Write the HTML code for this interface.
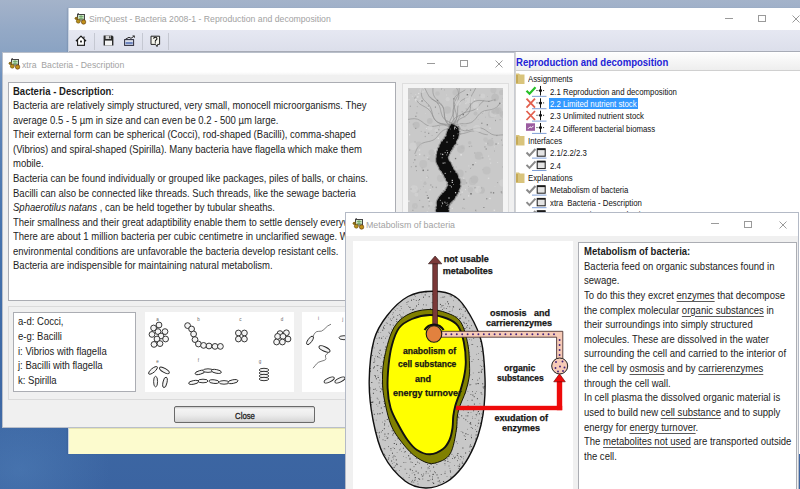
<!DOCTYPE html>
<html><head><meta charset="utf-8">
<style>
*{margin:0;padding:0;box-sizing:border-box}
html,body{width:800px;height:489px;overflow:hidden}
body{position:relative;font-family:"Liberation Sans",sans-serif;
background:radial-gradient(ellipse 90px 70px at 20px 470px,rgba(90,140,195,.35),rgba(90,140,195,0)),linear-gradient(180deg,#a4b3ca 0px,#94a9c6 30px,#8aa3c3 52px,#6f92bf 75px,#5b82b6 130px,#4673ad 230px,#3f6ba7 330px,#3b64a1 489px);}
.a{position:absolute}
.t{position:absolute;white-space:nowrap;transform-origin:0 0;transform:scaleX(.865);font-size:11px;line-height:14.55px;color:#1c1c1c}
.win{position:absolute;background:#fff;border:1px solid #8f9db5}
.ttl{position:absolute;white-space:nowrap;transform-origin:0 0;transform:scaleX(1.01);font-size:8.6px;line-height:10px;color:#a2a2a2}
.ctl{position:absolute;}
.tree{position:absolute;white-space:nowrap;transform-origin:0 0;transform:scaleX(.866);font-size:9px;line-height:12.4px;color:#111}
u{text-decoration:underline;text-decoration-color:#5a5a5a;text-underline-offset:1.5px}
.dg{position:absolute;white-space:nowrap;font-weight:bold;font-size:9px;color:#151515;transform-origin:0 0;-webkit-text-stroke:.25px #151515}
</style></head><body>

<!-- MAIN WINDOW -->
<div class="a" style="left:68px;top:8px;width:740px;height:445.5px;background:#fff;border-left:1px solid #c8d2e0;box-shadow:-1px 0 1px rgba(40,60,90,.12)"></div>
<div class="a" style="left:69px;top:30px;width:740px;height:22px;background:linear-gradient(#e6e8f2,#dcdfeb);border-bottom:1px solid #a7abb6"></div>
<div class="ttl" style="left:88.5px;top:13.9px">SimQuest - Bacteria 2008-1 - Reproduction and decomposition</div>
<!-- main window icon -->
<svg class="a" style="left:74px;top:12px" width="13" height="13" viewBox="0 0 13 13">
<path d="M3.5 2.5 L4.5 1" stroke="#333" stroke-width="1"/>
<rect x="3.5" y="2.5" width="7" height="5.5" fill="#cfe3c8" stroke="#444" stroke-width="1"/>
<path d="M5 4.5h4.5M5 6.3h4.5M7 3v5" stroke="#5a9a50" stroke-width="0.7"/>
<circle cx="2.3" cy="6.3" r="1.6" fill="#8a6a18"/>
<circle cx="4.3" cy="9.2" r="2" fill="#b8901c" stroke="#5a4008" stroke-width="0.5"/>
<circle cx="9.6" cy="10" r="2.2" fill="#c09018" stroke="#5a3008" stroke-width="0.6"/>
</svg>
<!-- main window controls -->
<div class="a" style="left:725px;top:18px;width:7.5px;height:1px;background:#9a9a9a"></div>
<div class="a" style="left:758px;top:14.5px;width:8px;height:7.5px;border:1px solid #9a9a9a"></div>
<svg class="a" style="left:792px;top:15px" width="8" height="8"><path d="M.5 .5L7.5 7.5M7.5 .5L.5 7.5" stroke="#9a9a9a" stroke-width="1"/></svg>
<!-- toolbar separators -->
<div class="a" style="left:94px;top:33px;width:1px;height:17px;background:#c5c8d2"></div>
<div class="a" style="left:142px;top:33px;width:1px;height:17px;background:#c5c8d2"></div>
<div class="a" style="left:168px;top:33px;width:1px;height:17px;background:#c5c8d2"></div>
<!-- toolbar icons -->
<svg class="a" style="left:75px;top:35px" width="12" height="11" viewBox="0 0 12 11">
<path d="M1 6.2L6 1.2L11 6.2M2.6 4.8v5.4h6.8V4.8M9 3.2V1.5" fill="#fff" stroke="#1a1a1a" stroke-width="1.05"/><path d="M2.6 5v5.2h6.8V5L6 1.8z" fill="#fff"/><path d="M1 6.2L6 1.2L11 6.2M2.6 4.8v5.4h6.8V4.8" fill="none" stroke="#1a1a1a" stroke-width="1.05"/><rect x="5.1" y="5.6" width="1.8" height="1.8" fill="#1a1a1a"/></svg>
<svg class="a" style="left:103px;top:35px" width="11" height="11" viewBox="0 0 11 11">
<path d="M0.6 0.6h8.6l1.2 1.2v8.6H0.6z" fill="#2a2a2a"/><rect x="2.6" y="0.6" width="5.4" height="3.4" fill="#d4d4d4"/><rect x="6.2" y="1.2" width="1.2" height="2.2" fill="#2a2a2a"/><rect x="2" y="5.6" width="7" height="4.8" fill="#f4f4f4"/></svg>
<svg class="a" style="left:124px;top:35px" width="11" height="11" viewBox="0 0 11 11">
<rect x="0.6" y="4.6" width="9" height="5.8" fill="#d9deea" stroke="#2a2a3a" stroke-width="1"/><rect x="1.5" y="7" width="7.2" height="2.2" fill="#6f86c0"/><path d="M1.5 4.2L5 2.3l2 1 3-2" fill="none" stroke="#2a2a2a" stroke-width="1"/><path d="M8.5 0.8h2v2" fill="none" stroke="#2a2a2a" stroke-width=".8"/></svg>
<svg class="a" style="left:150px;top:34.5px" width="11" height="13" viewBox="0 0 11 13">
<path d="M1 1.2h8.6v8.2H7.6l-0.6 2.2-1.4-2.2H1z" fill="#f6f6ee" stroke="#222" stroke-width="1"/><path d="M3.7 3.8q0-1.6 1.6-1.6t1.6 1.5q0 .9-.8 1.3t-.8 1.3v.5" fill="none" stroke="#111" stroke-width="1.1"/><rect x="4.8" y="7.3" width="1.1" height="1.1" fill="#111"/></svg>

<!-- tree panel -->
<div class="a" style="left:515px;top:52px;width:1px;height:170px;background:#d4d4d4"></div>
<div class="a" style="left:516px;top:53px;width:290px;height:18px;background:linear-gradient(#fdfdfd,#eeeeee);border-bottom:1px solid #d0d0d0"></div>
<div class="a" style="left:516px;top:56.5px;white-space:nowrap;font-weight:bold;font-size:10px;color:#2323d6;transform-origin:0 0;transform:scaleX(.955)">Reproduction and decomposition</div>

<!--TREE-->
<div class="a" style="left:549px;top:98.3px;width:89px;height:10.5px;background:#3399ff"></div>
<svg class="a" style="left:512px;top:70px" width="40" height="155" viewBox="512 70 40 155">
<path d="M516,73.5 h3 l1,1 h4.5 v9.5 h-8.5z" fill="#d9c47c"/><rect x="516" y="75" width="2" height="8" fill="#b89a40" opacity=".6"/>
<rect x="532" y="95.85" width="14.5" height="1" fill="#7f9fd6"/>
<path d="M526.5,90.75 l3,3 l6,-6.5" fill="none" stroke="#27c027" stroke-width="2.2"/>
<rect x="540" y="85.95" width="1" height="9.5" fill="#111"/><path d="M536.5,90.55 h8" stroke="#111" stroke-width="1" stroke-dasharray="1 1.2"/><circle cx="540.5" cy="90.55" r="1.5" fill="#111"/>
<rect x="532" y="108.19999999999999" width="14.5" height="1" fill="#7f9fd6"/>
<path d="M526.5,98.6 l8.5,9 M535,98.6 l-8.5,9" fill="none" stroke="#e2604e" stroke-width="1.8"/>
<rect x="540" y="98.3" width="1" height="9.5" fill="#111"/><path d="M536.5,102.89999999999999 h8" stroke="#111" stroke-width="1" stroke-dasharray="1 1.2"/><circle cx="540.5" cy="102.89999999999999" r="1.5" fill="#111"/>
<rect x="532" y="120.6" width="14.5" height="1" fill="#7f9fd6"/>
<path d="M526.5,111 l8.5,9 M535,111 l-8.5,9" fill="none" stroke="#e2604e" stroke-width="1.8"/>
<rect x="540" y="110.7" width="1" height="9.5" fill="#111"/><path d="M536.5,115.3 h8" stroke="#111" stroke-width="1" stroke-dasharray="1 1.2"/><circle cx="540.5" cy="115.3" r="1.5" fill="#111"/>
<rect x="532" y="132.9" width="14.5" height="1" fill="#7f9fd6"/>
<rect x="526" y="123.30000000000001" width="9" height="7.5" fill="#9b5ca0"/><path d="M528,128.8 l2,-2 l1.5,1 l2,-2" stroke="#fff" stroke-width="1" fill="none"/>
<rect x="540" y="123.00000000000001" width="1" height="9.5" fill="#111"/><path d="M536.5,127.60000000000001 h8" stroke="#111" stroke-width="1" stroke-dasharray="1 1.2"/><circle cx="540.5" cy="127.60000000000001" r="1.5" fill="#111"/>
<path d="M516,135.1 h3 l1,1 h4.5 v9.5 h-8.5z" fill="#d9c47c"/><rect x="516" y="136.6" width="2" height="8" fill="#b89a40" opacity=".6"/>
<rect x="532" y="157.6" width="14.5" height="1" fill="#7f9fd6"/>
<path d="M526.5,152.5 l3,3 l6,-6.5" fill="none" stroke="#8a8a8a" stroke-width="2"/>
<rect x="537.2" y="148.8" width="8" height="7.4" fill="#e4e4e4" stroke="#1a1a1a" stroke-width="1"/><rect x="537.2" y="148.5" width="8" height="1.6" fill="#1a1a1a"/>
<rect x="532" y="170.0" width="14.5" height="1" fill="#7f9fd6"/>
<path d="M526.5,164.9 l3,3 l6,-6.5" fill="none" stroke="#8a8a8a" stroke-width="2"/>
<rect x="537.2" y="161.20000000000002" width="8" height="7.4" fill="#e4e4e4" stroke="#1a1a1a" stroke-width="1"/><rect x="537.2" y="160.9" width="8" height="1.6" fill="#1a1a1a"/>
<path d="M516,172.5 h3 l1,1 h4.5 v9.5 h-8.5z" fill="#d9c47c"/><rect x="516" y="174" width="2" height="8" fill="#b89a40" opacity=".6"/>
<rect x="532" y="194.6" width="14.5" height="1" fill="#7f9fd6"/>
<path d="M526.5,189.5 l3,3 l6,-6.5" fill="none" stroke="#8a8a8a" stroke-width="2"/>
<rect x="537.2" y="185.8" width="8" height="7.4" fill="#e4e4e4" stroke="#1a1a1a" stroke-width="1"/><rect x="537.2" y="185.5" width="8" height="1.6" fill="#1a1a1a"/>
<rect x="532" y="207.2" width="14.5" height="1" fill="#7f9fd6"/>
<path d="M526.5,202.1 l3,3 l6,-6.5" fill="none" stroke="#8a8a8a" stroke-width="2"/>
<rect x="537.2" y="198.4" width="8" height="7.4" fill="#e4e4e4" stroke="#1a1a1a" stroke-width="1"/><rect x="537.2" y="198.1" width="8" height="1.6" fill="#1a1a1a"/>
<rect x="532" y="219.6" width="14.5" height="1" fill="#7f9fd6"/>
<path d="M526.5,214.5 l3,3 l6,-6.5" fill="none" stroke="#8a8a8a" stroke-width="2"/>
<rect x="537.2" y="210.8" width="8" height="7.4" fill="#e4e4e4" stroke="#1a1a1a" stroke-width="1"/><rect x="537.2" y="210.5" width="8" height="1.6" fill="#1a1a1a"/>
</svg>
<div class="tree" style="left:528px;top:73.4px">Assignments</div>
<div class="tree" style="left:549.5px;top:85.7px">2.1 Reproduction and decomposition</div>
<div class="tree" style="left:549.5px;top:98.0px;color:#fff">2.2 Limited nutrient stock</div>
<div class="tree" style="left:549.5px;top:110.4px">2.3 Unlimited nutrient stock</div>
<div class="tree" style="left:549.5px;top:122.7px">2.4 Different bacterial biomass</div>
<div class="tree" style="left:528px;top:135.0px">Interfaces</div>
<div class="tree" style="left:549.5px;top:147.4px">2.1/2.2/2.3</div>
<div class="tree" style="left:549.5px;top:159.8px">2.4</div>
<div class="tree" style="left:528px;top:172.4px">Explanations</div>
<div class="tree" style="left:549.5px;top:184.4px">Metabolism of bacteria</div>
<div class="tree" style="left:549.5px;top:197.0px">xtra&nbsp; Bacteria - Description</div>
<div class="tree" style="left:549.5px;top:209.4px">xtra&nbsp; Bacteria - Reproduction</div>
<!-- yellow strip -->
<div class="a" style="left:69px;top:428px;width:280px;height:25.5px;background:#fcfbce;border-top:1px solid #e6e4b0"></div>

<!-- DESCRIPTION WINDOW -->
<div class="a" style="left:2px;top:52px;width:513px;height:376px;background:#f0f0f0;border:1px solid #b9bfca;border-right-color:#c9ccd2"></div>
<div class="a" style="left:3px;top:53px;width:511px;height:22px;background:linear-gradient(#fff 0,#fff 19px,#f4f4f4 22px)"></div>
<div class="ttl" style="left:22px;top:59.5px">xtra&nbsp; Bacteria - Description</div>
<div class="a" style="left:427px;top:63px;width:8px;height:1px;background:#9a9a9a"></div>
<div class="a" style="left:460px;top:59.8px;width:8px;height:7.5px;border:1px solid #9a9a9a"></div>
<svg class="a" style="left:494.5px;top:59.8px" width="8" height="8"><path d="M.5 .5L7.5 7.5M7.5 .5L.5 7.5" stroke="#9a9a9a" stroke-width="1"/></svg>
<svg class="a" style="left:8px;top:56.5px" width="13" height="13" viewBox="0 0 13 13">
<path d="M3.5 2.5 L4.5 1" stroke="#333" stroke-width="1"/>
<rect x="3.5" y="2.5" width="7" height="5.5" fill="#cfe3c8" stroke="#444" stroke-width="1"/>
<path d="M5 4.5h4.5M5 6.3h4.5M7 3v5" stroke="#5a9a50" stroke-width="0.7"/>
<circle cx="2.3" cy="6.3" r="1.6" fill="#8a6a18"/>
<circle cx="4.3" cy="9.2" r="2" fill="#b8901c" stroke="#5a4008" stroke-width="0.5"/>
<circle cx="9.6" cy="10" r="2.2" fill="#c09018" stroke="#5a3008" stroke-width="0.6"/>
</svg>

<!-- text box -->
<div class="a" style="left:8px;top:82px;width:388px;height:219px;background:#fff;border:1px solid #abadb3"></div>
<div class="t" style="left:13px;top:83.7px;width:440px">
<div><b>Bacteria - Description</b>:</div>
<div>Bacteria are relatively simply structured, very small, monocell microorganisms. They</div>
<div>average 0.5 - 5 µm in size and can even be 0.2 - 500 µm large.</div>
<div>Their external form can be spherical (Cocci), rod-shaped (Bacilli), comma-shaped</div>
<div>(Vibrios) and spiral-shaped (Spirilla). Many bacteria have flagella which make them</div>
<div>mobile.</div>
<div>Bacteria can be found individually or grouped like packages, piles of balls, or chains.</div>
<div>Bacilli can also be connected like threads. Such threads, like the sewage bacteria</div>
<div><i>Sphaerotilus natans</i> , can be held together by tubular sheaths.</div>
<div>Their smallness and their great adaptibility enable them to settle densely everywhere.</div>
<div>There are about 1 million bacteria per cubic centimetre in unclarified sewage. When</div>
<div>environmental conditions are unfavorable the bacteria develop resistant cells.</div>
<div>Bacteria are indispensible for maintaining natural metabolism.</div>
</div>

<!-- photo -->
<div class="a" style="left:402px;top:83px;width:107px;height:140px;background:#f4f4f4;border:1px solid #dedede"></div>
<svg class="a" style="left:408px;top:88px" width="95" height="130" viewBox="0 0 95 130"><rect width="95" height="130" fill="#c9c9c9"/><rect x="43.0" y="72.8" width="1.5" height="1.5" fill="#dadada"/><rect x="42.9" y="111.2" width="0.8" height="0.8" fill="#e2e2e2"/><rect x="45.2" y="79.8" width="0.8" height="0.8" fill="#dadada"/><rect x="28.8" y="11.8" width="1.4" height="1.4" fill="#7a7a7a"/><rect x="60.3" y="77.4" width="1.0" height="1.0" fill="#dadada"/><rect x="62.1" y="80.0" width="0.8" height="0.8" fill="#9a9a9a"/><rect x="79.0" y="8.2" width="0.6" height="0.6" fill="#aaaaaa"/><rect x="57.0" y="101.2" width="0.9" height="0.9" fill="#e2e2e2"/><rect x="80.0" y="67.5" width="1.2" height="1.2" fill="#dadada"/><rect x="0.4" y="11.0" width="1.3" height="1.3" fill="#dadada"/><rect x="94.8" y="129.4" width="1.4" height="1.4" fill="#7a7a7a"/><rect x="24.1" y="98.5" width="1.1" height="1.1" fill="#9a9a9a"/><rect x="6.7" y="99.6" width="1.0" height="1.0" fill="#b5b5b5"/><rect x="36.7" y="124.5" width="1.4" height="1.4" fill="#9a9a9a"/><rect x="20.3" y="120.5" width="0.7" height="0.7" fill="#dadada"/><rect x="93.1" y="51.7" width="0.7" height="0.7" fill="#7a7a7a"/><rect x="18.9" y="87.7" width="0.9" height="0.9" fill="#b5b5b5"/><rect x="31.6" y="125.3" width="1.4" height="1.4" fill="#9a9a9a"/><rect x="12.8" y="91.9" width="0.6" height="0.6" fill="#dadada"/><rect x="75.7" y="23.1" width="1.2" height="1.2" fill="#dadada"/><rect x="48.3" y="128.1" width="1.4" height="1.4" fill="#dadada"/><rect x="61.2" y="15.1" width="1.0" height="1.0" fill="#aaaaaa"/><rect x="0.0" y="112.4" width="1.6" height="1.6" fill="#e2e2e2"/><rect x="28.9" y="115.0" width="0.8" height="0.8" fill="#dadada"/><rect x="94.6" y="78.3" width="1.2" height="1.2" fill="#9a9a9a"/><rect x="94.0" y="27.7" width="0.9" height="0.9" fill="#e2e2e2"/><rect x="31.3" y="38.5" width="0.7" height="0.7" fill="#9a9a9a"/><rect x="19.8" y="82.8" width="0.6" height="0.6" fill="#b5b5b5"/><rect x="35.3" y="58.9" width="1.6" height="1.6" fill="#dadada"/><rect x="79.1" y="17.6" width="1.0" height="1.0" fill="#7a7a7a"/><rect x="14.6" y="118.1" width="1.4" height="1.4" fill="#aaaaaa"/><rect x="68.9" y="20.6" width="1.2" height="1.2" fill="#e2e2e2"/><rect x="18.7" y="123.5" width="1.5" height="1.5" fill="#e2e2e2"/><rect x="7.5" y="6.2" width="0.7" height="0.7" fill="#e2e2e2"/><rect x="91.5" y="31.0" width="1.3" height="1.3" fill="#b5b5b5"/><rect x="40.0" y="117.6" width="1.1" height="1.1" fill="#e2e2e2"/><rect x="16.7" y="93.6" width="0.7" height="0.7" fill="#aaaaaa"/><rect x="45.5" y="85.0" width="1.2" height="1.2" fill="#9a9a9a"/><rect x="26.6" y="119.3" width="0.8" height="0.8" fill="#9a9a9a"/><rect x="6.6" y="53.5" width="0.8" height="0.8" fill="#9a9a9a"/><rect x="16.7" y="47.9" width="1.2" height="1.2" fill="#aaaaaa"/><rect x="8.8" y="18.0" width="1.1" height="1.1" fill="#b5b5b5"/><rect x="62.4" y="89.9" width="1.2" height="1.2" fill="#aaaaaa"/><rect x="56.0" y="120.1" width="1.1" height="1.1" fill="#b5b5b5"/><rect x="66.6" y="125.2" width="0.6" height="0.6" fill="#7a7a7a"/><rect x="7.1" y="8.7" width="0.9" height="0.9" fill="#aaaaaa"/><rect x="94.9" y="9.8" width="1.1" height="1.1" fill="#7a7a7a"/><rect x="4.2" y="121.7" width="1.3" height="1.3" fill="#aaaaaa"/><rect x="75.4" y="119.0" width="1.0" height="1.0" fill="#7a7a7a"/><rect x="45.0" y="10.1" width="1.5" height="1.5" fill="#9a9a9a"/><rect x="82.0" y="74.5" width="1.2" height="1.2" fill="#dadada"/><rect x="36.0" y="1.6" width="0.7" height="0.7" fill="#9a9a9a"/><rect x="60.7" y="129.1" width="1.5" height="1.5" fill="#7a7a7a"/><rect x="31.4" y="121.5" width="1.3" height="1.3" fill="#dadada"/><rect x="41.8" y="109.0" width="0.7" height="0.7" fill="#e2e2e2"/><rect x="2.8" y="78.2" width="1.1" height="1.1" fill="#aaaaaa"/><rect x="91.0" y="14.7" width="1.4" height="1.4" fill="#7a7a7a"/><rect x="87.4" y="33.3" width="0.6" height="0.6" fill="#b5b5b5"/><rect x="13.6" y="79.5" width="1.1" height="1.1" fill="#b5b5b5"/><rect x="62.7" y="57.5" width="1.5" height="1.5" fill="#b5b5b5"/><rect x="38.5" y="32.6" width="1.2" height="1.2" fill="#aaaaaa"/><rect x="83.6" y="50.0" width="1.2" height="1.2" fill="#b5b5b5"/><rect x="19.9" y="17.5" width="1.0" height="1.0" fill="#9a9a9a"/><rect x="67.6" y="123.5" width="0.9" height="0.9" fill="#aaaaaa"/><rect x="10.7" y="61.3" width="1.5" height="1.5" fill="#dadada"/><rect x="36.3" y="67.6" width="1.3" height="1.3" fill="#7a7a7a"/><rect x="79.7" y="127.7" width="1.1" height="1.1" fill="#9a9a9a"/><rect x="78.7" y="36.2" width="1.2" height="1.2" fill="#7a7a7a"/><rect x="67.3" y="74.2" width="0.9" height="0.9" fill="#e2e2e2"/><rect x="1.8" y="17.7" width="1.1" height="1.1" fill="#9a9a9a"/><rect x="73.1" y="34.6" width="1.4" height="1.4" fill="#9a9a9a"/><rect x="93.5" y="15.0" width="0.7" height="0.7" fill="#e2e2e2"/><rect x="62.2" y="105.0" width="1.6" height="1.6" fill="#7a7a7a"/><rect x="18.8" y="107.1" width="0.9" height="0.9" fill="#7a7a7a"/><rect x="1.0" y="61.4" width="1.3" height="1.3" fill="#aaaaaa"/><rect x="21.5" y="101.2" width="1.1" height="1.1" fill="#e2e2e2"/><rect x="47.5" y="129.6" width="0.8" height="0.8" fill="#7a7a7a"/><rect x="86.1" y="11.3" width="1.5" height="1.5" fill="#7a7a7a"/><rect x="36.9" y="58.6" width="0.8" height="0.8" fill="#9a9a9a"/><rect x="35.8" y="73.9" width="1.5" height="1.5" fill="#b5b5b5"/><rect x="44.1" y="84.7" width="0.8" height="0.8" fill="#7a7a7a"/><rect x="82.3" y="103.8" width="1.5" height="1.5" fill="#9a9a9a"/><rect x="20.3" y="117.0" width="1.6" height="1.6" fill="#b5b5b5"/><rect x="51.0" y="102.8" width="0.9" height="0.9" fill="#7a7a7a"/><rect x="81.3" y="45.3" width="0.7" height="0.7" fill="#dadada"/><rect x="32.5" y="54.8" width="0.9" height="0.9" fill="#9a9a9a"/><rect x="20.7" y="112.8" width="1.0" height="1.0" fill="#9a9a9a"/><rect x="16.4" y="43.6" width="1.4" height="1.4" fill="#aaaaaa"/><rect x="44.7" y="130.0" width="1.5" height="1.5" fill="#e2e2e2"/><rect x="79.8" y="89.6" width="1.5" height="1.5" fill="#dadada"/><rect x="55.0" y="89.6" width="1.4" height="1.4" fill="#dadada"/><rect x="50.0" y="37.7" width="1.3" height="1.3" fill="#7a7a7a"/><rect x="15.6" y="66.8" width="1.5" height="1.5" fill="#b5b5b5"/><rect x="29.6" y="49.6" width="1.4" height="1.4" fill="#e2e2e2"/><rect x="19.8" y="110.6" width="1.6" height="1.6" fill="#e2e2e2"/><rect x="25.9" y="64.7" width="1.0" height="1.0" fill="#9a9a9a"/><rect x="47.8" y="78.7" width="0.6" height="0.6" fill="#9a9a9a"/><rect x="49.0" y="52.1" width="1.4" height="1.4" fill="#e2e2e2"/><rect x="11.6" y="12.1" width="0.8" height="0.8" fill="#e2e2e2"/><rect x="43.6" y="119.7" width="1.4" height="1.4" fill="#dadada"/><rect x="25.6" y="61.5" width="0.7" height="0.7" fill="#dadada"/><rect x="85.6" y="121.6" width="1.5" height="1.5" fill="#e2e2e2"/><rect x="30.1" y="24.9" width="1.2" height="1.2" fill="#b5b5b5"/><rect x="12.3" y="101.3" width="0.6" height="0.6" fill="#aaaaaa"/><rect x="14.8" y="1.5" width="0.9" height="0.9" fill="#7a7a7a"/><rect x="33.8" y="80.6" width="0.7" height="0.7" fill="#7a7a7a"/><rect x="55.3" y="110.7" width="1.2" height="1.2" fill="#7a7a7a"/><rect x="18.8" y="68.9" width="1.0" height="1.0" fill="#dadada"/><rect x="60.1" y="107.3" width="1.2" height="1.2" fill="#e2e2e2"/><rect x="19.4" y="82.1" width="1.2" height="1.2" fill="#e2e2e2"/><rect x="20.5" y="70.6" width="1.2" height="1.2" fill="#aaaaaa"/><rect x="22.1" y="96.3" width="1.4" height="1.4" fill="#aaaaaa"/><rect x="30.0" y="40.9" width="1.5" height="1.5" fill="#aaaaaa"/><rect x="73.9" y="25.3" width="0.7" height="0.7" fill="#aaaaaa"/><rect x="12.6" y="11.5" width="1.0" height="1.0" fill="#dadada"/><rect x="79.1" y="54.8" width="1.4" height="1.4" fill="#aaaaaa"/><rect x="19.1" y="81.6" width="1.4" height="1.4" fill="#9a9a9a"/><rect x="19.1" y="88.7" width="1.5" height="1.5" fill="#b5b5b5"/><rect x="11.0" y="65.7" width="1.4" height="1.4" fill="#e2e2e2"/><rect x="94.9" y="108.3" width="1.4" height="1.4" fill="#dadada"/><rect x="10.1" y="4.9" width="1.2" height="1.2" fill="#e2e2e2"/><rect x="86.0" y="62.6" width="0.8" height="0.8" fill="#9a9a9a"/><rect x="19.4" y="109.2" width="1.6" height="1.6" fill="#7a7a7a"/><rect x="9.0" y="8.1" width="1.6" height="1.6" fill="#dadada"/><rect x="7.4" y="12.6" width="1.0" height="1.0" fill="#dadada"/><rect x="49.0" y="55.9" width="1.2" height="1.2" fill="#9a9a9a"/><rect x="60.2" y="5.3" width="0.8" height="0.8" fill="#dadada"/><rect x="43.1" y="96.1" width="1.0" height="1.0" fill="#aaaaaa"/><rect x="57.5" y="12.3" width="1.4" height="1.4" fill="#b5b5b5"/><rect x="84.9" y="104.2" width="1.3" height="1.3" fill="#7a7a7a"/><rect x="89.3" y="74.1" width="0.8" height="0.8" fill="#e2e2e2"/><rect x="93.4" y="104.6" width="0.9" height="0.9" fill="#9a9a9a"/><rect x="70.7" y="101.1" width="1.4" height="1.4" fill="#dadada"/><rect x="12.7" y="42.9" width="1.1" height="1.1" fill="#b5b5b5"/><rect x="72.9" y="99.5" width="1.0" height="1.0" fill="#7a7a7a"/><rect x="17.6" y="103.7" width="0.9" height="0.9" fill="#9a9a9a"/><rect x="1.0" y="46.2" width="1.2" height="1.2" fill="#e2e2e2"/><rect x="4.7" y="35.5" width="1.6" height="1.6" fill="#b5b5b5"/><rect x="32.1" y="85.8" width="1.2" height="1.2" fill="#e2e2e2"/><rect x="7.3" y="66.9" width="1.1" height="1.1" fill="#aaaaaa"/><rect x="66.6" y="99.0" width="1.6" height="1.6" fill="#9a9a9a"/><rect x="10.9" y="14.0" width="0.8" height="0.8" fill="#dadada"/><rect x="38.1" y="6.6" width="0.8" height="0.8" fill="#dadada"/><rect x="1.0" y="33.6" width="0.9" height="0.9" fill="#b5b5b5"/><rect x="52.3" y="66.0" width="1.6" height="1.6" fill="#e2e2e2"/><rect x="80.4" y="13.0" width="1.0" height="1.0" fill="#7a7a7a"/><rect x="7.2" y="77.7" width="1.4" height="1.4" fill="#9a9a9a"/><rect x="36.7" y="122.0" width="1.0" height="1.0" fill="#aaaaaa"/><rect x="81.3" y="70.5" width="1.2" height="1.2" fill="#dadada"/><rect x="89.8" y="54.7" width="1.1" height="1.1" fill="#e2e2e2"/><rect x="29.7" y="69.0" width="1.1" height="1.1" fill="#b5b5b5"/><rect x="53.3" y="36.9" width="1.3" height="1.3" fill="#b5b5b5"/><rect x="2.6" y="100.4" width="1.2" height="1.2" fill="#7a7a7a"/><rect x="14.9" y="98.1" width="1.0" height="1.0" fill="#b5b5b5"/><rect x="71.1" y="6.5" width="1.6" height="1.6" fill="#b5b5b5"/><rect x="7.0" y="117.7" width="1.0" height="1.0" fill="#dadada"/><rect x="23.8" y="98.2" width="0.6" height="0.6" fill="#9a9a9a"/><rect x="89.0" y="94.0" width="1.1" height="1.1" fill="#aaaaaa"/><rect x="57.3" y="15.0" width="1.2" height="1.2" fill="#dadada"/><rect x="11.2" y="111.9" width="1.0" height="1.0" fill="#aaaaaa"/><rect x="11.8" y="57.6" width="1.3" height="1.3" fill="#dadada"/><rect x="57.1" y="83.1" width="1.3" height="1.3" fill="#b5b5b5"/><rect x="73.9" y="69.0" width="1.6" height="1.6" fill="#b5b5b5"/><rect x="69.8" y="31.0" width="0.7" height="0.7" fill="#b5b5b5"/><rect x="74.5" y="81.2" width="1.0" height="1.0" fill="#b5b5b5"/><rect x="57.9" y="94.3" width="1.3" height="1.3" fill="#aaaaaa"/><rect x="60.1" y="97.9" width="0.8" height="0.8" fill="#aaaaaa"/><rect x="47.7" y="84.9" width="0.8" height="0.8" fill="#7a7a7a"/><rect x="3.8" y="7.9" width="0.9" height="0.9" fill="#dadada"/><rect x="2.6" y="4.9" width="0.8" height="0.8" fill="#b5b5b5"/><rect x="6.9" y="11.2" width="1.3" height="1.3" fill="#e2e2e2"/><rect x="22.3" y="127.6" width="1.1" height="1.1" fill="#b5b5b5"/><rect x="20.0" y="44.7" width="1.3" height="1.3" fill="#9a9a9a"/><rect x="76.2" y="58.2" width="1.4" height="1.4" fill="#aaaaaa"/><rect x="42.2" y="97.2" width="1.0" height="1.0" fill="#aaaaaa"/><rect x="35.1" y="85.0" width="1.6" height="1.6" fill="#b5b5b5"/><rect x="27.6" y="98.7" width="1.4" height="1.4" fill="#aaaaaa"/><rect x="40.6" y="48.0" width="0.7" height="0.7" fill="#b5b5b5"/><rect x="7.5" y="10.8" width="1.2" height="1.2" fill="#dadada"/><rect x="77.5" y="60.3" width="1.4" height="1.4" fill="#9a9a9a"/><rect x="7.2" y="27.7" width="1.3" height="1.3" fill="#9a9a9a"/><rect x="66.0" y="64.3" width="1.4" height="1.4" fill="#b5b5b5"/><rect x="26.9" y="18.6" width="1.0" height="1.0" fill="#7a7a7a"/><rect x="31.1" y="117.8" width="0.9" height="0.9" fill="#dadada"/><rect x="54.1" y="119.4" width="1.5" height="1.5" fill="#b5b5b5"/><rect x="41.6" y="104.4" width="0.9" height="0.9" fill="#b5b5b5"/><rect x="21.0" y="125.8" width="1.3" height="1.3" fill="#e2e2e2"/><rect x="23.6" y="47.0" width="1.0" height="1.0" fill="#b5b5b5"/><rect x="64.3" y="76.0" width="1.4" height="1.4" fill="#7a7a7a"/><rect x="53.6" y="103.6" width="1.1" height="1.1" fill="#e2e2e2"/><rect x="53.5" y="23.0" width="1.4" height="1.4" fill="#b5b5b5"/><rect x="77.1" y="28.8" width="0.7" height="0.7" fill="#aaaaaa"/><rect x="53.9" y="125.6" width="1.3" height="1.3" fill="#dadada"/><rect x="6.1" y="71.1" width="1.4" height="1.4" fill="#9a9a9a"/><rect x="31.8" y="35.6" width="0.7" height="0.7" fill="#b5b5b5"/><rect x="8.0" y="82.4" width="0.7" height="0.7" fill="#7a7a7a"/><rect x="77.5" y="54.9" width="1.3" height="1.3" fill="#dadada"/><rect x="72.7" y="67.8" width="1.4" height="1.4" fill="#dadada"/><rect x="33.3" y="104.9" width="0.9" height="0.9" fill="#aaaaaa"/><rect x="46.9" y="69.9" width="1.3" height="1.3" fill="#7a7a7a"/><rect x="58.7" y="6.0" width="1.4" height="1.4" fill="#7a7a7a"/><rect x="33.2" y="0.5" width="1.0" height="1.0" fill="#9a9a9a"/><rect x="84.4" y="124.5" width="1.2" height="1.2" fill="#e2e2e2"/><rect x="34.4" y="1.3" width="0.7" height="0.7" fill="#dadada"/><rect x="87.0" y="31.9" width="0.8" height="0.8" fill="#7a7a7a"/><rect x="35.7" y="21.8" width="0.8" height="0.8" fill="#dadada"/><rect x="50.3" y="35.6" width="1.5" height="1.5" fill="#dadada"/><rect x="29.3" y="14.9" width="1.2" height="1.2" fill="#aaaaaa"/><rect x="86.7" y="97.9" width="0.6" height="0.6" fill="#dadada"/><rect x="86.4" y="4.7" width="0.7" height="0.7" fill="#aaaaaa"/><rect x="34.1" y="76.5" width="1.2" height="1.2" fill="#dadada"/><rect x="56.5" y="29.1" width="0.8" height="0.8" fill="#b5b5b5"/><rect x="38.2" y="118.4" width="1.5" height="1.5" fill="#7a7a7a"/><rect x="52.1" y="106.2" width="1.1" height="1.1" fill="#b5b5b5"/><rect x="46.1" y="52.3" width="1.6" height="1.6" fill="#7a7a7a"/><rect x="52.0" y="124.4" width="1.1" height="1.1" fill="#aaaaaa"/><rect x="37.9" y="28.3" width="0.7" height="0.7" fill="#dadada"/><rect x="92.7" y="103.3" width="1.4" height="1.4" fill="#9a9a9a"/><rect x="62.5" y="30.9" width="0.6" height="0.6" fill="#dadada"/><rect x="86.0" y="58.5" width="0.8" height="0.8" fill="#dadada"/><rect x="57.6" y="20.4" width="0.8" height="0.8" fill="#b5b5b5"/><rect x="13.8" y="118.1" width="1.4" height="1.4" fill="#aaaaaa"/><rect x="60.5" y="129.1" width="0.9" height="0.9" fill="#e2e2e2"/><rect x="5.0" y="74.3" width="0.8" height="0.8" fill="#aaaaaa"/><rect x="78.0" y="110.0" width="1.4" height="1.4" fill="#9a9a9a"/><rect x="33.4" y="79.9" width="1.1" height="1.1" fill="#dadada"/><rect x="65.9" y="10.8" width="1.3" height="1.3" fill="#e2e2e2"/><rect x="81.4" y="39.5" width="1.4" height="1.4" fill="#dadada"/><rect x="18.3" y="88.7" width="1.4" height="1.4" fill="#dadada"/><rect x="19.8" y="70.6" width="1.1" height="1.1" fill="#aaaaaa"/><rect x="89.9" y="125.3" width="0.9" height="0.9" fill="#dadada"/><rect x="7.2" y="39.7" width="1.1" height="1.1" fill="#7a7a7a"/><rect x="6.4" y="9.7" width="0.7" height="0.7" fill="#7a7a7a"/><rect x="37.5" y="60.0" width="1.6" height="1.6" fill="#9a9a9a"/><rect x="62.1" y="1.6" width="1.0" height="1.0" fill="#7a7a7a"/><rect x="45.1" y="38.2" width="0.7" height="0.7" fill="#9a9a9a"/><rect x="81.3" y="109.8" width="1.3" height="1.3" fill="#e2e2e2"/><rect x="14.5" y="81.6" width="1.5" height="1.5" fill="#7a7a7a"/><rect x="28.3" y="43.9" width="1.0" height="1.0" fill="#7a7a7a"/><rect x="8.3" y="24.5" width="1.0" height="1.0" fill="#9a9a9a"/><rect x="31.3" y="122.9" width="1.2" height="1.2" fill="#7a7a7a"/><rect x="60.8" y="58.1" width="1.0" height="1.0" fill="#9a9a9a"/><rect x="13.4" y="12.3" width="1.3" height="1.3" fill="#7a7a7a"/><rect x="17.0" y="25.1" width="0.6" height="0.6" fill="#dadada"/><rect x="56.3" y="11.7" width="0.8" height="0.8" fill="#aaaaaa"/><rect x="93.8" y="56.4" width="1.4" height="1.4" fill="#b5b5b5"/><rect x="87.5" y="55.5" width="1.1" height="1.1" fill="#7a7a7a"/><rect x="19.5" y="19.2" width="1.3" height="1.3" fill="#dadada"/><rect x="31.5" y="53.6" width="0.6" height="0.6" fill="#dadada"/><rect x="58.2" y="41.3" width="1.4" height="1.4" fill="#aaaaaa"/><rect x="62.7" y="79.1" width="0.6" height="0.6" fill="#b5b5b5"/><rect x="17.9" y="39.9" width="1.0" height="1.0" fill="#e2e2e2"/><rect x="35.9" y="66.2" width="1.4" height="1.4" fill="#9a9a9a"/><rect x="58.1" y="20.6" width="1.4" height="1.4" fill="#b5b5b5"/><rect x="52.1" y="45.8" width="1.1" height="1.1" fill="#aaaaaa"/><rect x="54.5" y="25.8" width="1.5" height="1.5" fill="#7a7a7a"/><rect x="67.1" y="121.7" width="1.2" height="1.2" fill="#9a9a9a"/><rect x="59.6" y="25.7" width="0.7" height="0.7" fill="#aaaaaa"/><rect x="45.4" y="54.3" width="0.9" height="0.9" fill="#9a9a9a"/><rect x="88.3" y="47.0" width="1.1" height="1.1" fill="#9a9a9a"/><path d="M43.0,40.3 L41.4,39.3 L39.9,38.4 L38.4,37.7 L36.8,37.2 L35.2,36.9 L33.5,36.9 L31.8,37.1 L30.0,37.5 L28.3,37.9 L26.5,38.2 L24.8,38.4 L23.1,38.4 L21.4,38.1 L19.9,37.6 L18.3,36.8 L16.8,35.9 L15.4,34.8 L14.0,33.7 L12.5,32.7 L11.0,31.9 L9.5,31.2 L7.9,30.9 L6.2,30.7 L4.5,30.8 L2.7,31.0 L0.9,31.3 L-0.9,31.5 L-2.6,31.6 L-4.3,31.6 L-5.9,31.2" fill="none" stroke="#8e8e8e" stroke-width="0.65"/><path d="M43.4,39.5 L42.0,38.4 L40.5,37.6 L38.8,37.0 L37.1,36.6 L35.2,36.2 L33.4,35.7 L31.5,35.2 L29.8,34.4 L28.3,33.3 L27.0,32.0 L26.0,30.4 L25.2,28.7 L24.6,26.8 L24.2,24.9 L23.7,23.0 L23.2,21.3 L22.6,19.7 L21.7,18.2 L20.7,16.8 L19.4,15.5 L18.0,14.2 L16.7,12.8 L15.4,11.4 L14.4,9.8 L13.7,8.1 L13.4,6.2 L13.4,4.4 L13.7,2.5 L14.2,0.6 L14.8,-1.3" fill="none" stroke="#8e8e8e" stroke-width="0.65"/><path d="M47.0,36.7 L45.9,36.0 L44.7,35.5 L43.4,34.9 L42.2,34.4 L40.9,33.9 L39.7,33.3 L38.5,32.7 L37.4,31.9 L36.4,31.1 L35.6,30.1 L34.8,29.0 L34.2,27.9 L33.8,26.6 L33.4,25.3 L33.0,23.9 L32.7,22.6 L32.4,21.3 L32.1,20.0 L31.7,18.8 L31.2,17.6 L30.5,16.5 L29.8,15.5 L28.9,14.6 L28.0,13.7 L26.9,12.9 L25.8,12.1 L24.7,11.2 L23.7,10.4 L22.7,9.5 L21.7,8.5" fill="none" stroke="#8e8e8e" stroke-width="0.65"/><path d="M43.7,38.5 L42.2,37.5 L40.8,36.4 L39.5,35.2 L38.4,33.9 L37.5,32.4 L36.9,30.8 L36.5,29.1 L36.3,27.3 L36.2,25.5 L36.1,23.7 L35.9,21.9 L35.5,20.2 L34.9,18.7 L34.1,17.2 L33.1,15.9 L31.9,14.6 L30.6,13.4 L29.2,12.1 L28.0,10.8 L26.9,9.5 L26.0,8.0 L25.4,6.4 L25.0,4.8 L24.9,3.0 L24.9,1.2 L25.1,-0.6 L25.2,-2.4 L25.2,-4.2 L25.1,-5.9 L24.7,-7.5" fill="none" stroke="#8e8e8e" stroke-width="0.65"/><path d="M42.1,41.4 L41.5,40.0 L41.2,38.5 L41.1,37.0 L41.3,35.4 L41.7,33.9 L42.2,32.4 L42.9,30.9 L43.6,29.5 L44.3,28.1 L44.9,26.7 L45.4,25.3 L45.7,24.0 L45.9,22.6 L45.9,21.1 L45.8,19.6 L45.7,18.0 L45.5,16.5 L45.5,14.9 L45.6,13.3 L45.9,11.7 L46.4,10.3 L47.1,8.9 L48.1,7.7 L49.3,6.7 L50.6,5.7 L52.0,4.9 L53.4,4.1 L54.7,3.4 L56.1,2.6 L57.3,1.8" fill="none" stroke="#8e8e8e" stroke-width="0.65"/><path d="M43.1,41.4 L43.4,40.1 L43.8,38.8 L44.4,37.5 L45.1,36.3 L45.8,35.2 L46.6,34.0 L47.3,32.9 L47.9,31.8 L48.5,30.7 L48.9,29.5 L49.2,28.4 L49.4,27.2 L49.5,25.9 L49.6,24.6 L49.6,23.3 L49.6,21.9 L49.6,20.5 L49.8,19.2 L50.0,17.8 L50.5,16.6 L51.0,15.4 L51.7,14.3 L52.6,13.3 L53.6,12.4 L54.8,11.7 L56.0,11.0 L57.2,10.4 L58.5,9.8 L59.7,9.3 L60.9,8.7" fill="none" stroke="#8e8e8e" stroke-width="0.65"/><path d="M44.5,38.5 L45.5,37.1 L46.5,35.7 L47.3,34.2 L48.0,32.7 L48.4,31.1 L48.6,29.5 L48.6,27.9 L48.3,26.2 L47.9,24.5 L47.4,22.9 L46.9,21.2 L46.5,19.6 L46.3,18.0 L46.3,16.4 L46.6,14.8 L47.0,13.3 L47.7,11.7 L48.4,10.2 L49.3,8.6 L50.0,7.1 L50.6,5.5 L51.1,3.9 L51.2,2.3 L51.2,0.7 L50.8,-0.9 L50.3,-2.5 L49.7,-4.1 L49.0,-5.7 L48.3,-7.3 L47.8,-8.9" fill="none" stroke="#8e8e8e" stroke-width="0.65"/><path d="M43.7,40.1 L44.6,38.7 L45.3,37.3 L45.8,35.9 L46.0,34.3 L46.0,32.7 L45.9,31.1 L45.6,29.5 L45.3,27.8 L45.1,26.2 L44.9,24.7 L44.9,23.1 L45.2,21.6 L45.6,20.2 L46.2,18.8 L46.9,17.4 L47.7,16.0 L48.6,14.6 L49.4,13.1 L50.1,11.6 L50.6,10.1 L50.8,8.6 L50.9,7.1 L50.6,5.5 L50.2,4.0 L49.7,2.4 L49.0,0.9 L48.4,-0.6 L47.8,-2.1 L47.3,-3.6 L47.1,-5.1" fill="none" stroke="#8e8e8e" stroke-width="0.65"/><path d="M47.3,39.4 L48.0,38.2 L48.5,37.0 L49.0,35.7 L49.4,34.3 L49.8,33.0 L50.3,31.6 L50.8,30.3 L51.5,29.0 L52.2,27.9 L53.1,26.8 L54.2,26.0 L55.4,25.2 L56.7,24.6 L58.0,24.1 L59.4,23.8 L60.8,23.4 L62.2,23.1 L63.6,22.7 L64.9,22.3 L66.1,21.8 L67.2,21.2 L68.3,20.4 L69.2,19.5 L70.2,18.5 L71.1,17.5 L72.0,16.3 L73.0,15.3 L74.0,14.2 L75.1,13.3 L76.2,12.5" fill="none" stroke="#8e8e8e" stroke-width="0.65"/><path d="M44.1,40.7 L45.1,39.1 L46.0,37.5 L46.9,36.0 L47.9,34.6 L48.9,33.3 L50.1,32.2 L51.5,31.3 L53.0,30.4 L54.6,29.6 L56.2,28.8 L57.8,27.8 L59.2,26.7 L60.4,25.4 L61.4,23.9 L62.0,22.2 L62.4,20.5 L62.5,18.6 L62.5,16.8 L62.5,14.9 L62.4,13.2 L62.5,11.5 L62.8,9.9 L63.3,8.3 L64.0,6.8 L64.9,5.3 L65.8,3.7 L66.7,2.1 L67.5,0.4 L68.0,-1.3 L68.3,-3.0" fill="none" stroke="#8e8e8e" stroke-width="0.65"/><path d="M45.2,39.2 L46.7,38.1 L48.2,37.1 L49.8,36.4 L51.5,36.0 L53.3,35.7 L55.2,35.7 L57.1,35.6 L59.0,35.5 L60.9,35.2 L62.6,34.7 L64.2,33.9 L65.6,32.8 L66.9,31.5 L68.2,30.1 L69.3,28.5 L70.5,27.0 L71.8,25.7 L73.1,24.5 L74.6,23.6 L76.2,22.9 L78.0,22.5 L79.9,22.1 L81.8,21.8 L83.7,21.5 L85.4,21.0 L87.1,20.2 L88.6,19.2 L89.9,18.0 L91.0,16.5 L92.0,14.9" fill="none" stroke="#8e8e8e" stroke-width="0.65"/><path d="M43.6,39.6 L45.4,39.6 L47.2,39.8 L49.0,40.3 L50.9,41.0 L52.7,41.7 L54.4,42.2 L56.2,42.7 L57.9,42.8 L59.6,42.7 L61.4,42.3 L63.1,41.8 L64.9,41.1 L66.7,40.5 L68.6,40.1 L70.4,39.8 L72.2,39.9 L73.9,40.3 L75.6,41.0 L77.3,42.0 L78.9,43.1 L80.4,44.2 L82.0,45.2 L83.5,46.1 L85.1,46.7 L86.8,47.1 L88.6,47.2 L90.5,47.2 L92.3,47.0 L94.3,46.9 L96.2,47.0" fill="none" stroke="#8e8e8e" stroke-width="0.65"/><path d="M42.7,40.7 L43.8,41.5 L44.9,42.3 L46.0,43.1 L47.1,43.8 L48.3,44.5 L49.5,45.0 L50.7,45.4 L51.9,45.7 L53.2,45.7 L54.5,45.6 L55.8,45.4 L57.1,45.1 L58.4,44.7 L59.7,44.3 L61.0,43.8 L62.2,43.5 L63.5,43.2 L64.7,43.0 L65.9,43.0 L67.2,43.1 L68.4,43.3 L69.6,43.7 L70.8,44.1 L72.1,44.6 L73.3,45.2 L74.6,45.7 L75.9,46.1 L77.1,46.4 L78.4,46.6 L79.7,46.7" fill="none" stroke="#8e8e8e" stroke-width="0.65"/><path d="M41.8,40.8 L40.3,40.9 L38.8,41.0 L37.3,41.4 L35.9,42.0 L34.7,42.7 L33.5,43.7 L32.4,44.8 L31.4,46.0 L30.4,47.2 L29.4,48.5 L28.4,49.6 L27.3,50.6 L26.2,51.5 L25.0,52.2 L23.6,52.7 L22.2,53.2 L20.7,53.5 L19.2,53.8 L17.6,54.2 L16.1,54.6 L14.7,55.1 L13.3,55.7 L12.1,56.6 L11.0,57.6 L10.1,58.8 L9.3,60.1 L8.6,61.5 L8.0,63.0 L7.4,64.4 L6.8,65.8" fill="none" stroke="#8e8e8e" stroke-width="0.65"/><path d="M44.2,37.4 L42.9,36.9 L41.5,36.5 L40.1,36.3 L38.6,36.2 L37.0,36.1 L35.4,35.9 L33.8,35.7 L32.3,35.4 L30.9,34.8 L29.6,34.1 L28.4,33.2 L27.3,32.1 L26.4,30.9 L25.6,29.5 L24.9,28.1 L24.2,26.6 L23.5,25.3 L22.8,23.9 L21.9,22.8 L21.0,21.7 L19.9,20.8 L18.7,19.9 L17.4,19.2 L16.1,18.4 L14.7,17.7 L13.3,16.9 L12.0,16.1 L10.8,15.1 L9.8,13.9 L9.0,12.7" fill="none" stroke="#8e8e8e" stroke-width="0.65"/><path d="M44.2,41.0 L43.1,39.5 L41.8,38.1 L40.5,36.7 L39.3,35.3 L38.3,33.8 L37.6,32.3 L37.0,30.7 L36.7,28.9 L36.5,27.1 L36.4,25.2 L36.1,23.3 L35.8,21.5 L35.2,19.7 L34.3,18.2 L33.1,16.8 L31.7,15.6 L30.1,14.6 L28.4,13.7 L26.7,12.8 L25.1,11.9 L23.6,11.0 L22.3,9.8 L21.2,8.5 L20.3,7.0 L19.4,5.4 L18.6,3.7 L17.7,2.0 L16.8,0.4 L15.6,-1.0 L14.3,-2.2" fill="none" stroke="#8e8e8e" stroke-width="0.65"/><path d="M43.4,38.2 L43.6,36.2 L44.0,34.4 L44.8,32.6 L45.9,31.1 L47.3,29.8 L49.0,28.7 L50.8,27.8 L52.6,26.9 L54.3,26.1 L55.9,25.2 L57.2,24.1 L58.5,22.9 L59.6,21.4 L60.6,19.9 L61.7,18.2 L62.8,16.6 L64.1,15.1 L65.6,13.9 L67.3,13.1 L69.1,12.6 L71.0,12.4 L73.0,12.5 L75.0,12.7 L77.0,13.0 L78.8,13.2 L80.6,13.2 L82.3,13.0 L84.0,12.5 L85.7,11.8 L87.5,11.0" fill="none" stroke="#8e8e8e" stroke-width="0.65"/><circle cx="51.8" cy="85.4" r="3.9" fill="#b8b8b8" opacity=".6"/><circle cx="94.9" cy="95.0" r="3.7" fill="#d6d6d6" opacity=".6"/><circle cx="82.3" cy="54.8" r="3.5" fill="#b8b8b8" opacity=".6"/><circle cx="61.7" cy="54.8" r="1.8" fill="#b8b8b8" opacity=".6"/><circle cx="9.4" cy="103.0" r="1.8" fill="#bdbdbd" opacity=".6"/><circle cx="54.7" cy="58.9" r="2.2" fill="#bdbdbd" opacity=".6"/><circle cx="28.4" cy="42.2" r="1.7" fill="#d6d6d6" opacity=".6"/><circle cx="77.5" cy="51.6" r="2.4" fill="#bdbdbd" opacity=".6"/><circle cx="21.9" cy="39.8" r="2.6" fill="#d6d6d6" opacity=".6"/><circle cx="29.2" cy="64.8" r="3.8" fill="#d6d6d6" opacity=".6"/><circle cx="83.5" cy="26.4" r="3.6" fill="#bdbdbd" opacity=".6"/><circle cx="85.2" cy="25.4" r="3.6" fill="#d6d6d6" opacity=".6"/><circle cx="85.4" cy="2.1" r="3.1" fill="#bdbdbd" opacity=".6"/><circle cx="94.6" cy="26.3" r="3.1" fill="#b8b8b8" opacity=".6"/><circle cx="90.2" cy="126.9" r="3.1" fill="#d6d6d6" opacity=".6"/><circle cx="68.9" cy="40.7" r="3.8" fill="#d6d6d6" opacity=".6"/><circle cx="67.7" cy="17.5" r="3.2" fill="#d6d6d6" opacity=".6"/><circle cx="39.4" cy="22.0" r="3.7" fill="#b8b8b8" opacity=".6"/><circle cx="67.5" cy="25.5" r="2.0" fill="#b8b8b8" opacity=".6"/><circle cx="47.6" cy="38.4" r="2.2" fill="#bdbdbd" opacity=".6"/><circle cx="49.8" cy="15.0" r="2.8" fill="#d6d6d6" opacity=".6"/><circle cx="85.1" cy="23.5" r="2.1" fill="#b8b8b8" opacity=".6"/><circle cx="60.8" cy="11.7" r="4.0" fill="#d6d6d6" opacity=".6"/><circle cx="87.1" cy="9.6" r="3.8" fill="#b8b8b8" opacity=".6"/><circle cx="57.0" cy="37.0" r="2.1" fill="#bdbdbd" opacity=".6"/><circle cx="8.3" cy="37.1" r="3.4" fill="#b8b8b8" opacity=".6"/><circle cx="17.0" cy="95.4" r="1.6" fill="#b8b8b8" opacity=".6"/><circle cx="93.8" cy="4.4" r="2.7" fill="#bdbdbd" opacity=".6"/><circle cx="36.5" cy="120.8" r="2.7" fill="#b8b8b8" opacity=".6"/><circle cx="6.1" cy="101.0" r="3.8" fill="#d6d6d6" opacity=".6"/><circle cx="62.5" cy="101.8" r="2.8" fill="#bdbdbd" opacity=".6"/><circle cx="78.6" cy="82.5" r="4.0" fill="#bdbdbd" opacity=".6"/><circle cx="90.4" cy="22.6" r="3.4" fill="#b8b8b8" opacity=".6"/><circle cx="10.7" cy="56.6" r="3.2" fill="#bdbdbd" opacity=".6"/><circle cx="73.4" cy="102.3" r="3.5" fill="#b8b8b8" opacity=".6"/><circle cx="24.7" cy="70.7" r="3.6" fill="#bdbdbd" opacity=".6"/><circle cx="47.4" cy="4.6" r="3.0" fill="#bdbdbd" opacity=".6"/><circle cx="5.0" cy="58.3" r="3.7" fill="#d6d6d6" opacity=".6"/><circle cx="14.4" cy="2.3" r="2.7" fill="#d6d6d6" opacity=".6"/><circle cx="47.9" cy="94.0" r="3.6" fill="#b8b8b8" opacity=".6"/><circle cx="6.9" cy="117.9" r="2.9" fill="#bdbdbd" opacity=".6"/><circle cx="55.1" cy="93.9" r="3.1" fill="#b8b8b8" opacity=".6"/><circle cx="29.5" cy="5.5" r="2.3" fill="#bdbdbd" opacity=".6"/><circle cx="70.2" cy="101.5" r="3.4" fill="#d6d6d6" opacity=".6"/><circle cx="8.4" cy="106.7" r="1.9" fill="#d6d6d6" opacity=".6"/><circle cx="23.6" cy="64.6" r="3.1" fill="#bdbdbd" opacity=".6"/><circle cx="74.7" cy="7.9" r="2.5" fill="#d6d6d6" opacity=".6"/><circle cx="66.4" cy="91.5" r="3.9" fill="#b8b8b8" opacity=".6"/><circle cx="46.5" cy="99.0" r="4.0" fill="#b8b8b8" opacity=".6"/><circle cx="70.7" cy="67.8" r="4.0" fill="#b8b8b8" opacity=".6"/><circle cx="22.9" cy="115.7" r="1.9" fill="#d6d6d6" opacity=".6"/><circle cx="52.8" cy="61.3" r="3.8" fill="#b8b8b8" opacity=".6"/><circle cx="64.6" cy="93.2" r="3.9" fill="#bdbdbd" opacity=".6"/><circle cx="21.8" cy="32.9" r="2.9" fill="#b8b8b8" opacity=".6"/><circle cx="39.7" cy="11.2" r="2.1" fill="#d6d6d6" opacity=".6"/><circle cx="32.0" cy="127.6" r="3.0" fill="#b8b8b8" opacity=".6"/><circle cx="15.2" cy="76.1" r="4.0" fill="#bdbdbd" opacity=".6"/><circle cx="32.6" cy="90.3" r="3.7" fill="#bdbdbd" opacity=".6"/><circle cx="87.8" cy="23.0" r="3.6" fill="#b8b8b8" opacity=".6"/><circle cx="36.2" cy="101.6" r="2.0" fill="#d6d6d6" opacity=".6"/><path d="M45.0,36.6 L44.3,36.2 L44.2,35.9 L44.5,35.9 L44.3,36.0 L43.8,36.0 L43.3,36.1 L43.3,36.5 L43.0,36.8 L42.5,37.1 L42.7,37.6 L42.1,37.9 L41.7,38.4 L41.5,39.1 L41.5,40.0 L40.9,40.7 L39.8,41.4 L39.8,42.3 L39.6,43.2 L39.0,44.0 L38.9,44.9 L38.6,45.7 L38.3,46.4 L38.6,47.3 L38.4,48.0 L38.2,48.6 L37.2,48.8 L36.7,49.4 L36.8,50.6 L36.2,51.3 L35.0,51.8 L35.0,53.2 L33.5,53.5 L33.0,54.7 L32.7,56.0 L31.6,57.0 L31.6,58.4 L31.3,59.4 L30.2,60.1 L30.0,61.2 L30.0,62.3 L29.3,63.3 L29.1,64.4 L29.1,65.7 L28.5,66.8 L28.7,68.2 L28.5,69.4 L28.2,70.8 L28.3,72.3 L28.3,73.8 L28.9,75.2 L29.4,76.5 L30.2,77.5 L30.6,78.7 L31.3,79.6 L31.3,80.9 L31.9,81.7 L32.8,82.4 L33.3,83.1 L34.1,83.7 L34.2,84.8 L34.9,85.8 L35.9,86.9 L36.3,88.2 L36.8,89.5 L38.0,90.4 L37.9,91.9 L38.6,92.9 L39.4,93.7 L40.3,94.3 L39.7,95.4 L39.9,95.9 L40.1,96.1 L40.8,96.3 L39.8,96.6 L40.1,97.0 L40.2,97.5 L40.3,98.1 L39.3,98.3 L39.4,99.2 L38.6,99.6 L38.7,100.7 L37.7,101.1 L37.9,102.4 L37.1,102.9 L36.8,103.3 L36.2,103.2 L36.5,104.1 L35.7,104.2 L35.5,105.1 L34.3,105.1 L34.2,106.4 L32.9,106.8 L32.4,108.1 L31.2,108.9 L30.6,110.4 L29.7,111.8 L29.0,113.2 L28.8,114.8 L28.9,116.3 L29.0,117.8 L28.2,119.2 L28.7,120.6 L27.9,121.9 L27.9,123.2 L28.8,124.3 L27.8,125.2 L27.8,126.0 L28.5,126.5 L39.9,127.5 L40.7,126.8 L40.8,125.8 L39.9,124.8 L40.8,123.7 L40.9,122.6 L40.2,121.4 L41.0,120.2 L40.4,119.1 L40.8,118.1 L41.3,117.3 L41.6,116.6 L41.5,116.2 L41.3,115.9 L41.6,115.9 L41.5,115.4 L42.2,115.3 L42.1,114.5 L43.2,114.6 L43.2,113.4 L44.3,113.2 L44.8,112.0 L46.2,111.6 L46.6,110.2 L47.3,109.1 L47.4,108.0 L48.6,107.7 L48.5,106.5 L49.6,105.9 L49.8,104.6 L50.8,103.7 L50.6,102.2 L51.3,101.0 L51.9,99.7 L52.6,98.1 L51.7,96.4 L52.3,94.7 L52.1,92.9 L51.6,91.2 L50.2,90.0 L50.1,88.4 L49.6,86.9 L49.0,85.5 L47.5,84.7 L47.3,83.2 L46.3,82.2 L45.4,81.3 L45.1,80.2 L44.8,79.2 L43.9,78.3 L43.6,77.1 L43.0,76.0 L42.7,74.9 L42.3,74.0 L41.3,73.6 L41.0,72.8 L40.5,72.3 L40.5,71.7 L40.3,71.3 L40.4,71.0 L40.1,70.7 L40.0,70.4 L39.8,70.0 L39.7,69.5 L40.3,69.1 L40.0,68.4 L40.5,67.9 L40.9,67.2 L40.8,66.4 L41.5,65.8 L42.1,65.1 L41.8,64.0 L42.2,63.2 L43.0,62.9 L42.9,62.0 L43.8,61.6 L44.4,61.0 L44.1,59.6 L45.4,59.2 L45.5,57.9 L46.0,56.9 L47.4,56.3 L48.0,55.2 L47.9,53.6 L48.6,52.4 L49.2,51.3 L50.1,50.2 L50.3,49.0 L50.6,47.8 L51.0,46.7 L50.8,45.6 L51.0,44.5 L51.4,43.6 L50.6,42.6 L50.3,41.8 L50.7,41.3 L50.7,40.8 L50.6,40.4 L50.2,39.9 L50.6,39.8 L50.3,39.6 L50.1,39.5 L50.2,39.6 L49.8,39.6 L49.4,39.5 L49.3,39.4 L49.6,39.4 L49.7,38.9 L49.0,38.4Z" fill="#444" stroke="#666" stroke-width="2.2" opacity=".5"/><path d="M45.0,36.6 L44.3,36.2 L44.2,35.9 L44.5,35.9 L44.3,36.0 L43.8,36.0 L43.3,36.1 L43.3,36.5 L43.0,36.8 L42.5,37.1 L42.7,37.6 L42.1,37.9 L41.7,38.4 L41.5,39.1 L41.5,40.0 L40.9,40.7 L39.8,41.4 L39.8,42.3 L39.6,43.2 L39.0,44.0 L38.9,44.9 L38.6,45.7 L38.3,46.4 L38.6,47.3 L38.4,48.0 L38.2,48.6 L37.2,48.8 L36.7,49.4 L36.8,50.6 L36.2,51.3 L35.0,51.8 L35.0,53.2 L33.5,53.5 L33.0,54.7 L32.7,56.0 L31.6,57.0 L31.6,58.4 L31.3,59.4 L30.2,60.1 L30.0,61.2 L30.0,62.3 L29.3,63.3 L29.1,64.4 L29.1,65.7 L28.5,66.8 L28.7,68.2 L28.5,69.4 L28.2,70.8 L28.3,72.3 L28.3,73.8 L28.9,75.2 L29.4,76.5 L30.2,77.5 L30.6,78.7 L31.3,79.6 L31.3,80.9 L31.9,81.7 L32.8,82.4 L33.3,83.1 L34.1,83.7 L34.2,84.8 L34.9,85.8 L35.9,86.9 L36.3,88.2 L36.8,89.5 L38.0,90.4 L37.9,91.9 L38.6,92.9 L39.4,93.7 L40.3,94.3 L39.7,95.4 L39.9,95.9 L40.1,96.1 L40.8,96.3 L39.8,96.6 L40.1,97.0 L40.2,97.5 L40.3,98.1 L39.3,98.3 L39.4,99.2 L38.6,99.6 L38.7,100.7 L37.7,101.1 L37.9,102.4 L37.1,102.9 L36.8,103.3 L36.2,103.2 L36.5,104.1 L35.7,104.2 L35.5,105.1 L34.3,105.1 L34.2,106.4 L32.9,106.8 L32.4,108.1 L31.2,108.9 L30.6,110.4 L29.7,111.8 L29.0,113.2 L28.8,114.8 L28.9,116.3 L29.0,117.8 L28.2,119.2 L28.7,120.6 L27.9,121.9 L27.9,123.2 L28.8,124.3 L27.8,125.2 L27.8,126.0 L28.5,126.5 L39.9,127.5 L40.7,126.8 L40.8,125.8 L39.9,124.8 L40.8,123.7 L40.9,122.6 L40.2,121.4 L41.0,120.2 L40.4,119.1 L40.8,118.1 L41.3,117.3 L41.6,116.6 L41.5,116.2 L41.3,115.9 L41.6,115.9 L41.5,115.4 L42.2,115.3 L42.1,114.5 L43.2,114.6 L43.2,113.4 L44.3,113.2 L44.8,112.0 L46.2,111.6 L46.6,110.2 L47.3,109.1 L47.4,108.0 L48.6,107.7 L48.5,106.5 L49.6,105.9 L49.8,104.6 L50.8,103.7 L50.6,102.2 L51.3,101.0 L51.9,99.7 L52.6,98.1 L51.7,96.4 L52.3,94.7 L52.1,92.9 L51.6,91.2 L50.2,90.0 L50.1,88.4 L49.6,86.9 L49.0,85.5 L47.5,84.7 L47.3,83.2 L46.3,82.2 L45.4,81.3 L45.1,80.2 L44.8,79.2 L43.9,78.3 L43.6,77.1 L43.0,76.0 L42.7,74.9 L42.3,74.0 L41.3,73.6 L41.0,72.8 L40.5,72.3 L40.5,71.7 L40.3,71.3 L40.4,71.0 L40.1,70.7 L40.0,70.4 L39.8,70.0 L39.7,69.5 L40.3,69.1 L40.0,68.4 L40.5,67.9 L40.9,67.2 L40.8,66.4 L41.5,65.8 L42.1,65.1 L41.8,64.0 L42.2,63.2 L43.0,62.9 L42.9,62.0 L43.8,61.6 L44.4,61.0 L44.1,59.6 L45.4,59.2 L45.5,57.9 L46.0,56.9 L47.4,56.3 L48.0,55.2 L47.9,53.6 L48.6,52.4 L49.2,51.3 L50.1,50.2 L50.3,49.0 L50.6,47.8 L51.0,46.7 L50.8,45.6 L51.0,44.5 L51.4,43.6 L50.6,42.6 L50.3,41.8 L50.7,41.3 L50.7,40.8 L50.6,40.4 L50.2,39.9 L50.6,39.8 L50.3,39.6 L50.1,39.5 L50.2,39.6 L49.8,39.6 L49.4,39.5 L49.3,39.4 L49.6,39.4 L49.7,38.9 L49.0,38.4Z" fill="#0d0d0d"/><rect x="39.0" y="64.2" width="1.1" height="1.1" fill="#d8d8d8"/><rect x="31.9" y="111.9" width="0.8" height="0.8" fill="#d8d8d8"/><rect x="34.1" y="65.9" width="1.2" height="1.2" fill="#d8d8d8"/><rect x="43.7" y="91.8" width="1.2" height="1.2" fill="#d8d8d8"/><rect x="48.6" y="37.0" width="0.7" height="0.7" fill="#d8d8d8"/><rect x="47.0" y="38.9" width="0.6" height="0.6" fill="#d8d8d8"/><rect x="46.2" y="38.6" width="1.3" height="1.3" fill="#d8d8d8"/><rect x="38.4" y="66.5" width="0.8" height="0.8" fill="#d8d8d8"/><rect x="36.4" y="74.4" width="1.0" height="1.0" fill="#d8d8d8"/><rect x="38.5" y="53.6" width="1.0" height="1.0" fill="#d8d8d8"/><rect x="39.4" y="116.4" width="1.0" height="1.0" fill="#d8d8d8"/><rect x="40.4" y="109.4" width="1.2" height="1.2" fill="#d8d8d8"/><rect x="37.6" y="114.8" width="0.8" height="0.8" fill="#d8d8d8"/><rect x="41.9" y="40.7" width="0.7" height="0.7" fill="#d8d8d8"/><rect x="32.3" y="65.6" width="0.7" height="0.7" fill="#d8d8d8"/><rect x="38.6" y="62.0" width="0.8" height="0.8" fill="#d8d8d8"/><rect x="33.7" y="69.3" width="0.9" height="0.9" fill="#d8d8d8"/><rect x="43.7" y="93.8" width="1.2" height="1.2" fill="#d8d8d8"/><rect x="47.0" y="104.1" width="1.2" height="1.2" fill="#d8d8d8"/><rect x="34.1" y="115.2" width="1.0" height="1.0" fill="#d8d8d8"/><rect x="41.6" y="97.1" width="0.9" height="0.9" fill="#d8d8d8"/><rect x="34.6" y="74.6" width="1.1" height="1.1" fill="#d8d8d8"/><rect x="43.0" y="98.5" width="0.9" height="0.9" fill="#d8d8d8"/><rect x="42.8" y="98.4" width="0.7" height="0.7" fill="#d8d8d8"/><rect x="36.7" y="84.9" width="1.0" height="1.0" fill="#d8d8d8"/><rect x="48.0" y="40.1" width="0.7" height="0.7" fill="#d8d8d8"/><rect x="45.1" y="47.3" width="1.1" height="1.1" fill="#d8d8d8"/><rect x="34.3" y="124.7" width="1.2" height="1.2" fill="#d8d8d8"/><rect x="33.0" y="117.6" width="0.8" height="0.8" fill="#d8d8d8"/><rect x="45.1" y="96.0" width="0.7" height="0.7" fill="#d8d8d8"/><rect x="49.6" y="45.5" width="0.7" height="0.7" fill="#d8d8d8"/><rect x="36.7" y="64.2" width="0.9" height="0.9" fill="#d8d8d8"/><rect x="38.4" y="117.3" width="0.7" height="0.7" fill="#d8d8d8"/><rect x="46.0" y="40.3" width="1.1" height="1.1" fill="#d8d8d8"/><rect x="45.4" y="50.0" width="0.7" height="0.7" fill="#d8d8d8"/><rect x="42.3" y="83.4" width="0.8" height="0.8" fill="#d8d8d8"/><rect x="36.4" y="113.7" width="1.0" height="1.0" fill="#d8d8d8"/><rect x="38.9" y="114.6" width="0.7" height="0.7" fill="#d8d8d8"/><rect x="33.8" y="113.9" width="0.8" height="0.8" fill="#d8d8d8"/><rect x="33.7" y="65.6" width="0.7" height="0.7" fill="#d8d8d8"/></svg>
<!-- bottom panel -->
<div class="a" style="left:8px;top:306px;width:506px;height:93.5px;border:1px solid #dadada;border-right:none"></div>
<div class="a" style="left:13px;top:312px;width:123px;height:80px;background:#fff;border:1px solid #abadb3"></div>
<div class="t" style="left:18px;top:313.7px;line-height:14.9px">
<div>a-d: Cocci,</div><div>e-g: Bacilli</div><div>i: Vibrios with flagella</div><div>j: Bacilli with flagella</div><div>k: Spirilla</div>
</div>
<div class="a" style="left:145px;top:312px;width:149px;height:80px;background:#fff"></div>
<div class="a" style="left:302px;top:312px;width:60px;height:80px;background:#fff"></div>
<svg class="a" style="left:0;top:0" width="350" height="400" viewBox="0 0 350 400"><g fill="#f4f4f4" stroke="#222" stroke-width="0.9"><circle cx="153.6" cy="328" r="2.9"/><circle cx="159" cy="325" r="2.9"/><circle cx="165" cy="331.6" r="2.9"/><circle cx="158" cy="331.6" r="2.9"/><circle cx="152" cy="334.4" r="2.9"/><circle cx="161" cy="336" r="2.9"/><circle cx="165.6" cy="339" r="2.9"/><circle cx="157" cy="339" r="2.9"/><circle cx="154" cy="344.4" r="2.9"/><circle cx="160" cy="343.6" r="2.9"/><circle cx="187.6" cy="325.6" r="2.9"/><circle cx="191.6" cy="329" r="2.9"/><circle cx="193.6" cy="334" r="2.9"/><circle cx="195" cy="339.6" r="2.9"/><circle cx="198.4" cy="344" r="2.9"/><circle cx="203.6" cy="345.4" r="2.9"/><circle cx="209" cy="346" r="2.9"/><circle cx="215" cy="346.4" r="2.9"/><circle cx="220.4" cy="346.4" r="2.9"/><circle cx="238.4" cy="333" r="2.9"/><circle cx="244.4" cy="333" r="2.9"/><circle cx="238.4" cy="339" r="2.9"/><circle cx="244.4" cy="339" r="2.9"/><circle cx="280" cy="333.6" r="2.9"/><circle cx="286.4" cy="332.8" r="2.9"/><circle cx="277.6" cy="336.4" r="2.9"/><circle cx="283" cy="336.4" r="2.9"/><circle cx="288" cy="339" r="2.9"/><circle cx="276.6" cy="342" r="2.9"/><circle cx="282.4" cy="342" r="2.9"/><ellipse cx="153" cy="370.4" rx="5.5" ry="2" transform="rotate(-40 153 370.4)"/><ellipse cx="164.4" cy="370.4" rx="5.5" ry="2" transform="rotate(30 164.4 370.4)"/><ellipse cx="155.6" cy="381.6" rx="2" ry="5.3" transform="rotate(0 155.6 381.6)"/><ellipse cx="165" cy="382.4" rx="2" ry="5.3" transform="rotate(12 165 382.4)"/><ellipse cx="200" cy="372.4" rx="5" ry="1.8" transform="rotate(-15 200 372.4)"/><ellipse cx="208" cy="370.6" rx="5" ry="1.8" transform="rotate(0 208 370.6)"/><ellipse cx="216.4" cy="371.4" rx="5" ry="1.8" transform="rotate(10 216.4 371.4)"/><ellipse cx="193.6" cy="382.4" rx="5" ry="1.8" transform="rotate(-10 193.6 382.4)"/><ellipse cx="203" cy="381" rx="5" ry="1.8" transform="rotate(0 203 381)"/><ellipse cx="214" cy="381.6" rx="5" ry="1.8" transform="rotate(5 214 381.6)"/><ellipse cx="224" cy="382.4" rx="5" ry="1.8" transform="rotate(0 224 382.4)"/><ellipse cx="233" cy="381.6" rx="5" ry="1.8" transform="rotate(-10 233 381.6)"/><ellipse cx="264" cy="370" rx="4.8" ry="1.7" transform="rotate(0 264 370)"/><ellipse cx="264" cy="373" rx="4.8" ry="1.7" transform="rotate(0 264 373)"/><ellipse cx="264" cy="376" rx="4.8" ry="1.7" transform="rotate(0 264 376)"/><ellipse cx="264" cy="379" rx="4.8" ry="1.7" transform="rotate(0 264 379)"/><ellipse cx="310" cy="340.4" rx="5" ry="2" transform="rotate(-55 310 340.4)"/><ellipse cx="324.5" cy="349" rx="6" ry="2.2" transform="rotate(25 324.5 349)"/><ellipse cx="329.2" cy="380" rx="5.5" ry="2" transform="rotate(-25 329.2 380)"/><ellipse cx="340" cy="380" rx="5.5" ry="2" transform="rotate(-25 340 380)"/><ellipse cx="344" cy="337.7" rx="5" ry="2" transform="rotate(0 344 337.7)"/></g><g fill="none" stroke="#444" stroke-width="0.7"><path d="M313,336.8 Q315,331 318.4,331.4 T323.8,329.6 Q328,325 331,324.2"/><path d="M328.3,353 Q324,355 325.6,357.5 T322,361 Q318,362 316.6,363.8 T313,368.2"/></g><g font-family="Liberation Sans" font-size="4.5" fill="#666" text-anchor="middle"><text x="157.6" y="320.5">a</text><text x="198.4" y="321">b</text><text x="240.4" y="321">c</text><text x="282" y="321">d</text><text x="157.6" y="362.5">e</text><text x="198.4" y="362">f</text><text x="260" y="362.5">g</text><text x="318.4" y="319.5">i</text><text x="342.7" y="320.5">j</text></g></svg>
<!-- Close button -->
<div class="a" style="left:174px;top:406px;width:141px;height:17px;border:1px solid #6a6a6a;border-radius:2px;background:linear-gradient(#c8c8c8 0px,#f4f4f4 2px,#ececec 8px,#d8d8d8 14px,#cbcbcb 100%)"></div>
<div class="a" style="left:174px;top:410.5px;width:141px;text-align:center;font-size:8.6px;line-height:10px;color:#222"><span style="display:inline-block;transform:scaleX(.9);-webkit-text-stroke:.3px #222">Close</span></div>

<!-- METABOLISM WINDOW -->
<div class="a" style="left:345px;top:212px;width:453.5px;height:280px;background:#f0f0f0;border:1px solid #b4bac6"></div>
<div class="a" style="left:346px;top:213px;width:451.5px;height:23px;background:#fff"></div>
<div class="ttl" style="left:366px;top:219.6px;transform:scaleX(1.03)">Metabolism of bacteria</div>
<div class="a" style="left:711px;top:223px;width:8px;height:1px;background:#9a9a9a"></div>
<div class="a" style="left:744px;top:220.5px;width:7.5px;height:7px;border:1px solid #9a9a9a"></div>
<svg class="a" style="left:778.5px;top:220.5px" width="8" height="8"><path d="M.5 .5L7.5 7.5M7.5 .5L.5 7.5" stroke="#9a9a9a" stroke-width="1"/></svg>
<svg class="a" style="left:352px;top:217px" width="13" height="13" viewBox="0 0 13 13">
<path d="M3.5 2.5 L4.5 1" stroke="#333" stroke-width="1"/>
<rect x="3.5" y="2.5" width="7" height="5.5" fill="#cfe3c8" stroke="#444" stroke-width="1"/>
<path d="M5 4.5h4.5M5 6.3h4.5M7 3v5" stroke="#5a9a50" stroke-width="0.7"/>
<circle cx="2.3" cy="6.3" r="1.6" fill="#8a6a18"/>
<circle cx="4.3" cy="9.2" r="2" fill="#b8901c" stroke="#5a4008" stroke-width="0.5"/>
<circle cx="9.6" cy="10" r="2.2" fill="#c09018" stroke="#5a3008" stroke-width="0.6"/>
</svg>

<!-- diagram -->
<div class="a" style="left:353px;top:241px;width:220px;height:250px;background:#fff"></div>
<!--DIAGRAM--><svg class="a" style="left:353px;top:241px" width="220" height="248" viewBox="353 241 220 248">
<defs><clipPath id="eg"><path d="M433.0,291.3 C440.8,291.3 448.8,292.6 455.0,296.5 C461.2,300.4 465.6,307.4 470.0,315.0 C474.4,322.6 479.0,331.5 481.5,342.0 C484.0,352.5 484.6,367.5 485.0,378.0 C485.4,388.5 484.9,397.2 484.2,405.0 C483.5,412.8 482.6,418.2 481.0,425.0 C479.4,431.8 477.3,438.8 474.3,445.6 C471.3,452.4 467.6,459.9 463.0,466.0 C458.4,472.1 452.8,478.3 446.5,482.0 C440.2,485.7 432.4,488.2 425.5,488.0 C418.6,487.8 412.0,486.5 405.0,481.0 C398.0,475.5 388.8,465.2 383.5,455.0 C378.2,444.8 375.4,432.3 373.0,420.0 C370.6,407.7 369.0,394.3 369.2,381.0 C369.4,367.7 371.0,350.9 374.0,340.0 C377.0,329.1 381.3,322.9 387.0,315.7 C392.7,308.4 400.3,300.6 408.0,296.5 C415.7,292.4 425.2,291.3 433.0,291.3Z"/></clipPath></defs>
<path d="M433.0,291.3 C440.8,291.3 448.8,292.6 455.0,296.5 C461.2,300.4 465.6,307.4 470.0,315.0 C474.4,322.6 479.0,331.5 481.5,342.0 C484.0,352.5 484.6,367.5 485.0,378.0 C485.4,388.5 484.9,397.2 484.2,405.0 C483.5,412.8 482.6,418.2 481.0,425.0 C479.4,431.8 477.3,438.8 474.3,445.6 C471.3,452.4 467.6,459.9 463.0,466.0 C458.4,472.1 452.8,478.3 446.5,482.0 C440.2,485.7 432.4,488.2 425.5,488.0 C418.6,487.8 412.0,486.5 405.0,481.0 C398.0,475.5 388.8,465.2 383.5,455.0 C378.2,444.8 375.4,432.3 373.0,420.0 C370.6,407.7 369.0,394.3 369.2,381.0 C369.4,367.7 371.0,350.9 374.0,340.0 C377.0,329.1 381.3,322.9 387.0,315.7 C392.7,308.4 400.3,300.6 408.0,296.5 C415.7,292.4 425.2,291.3 433.0,291.3Z" fill="#c8c8c8"/>
<g clip-path="url(#eg)" fill="#404040"><rect x="405.8" y="318.3" width="1.0" height="1.0"/><rect x="371.9" y="453.1" width="0.6" height="0.6"/><rect x="411.0" y="299.7" width="1.0" height="1.0"/><rect x="392.4" y="305.3" width="0.8" height="0.8"/><rect x="374.6" y="306.2" width="0.8" height="0.8"/><rect x="373.3" y="401.7" width="0.6" height="0.6"/><rect x="443.6" y="405.2" width="0.6" height="0.6"/><rect x="437.0" y="367.7" width="0.6" height="0.6"/><rect x="371.7" y="460.6" width="0.8" height="0.8"/><rect x="417.6" y="396.7" width="1.0" height="1.0"/><rect x="403.9" y="452.0" width="0.6" height="0.6"/><rect x="378.7" y="402.8" width="0.6" height="0.6"/><rect x="411.8" y="398.1" width="0.6" height="0.6"/><rect x="435.4" y="412.4" width="0.8" height="0.8"/><rect x="449.7" y="373.9" width="0.8" height="0.8"/><rect x="423.3" y="473.6" width="0.8" height="0.8"/><rect x="402.9" y="447.7" width="1.0" height="1.0"/><rect x="461.9" y="304.5" width="0.8" height="0.8"/><rect x="430.6" y="463.9" width="1.0" height="1.0"/><rect x="421.2" y="410.4" width="0.6" height="0.6"/><rect x="380.5" y="372.0" width="0.8" height="0.8"/><rect x="384.7" y="386.3" width="0.6" height="0.6"/><rect x="484.3" y="303.6" width="1.0" height="1.0"/><rect x="436.5" y="464.0" width="0.8" height="0.8"/><rect x="407.8" y="358.4" width="0.8" height="0.8"/><rect x="437.3" y="379.7" width="0.6" height="0.6"/><rect x="482.2" y="383.3" width="1.0" height="1.0"/><rect x="374.0" y="435.0" width="0.8" height="0.8"/><rect x="445.6" y="487.6" width="0.8" height="0.8"/><rect x="401.0" y="365.5" width="1.0" height="1.0"/><rect x="408.7" y="477.1" width="0.8" height="0.8"/><rect x="386.7" y="311.5" width="0.6" height="0.6"/><rect x="392.8" y="345.8" width="1.0" height="1.0"/><rect x="396.5" y="366.6" width="0.8" height="0.8"/><rect x="375.9" y="378.3" width="1.0" height="1.0"/><rect x="400.2" y="315.5" width="0.8" height="0.8"/><rect x="472.3" y="344.0" width="0.8" height="0.8"/><rect x="487.3" y="425.2" width="0.8" height="0.8"/><rect x="483.8" y="318.3" width="0.6" height="0.6"/><rect x="384.6" y="420.4" width="0.6" height="0.6"/><rect x="425.7" y="406.4" width="0.8" height="0.8"/><rect x="400.7" y="317.3" width="1.0" height="1.0"/><rect x="411.4" y="401.8" width="0.6" height="0.6"/><rect x="450.9" y="391.6" width="1.0" height="1.0"/><rect x="446.6" y="436.7" width="0.8" height="0.8"/><rect x="476.6" y="444.8" width="1.0" height="1.0"/><rect x="464.1" y="366.9" width="0.8" height="0.8"/><rect x="414.5" y="384.8" width="0.8" height="0.8"/><rect x="373.7" y="301.5" width="0.6" height="0.6"/><rect x="420.2" y="310.1" width="1.0" height="1.0"/><rect x="372.5" y="288.0" width="0.6" height="0.6"/><rect x="432.0" y="478.7" width="1.0" height="1.0"/><rect x="369.1" y="463.7" width="1.0" height="1.0"/><rect x="412.3" y="415.5" width="0.8" height="0.8"/><rect x="440.1" y="383.3" width="0.6" height="0.6"/><rect x="470.4" y="487.6" width="0.8" height="0.8"/><rect x="425.1" y="350.7" width="0.6" height="0.6"/><rect x="378.6" y="356.9" width="0.8" height="0.8"/><rect x="424.9" y="427.1" width="1.0" height="1.0"/><rect x="368.8" y="479.1" width="1.0" height="1.0"/><rect x="410.5" y="426.7" width="0.6" height="0.6"/><rect x="459.3" y="347.9" width="1.0" height="1.0"/><rect x="472.2" y="427.9" width="0.8" height="0.8"/><rect x="429.8" y="470.6" width="0.8" height="0.8"/><rect x="460.9" y="395.1" width="1.0" height="1.0"/><rect x="406.5" y="332.8" width="0.6" height="0.6"/><rect x="465.1" y="452.5" width="1.0" height="1.0"/><rect x="464.8" y="328.2" width="0.8" height="0.8"/><rect x="409.7" y="293.8" width="0.6" height="0.6"/><rect x="463.2" y="382.9" width="0.6" height="0.6"/><rect x="451.2" y="480.3" width="0.8" height="0.8"/><rect x="465.5" y="433.3" width="0.8" height="0.8"/><rect x="483.5" y="361.3" width="0.6" height="0.6"/><rect x="378.6" y="382.5" width="0.8" height="0.8"/><rect x="391.1" y="413.4" width="1.0" height="1.0"/><rect x="469.4" y="384.4" width="1.0" height="1.0"/><rect x="408.3" y="417.3" width="1.0" height="1.0"/><rect x="380.7" y="366.1" width="1.0" height="1.0"/><rect x="458.3" y="384.1" width="0.6" height="0.6"/><rect x="419.4" y="415.8" width="0.6" height="0.6"/><rect x="464.5" y="483.3" width="0.8" height="0.8"/><rect x="423.0" y="437.4" width="0.6" height="0.6"/><rect x="455.2" y="322.2" width="0.6" height="0.6"/><rect x="369.4" y="406.8" width="0.8" height="0.8"/><rect x="465.2" y="317.4" width="1.0" height="1.0"/><rect x="486.6" y="420.1" width="0.8" height="0.8"/><rect x="385.2" y="398.2" width="0.6" height="0.6"/><rect x="367.8" y="483.1" width="1.0" height="1.0"/><rect x="378.6" y="438.6" width="0.6" height="0.6"/><rect x="419.4" y="463.2" width="0.6" height="0.6"/><rect x="369.4" y="330.8" width="1.0" height="1.0"/><rect x="395.6" y="405.9" width="0.8" height="0.8"/><rect x="433.0" y="455.7" width="0.6" height="0.6"/><rect x="477.9" y="359.1" width="0.8" height="0.8"/><rect x="447.5" y="451.8" width="1.0" height="1.0"/><rect x="417.7" y="472.5" width="1.0" height="1.0"/><rect x="382.1" y="318.5" width="1.0" height="1.0"/><rect x="368.3" y="376.5" width="0.6" height="0.6"/><rect x="440.9" y="444.0" width="0.6" height="0.6"/><rect x="387.2" y="383.2" width="1.0" height="1.0"/><rect x="380.8" y="300.4" width="1.0" height="1.0"/><rect x="429.8" y="399.6" width="0.6" height="0.6"/><rect x="474.6" y="299.4" width="0.6" height="0.6"/><rect x="400.1" y="443.2" width="1.0" height="1.0"/><rect x="421.6" y="293.6" width="0.6" height="0.6"/><rect x="420.5" y="411.1" width="1.0" height="1.0"/><rect x="440.6" y="328.1" width="0.8" height="0.8"/><rect x="421.6" y="395.2" width="0.8" height="0.8"/><rect x="428.5" y="337.8" width="1.0" height="1.0"/><rect x="473.8" y="477.4" width="0.8" height="0.8"/><rect x="479.5" y="467.4" width="0.6" height="0.6"/><rect x="469.3" y="315.6" width="0.6" height="0.6"/><rect x="414.3" y="351.5" width="1.0" height="1.0"/><rect x="395.6" y="302.7" width="1.0" height="1.0"/><rect x="403.2" y="312.6" width="0.6" height="0.6"/><rect x="481.6" y="417.3" width="0.8" height="0.8"/><rect x="383.6" y="465.4" width="0.8" height="0.8"/><rect x="393.0" y="479.5" width="0.8" height="0.8"/><rect x="474.8" y="320.7" width="1.0" height="1.0"/><rect x="468.4" y="320.5" width="0.8" height="0.8"/><rect x="488.3" y="369.2" width="0.8" height="0.8"/><rect x="390.1" y="352.0" width="1.0" height="1.0"/><rect x="411.0" y="355.9" width="0.8" height="0.8"/><rect x="420.2" y="291.6" width="0.8" height="0.8"/><rect x="429.6" y="347.4" width="0.6" height="0.6"/><rect x="379.9" y="472.6" width="0.6" height="0.6"/><rect x="485.5" y="309.1" width="0.8" height="0.8"/><rect x="399.4" y="470.1" width="0.6" height="0.6"/><rect x="399.3" y="314.0" width="0.8" height="0.8"/><rect x="470.5" y="423.9" width="0.8" height="0.8"/><rect x="415.9" y="395.9" width="1.0" height="1.0"/><rect x="436.2" y="428.8" width="0.6" height="0.6"/><rect x="400.3" y="448.7" width="0.6" height="0.6"/><rect x="418.3" y="302.6" width="0.6" height="0.6"/><rect x="444.0" y="449.1" width="0.6" height="0.6"/><rect x="440.8" y="332.7" width="0.8" height="0.8"/><rect x="472.1" y="379.2" width="0.8" height="0.8"/><rect x="488.3" y="372.0" width="0.8" height="0.8"/><rect x="442.5" y="296.7" width="1.0" height="1.0"/><rect x="395.3" y="310.0" width="0.6" height="0.6"/><rect x="398.2" y="324.4" width="0.8" height="0.8"/><rect x="443.3" y="394.7" width="0.6" height="0.6"/><rect x="401.7" y="388.5" width="0.6" height="0.6"/><rect x="399.3" y="449.5" width="0.8" height="0.8"/><rect x="370.5" y="291.7" width="1.0" height="1.0"/><rect x="433.8" y="326.1" width="0.8" height="0.8"/><rect x="396.2" y="377.9" width="1.0" height="1.0"/><rect x="466.7" y="374.9" width="0.8" height="0.8"/><rect x="433.1" y="466.6" width="1.0" height="1.0"/><rect x="403.9" y="331.3" width="0.6" height="0.6"/><rect x="408.2" y="455.3" width="1.0" height="1.0"/><rect x="455.6" y="316.1" width="0.8" height="0.8"/><rect x="486.8" y="456.2" width="0.6" height="0.6"/><rect x="374.7" y="436.9" width="0.8" height="0.8"/><rect x="419.0" y="299.1" width="1.0" height="1.0"/><rect x="469.5" y="463.0" width="1.0" height="1.0"/><rect x="485.4" y="408.4" width="1.0" height="1.0"/><rect x="402.0" y="380.4" width="0.6" height="0.6"/><rect x="399.1" y="288.7" width="0.8" height="0.8"/><rect x="484.3" y="483.5" width="1.0" height="1.0"/><rect x="405.8" y="294.9" width="0.8" height="0.8"/><rect x="392.8" y="324.8" width="0.8" height="0.8"/><rect x="412.9" y="383.4" width="1.0" height="1.0"/><rect x="446.7" y="337.9" width="0.6" height="0.6"/><rect x="377.2" y="452.2" width="0.6" height="0.6"/><rect x="415.1" y="296.4" width="0.6" height="0.6"/><rect x="402.9" y="414.6" width="0.6" height="0.6"/><rect x="438.0" y="394.4" width="0.6" height="0.6"/><rect x="446.9" y="431.9" width="1.0" height="1.0"/><rect x="413.9" y="353.6" width="0.8" height="0.8"/><rect x="384.4" y="433.6" width="1.0" height="1.0"/><rect x="383.8" y="453.8" width="1.0" height="1.0"/><rect x="475.7" y="414.1" width="1.0" height="1.0"/><rect x="452.2" y="389.6" width="1.0" height="1.0"/><rect x="458.6" y="402.3" width="0.6" height="0.6"/><rect x="467.6" y="405.4" width="1.0" height="1.0"/><rect x="450.0" y="427.4" width="0.6" height="0.6"/><rect x="376.5" y="296.4" width="1.0" height="1.0"/><rect x="410.4" y="309.1" width="0.8" height="0.8"/><rect x="434.7" y="414.2" width="1.0" height="1.0"/><rect x="431.4" y="337.2" width="0.8" height="0.8"/><rect x="366.4" y="448.3" width="1.0" height="1.0"/><rect x="480.7" y="468.5" width="0.6" height="0.6"/><rect x="447.1" y="301.3" width="1.0" height="1.0"/><rect x="424.3" y="450.7" width="0.8" height="0.8"/><rect x="394.9" y="440.0" width="0.6" height="0.6"/><rect x="457.0" y="484.1" width="0.8" height="0.8"/><rect x="470.0" y="303.4" width="1.0" height="1.0"/><rect x="401.3" y="297.4" width="1.0" height="1.0"/><rect x="445.1" y="303.6" width="0.6" height="0.6"/><rect x="406.8" y="419.0" width="1.0" height="1.0"/><rect x="403.4" y="402.1" width="0.6" height="0.6"/><rect x="425.3" y="385.6" width="1.0" height="1.0"/><rect x="378.2" y="331.8" width="0.8" height="0.8"/><rect x="401.8" y="391.8" width="0.8" height="0.8"/><rect x="423.3" y="442.2" width="1.0" height="1.0"/><rect x="390.5" y="484.6" width="0.8" height="0.8"/><rect x="368.2" y="380.3" width="1.0" height="1.0"/><rect x="485.1" y="378.3" width="0.8" height="0.8"/><rect x="413.6" y="472.2" width="0.6" height="0.6"/><rect x="375.2" y="306.2" width="1.0" height="1.0"/><rect x="430.5" y="479.5" width="0.6" height="0.6"/><rect x="440.2" y="415.0" width="0.8" height="0.8"/><rect x="475.1" y="429.4" width="0.6" height="0.6"/><rect x="427.2" y="464.1" width="0.8" height="0.8"/><rect x="369.1" y="288.7" width="0.8" height="0.8"/><rect x="449.8" y="369.5" width="1.0" height="1.0"/><rect x="383.3" y="357.1" width="0.8" height="0.8"/><rect x="380.9" y="354.6" width="0.8" height="0.8"/><rect x="458.3" y="456.7" width="0.6" height="0.6"/><rect x="481.6" y="327.3" width="0.6" height="0.6"/><rect x="476.9" y="346.3" width="0.8" height="0.8"/><rect x="374.0" y="366.4" width="1.0" height="1.0"/><rect x="375.4" y="474.0" width="0.8" height="0.8"/><rect x="471.1" y="344.4" width="0.6" height="0.6"/><rect x="468.7" y="345.4" width="0.6" height="0.6"/><rect x="396.7" y="341.4" width="1.0" height="1.0"/><rect x="404.8" y="443.4" width="0.8" height="0.8"/><rect x="474.8" y="451.2" width="1.0" height="1.0"/><rect x="415.2" y="464.0" width="1.0" height="1.0"/><rect x="433.6" y="432.6" width="0.6" height="0.6"/><rect x="480.8" y="370.6" width="1.0" height="1.0"/><rect x="458.6" y="417.5" width="0.8" height="0.8"/><rect x="425.7" y="471.3" width="1.0" height="1.0"/><rect x="381.7" y="382.9" width="0.8" height="0.8"/><rect x="400.7" y="339.4" width="1.0" height="1.0"/><rect x="486.1" y="340.3" width="1.0" height="1.0"/><rect x="395.4" y="385.1" width="1.0" height="1.0"/><rect x="414.5" y="321.6" width="0.6" height="0.6"/><rect x="375.2" y="388.6" width="0.8" height="0.8"/><rect x="433.7" y="379.1" width="0.8" height="0.8"/><rect x="488.6" y="378.4" width="0.6" height="0.6"/><rect x="433.4" y="337.1" width="0.6" height="0.6"/><rect x="408.1" y="306.3" width="0.6" height="0.6"/><rect x="411.3" y="450.7" width="0.6" height="0.6"/><rect x="475.1" y="438.7" width="0.8" height="0.8"/><rect x="413.1" y="437.9" width="0.6" height="0.6"/><rect x="412.4" y="356.0" width="0.6" height="0.6"/><rect x="427.3" y="403.4" width="0.8" height="0.8"/><rect x="381.5" y="389.2" width="1.0" height="1.0"/><rect x="463.2" y="458.6" width="0.6" height="0.6"/><rect x="399.3" y="337.9" width="0.8" height="0.8"/><rect x="445.4" y="374.8" width="0.8" height="0.8"/><rect x="470.4" y="463.5" width="0.6" height="0.6"/><rect x="381.7" y="373.5" width="0.8" height="0.8"/><rect x="485.1" y="386.5" width="0.6" height="0.6"/><rect x="414.2" y="474.3" width="1.0" height="1.0"/><rect x="471.2" y="483.4" width="0.6" height="0.6"/><rect x="462.3" y="333.0" width="0.6" height="0.6"/><rect x="430.3" y="425.1" width="1.0" height="1.0"/><rect x="452.2" y="458.1" width="0.8" height="0.8"/><rect x="376.5" y="444.1" width="0.6" height="0.6"/><rect x="462.2" y="334.7" width="0.6" height="0.6"/><rect x="445.4" y="349.1" width="0.6" height="0.6"/><rect x="443.1" y="394.2" width="0.8" height="0.8"/><rect x="451.9" y="310.5" width="0.6" height="0.6"/><rect x="402.9" y="477.7" width="0.6" height="0.6"/><rect x="413.7" y="332.9" width="1.0" height="1.0"/><rect x="366.1" y="396.0" width="0.8" height="0.8"/><rect x="400.3" y="351.6" width="0.6" height="0.6"/><rect x="424.5" y="335.2" width="0.6" height="0.6"/><rect x="369.6" y="370.8" width="1.0" height="1.0"/><rect x="403.8" y="292.4" width="0.8" height="0.8"/><rect x="474.8" y="418.1" width="0.6" height="0.6"/><rect x="397.6" y="422.1" width="0.8" height="0.8"/><rect x="393.9" y="294.9" width="0.8" height="0.8"/><rect x="454.4" y="360.8" width="0.8" height="0.8"/><rect x="390.4" y="448.2" width="1.0" height="1.0"/><rect x="470.0" y="301.6" width="0.8" height="0.8"/><rect x="485.3" y="350.7" width="0.6" height="0.6"/><rect x="394.4" y="332.5" width="0.8" height="0.8"/><rect x="379.4" y="413.3" width="1.0" height="1.0"/><rect x="389.0" y="332.9" width="0.8" height="0.8"/><rect x="478.0" y="299.3" width="1.0" height="1.0"/><rect x="384.0" y="367.1" width="0.6" height="0.6"/><rect x="368.9" y="407.8" width="0.8" height="0.8"/><rect x="372.4" y="300.1" width="0.8" height="0.8"/><rect x="421.3" y="431.1" width="0.8" height="0.8"/><rect x="456.1" y="488.5" width="0.6" height="0.6"/><rect x="406.5" y="325.3" width="1.0" height="1.0"/><rect x="457.8" y="294.4" width="1.0" height="1.0"/><rect x="455.2" y="456.7" width="0.8" height="0.8"/><rect x="420.4" y="309.9" width="0.6" height="0.6"/><rect x="400.4" y="358.6" width="0.6" height="0.6"/><rect x="435.0" y="440.5" width="0.8" height="0.8"/><rect x="409.9" y="453.1" width="0.8" height="0.8"/><rect x="376.8" y="429.8" width="0.6" height="0.6"/><rect x="411.8" y="472.8" width="0.6" height="0.6"/><rect x="405.8" y="436.2" width="0.8" height="0.8"/><rect x="369.7" y="370.6" width="1.0" height="1.0"/><rect x="460.3" y="296.2" width="0.6" height="0.6"/><rect x="423.1" y="449.5" width="0.6" height="0.6"/><rect x="397.6" y="438.2" width="1.0" height="1.0"/><rect x="407.7" y="342.7" width="1.0" height="1.0"/><rect x="371.4" y="438.0" width="1.0" height="1.0"/><rect x="404.9" y="343.4" width="0.6" height="0.6"/><rect x="454.8" y="407.7" width="1.0" height="1.0"/><rect x="482.4" y="301.1" width="0.6" height="0.6"/><rect x="379.2" y="431.8" width="0.8" height="0.8"/><rect x="483.3" y="365.7" width="0.8" height="0.8"/><rect x="478.4" y="451.8" width="0.6" height="0.6"/><rect x="480.2" y="324.8" width="1.0" height="1.0"/><rect x="403.3" y="427.1" width="0.6" height="0.6"/><rect x="440.7" y="353.9" width="0.8" height="0.8"/><rect x="422.7" y="445.6" width="1.0" height="1.0"/><rect x="375.7" y="327.7" width="0.6" height="0.6"/><rect x="396.4" y="301.0" width="0.6" height="0.6"/><rect x="425.2" y="397.5" width="0.6" height="0.6"/><rect x="486.6" y="465.6" width="0.6" height="0.6"/><rect x="398.6" y="304.9" width="0.6" height="0.6"/><rect x="417.8" y="486.7" width="0.8" height="0.8"/><rect x="387.3" y="314.7" width="0.8" height="0.8"/><rect x="442.3" y="423.5" width="1.0" height="1.0"/><rect x="432.2" y="443.5" width="0.6" height="0.6"/><rect x="461.9" y="347.1" width="0.8" height="0.8"/><rect x="435.7" y="363.0" width="1.0" height="1.0"/><rect x="398.0" y="376.3" width="0.6" height="0.6"/><rect x="396.2" y="318.8" width="1.0" height="1.0"/><rect x="389.2" y="301.0" width="0.8" height="0.8"/><rect x="488.1" y="390.0" width="0.6" height="0.6"/><rect x="445.9" y="308.2" width="0.8" height="0.8"/><rect x="487.9" y="308.6" width="0.8" height="0.8"/><rect x="474.6" y="334.5" width="0.8" height="0.8"/><rect x="478.5" y="296.1" width="0.8" height="0.8"/><rect x="394.6" y="298.1" width="1.0" height="1.0"/><rect x="485.7" y="405.2" width="0.6" height="0.6"/><rect x="411.8" y="462.1" width="0.8" height="0.8"/><rect x="440.2" y="443.8" width="1.0" height="1.0"/><rect x="482.3" y="309.3" width="1.0" height="1.0"/><rect x="453.3" y="358.3" width="0.6" height="0.6"/><rect x="411.4" y="316.4" width="0.6" height="0.6"/><rect x="489.0" y="295.7" width="1.0" height="1.0"/><rect x="446.2" y="328.9" width="0.6" height="0.6"/><rect x="466.7" y="370.2" width="0.8" height="0.8"/><rect x="388.8" y="350.8" width="0.6" height="0.6"/><rect x="369.9" y="387.6" width="0.8" height="0.8"/><rect x="373.8" y="308.4" width="0.8" height="0.8"/><rect x="447.7" y="319.1" width="1.0" height="1.0"/><rect x="377.2" y="320.9" width="1.0" height="1.0"/><rect x="399.4" y="486.6" width="1.0" height="1.0"/><rect x="403.8" y="479.6" width="0.8" height="0.8"/><rect x="457.7" y="465.6" width="0.8" height="0.8"/><rect x="417.2" y="461.7" width="0.8" height="0.8"/><rect x="445.3" y="366.5" width="0.8" height="0.8"/><rect x="391.1" y="289.2" width="0.6" height="0.6"/><rect x="418.1" y="452.9" width="0.8" height="0.8"/><rect x="437.1" y="361.3" width="0.6" height="0.6"/><rect x="382.0" y="298.4" width="0.6" height="0.6"/><rect x="444.8" y="470.9" width="0.6" height="0.6"/><rect x="436.5" y="474.4" width="1.0" height="1.0"/><rect x="428.0" y="317.3" width="0.8" height="0.8"/><rect x="385.9" y="322.5" width="0.6" height="0.6"/><rect x="379.4" y="386.6" width="0.6" height="0.6"/><rect x="403.1" y="456.3" width="0.6" height="0.6"/><rect x="486.0" y="385.0" width="0.6" height="0.6"/><rect x="440.7" y="415.9" width="0.6" height="0.6"/><rect x="477.2" y="412.7" width="0.6" height="0.6"/><rect x="444.8" y="460.2" width="1.0" height="1.0"/><rect x="415.8" y="458.1" width="0.8" height="0.8"/><rect x="388.5" y="331.8" width="0.8" height="0.8"/><rect x="481.4" y="319.5" width="0.8" height="0.8"/><rect x="381.1" y="337.7" width="1.0" height="1.0"/><rect x="466.3" y="326.7" width="1.0" height="1.0"/><rect x="469.6" y="423.1" width="1.0" height="1.0"/><rect x="469.1" y="311.7" width="1.0" height="1.0"/><rect x="422.1" y="458.7" width="0.8" height="0.8"/><rect x="445.8" y="350.0" width="0.6" height="0.6"/><rect x="418.4" y="420.4" width="0.8" height="0.8"/><rect x="427.9" y="323.9" width="0.6" height="0.6"/><rect x="442.1" y="386.4" width="0.6" height="0.6"/><rect x="421.0" y="412.3" width="0.8" height="0.8"/><rect x="468.9" y="450.9" width="0.8" height="0.8"/><rect x="379.2" y="313.8" width="0.8" height="0.8"/><rect x="410.9" y="449.3" width="1.0" height="1.0"/><rect x="428.7" y="296.2" width="1.0" height="1.0"/><rect x="382.0" y="473.3" width="0.8" height="0.8"/><rect x="461.6" y="390.8" width="0.6" height="0.6"/><rect x="458.5" y="467.9" width="1.0" height="1.0"/><rect x="483.0" y="315.4" width="0.6" height="0.6"/><rect x="488.5" y="435.1" width="0.6" height="0.6"/><rect x="389.8" y="485.3" width="0.8" height="0.8"/><rect x="401.4" y="451.0" width="0.6" height="0.6"/><rect x="450.4" y="432.9" width="0.6" height="0.6"/><rect x="374.1" y="358.5" width="0.8" height="0.8"/><rect x="385.5" y="468.2" width="0.8" height="0.8"/><rect x="477.3" y="379.7" width="0.8" height="0.8"/><rect x="427.8" y="472.9" width="0.6" height="0.6"/><rect x="438.8" y="411.8" width="0.6" height="0.6"/><rect x="405.2" y="295.4" width="0.6" height="0.6"/><rect x="415.6" y="416.0" width="0.8" height="0.8"/><rect x="449.6" y="468.0" width="0.6" height="0.6"/><rect x="463.4" y="341.1" width="1.0" height="1.0"/><rect x="372.0" y="460.5" width="0.8" height="0.8"/><rect x="434.3" y="404.6" width="0.6" height="0.6"/><rect x="397.0" y="395.7" width="0.8" height="0.8"/><rect x="456.8" y="362.7" width="0.8" height="0.8"/><rect x="487.8" y="404.0" width="0.8" height="0.8"/><rect x="406.7" y="304.4" width="0.6" height="0.6"/><rect x="387.7" y="437.5" width="0.6" height="0.6"/><rect x="402.5" y="391.7" width="0.8" height="0.8"/><rect x="444.6" y="485.8" width="1.0" height="1.0"/><rect x="480.2" y="468.0" width="1.0" height="1.0"/><rect x="366.2" y="294.8" width="0.6" height="0.6"/><rect x="401.8" y="413.7" width="0.8" height="0.8"/><rect x="429.1" y="468.0" width="0.6" height="0.6"/><rect x="426.1" y="411.1" width="0.6" height="0.6"/><rect x="368.7" y="288.5" width="0.8" height="0.8"/><rect x="403.4" y="393.1" width="1.0" height="1.0"/><rect x="393.6" y="405.3" width="1.0" height="1.0"/><rect x="382.4" y="361.6" width="0.8" height="0.8"/><rect x="385.5" y="290.8" width="0.6" height="0.6"/><rect x="453.0" y="378.6" width="0.6" height="0.6"/><rect x="444.5" y="463.1" width="0.8" height="0.8"/><rect x="415.4" y="341.1" width="0.6" height="0.6"/><rect x="372.9" y="453.0" width="0.8" height="0.8"/><rect x="439.2" y="404.3" width="1.0" height="1.0"/><rect x="481.3" y="435.4" width="0.6" height="0.6"/><rect x="386.3" y="288.1" width="0.6" height="0.6"/><rect x="431.4" y="369.6" width="0.6" height="0.6"/><rect x="385.6" y="471.3" width="0.6" height="0.6"/><rect x="367.5" y="398.7" width="0.6" height="0.6"/><rect x="383.5" y="328.1" width="1.0" height="1.0"/><rect x="445.1" y="418.2" width="0.8" height="0.8"/><rect x="466.0" y="323.1" width="0.8" height="0.8"/><rect x="373.8" y="413.8" width="1.0" height="1.0"/><rect x="462.3" y="431.8" width="0.6" height="0.6"/><rect x="412.1" y="375.8" width="0.8" height="0.8"/><rect x="375.9" y="419.8" width="0.6" height="0.6"/><rect x="393.8" y="309.2" width="0.6" height="0.6"/><rect x="445.2" y="312.8" width="1.0" height="1.0"/><rect x="479.8" y="477.5" width="0.8" height="0.8"/><rect x="453.5" y="341.5" width="1.0" height="1.0"/><rect x="449.5" y="425.8" width="1.0" height="1.0"/><rect x="485.5" y="347.4" width="0.6" height="0.6"/><rect x="376.5" y="390.0" width="0.6" height="0.6"/><rect x="398.0" y="335.5" width="1.0" height="1.0"/><rect x="390.9" y="320.0" width="0.8" height="0.8"/><rect x="389.6" y="366.1" width="1.0" height="1.0"/><rect x="395.4" y="470.4" width="1.0" height="1.0"/><rect x="479.4" y="485.3" width="1.0" height="1.0"/><rect x="423.7" y="456.8" width="1.0" height="1.0"/><rect x="366.8" y="293.3" width="1.0" height="1.0"/><rect x="394.8" y="465.8" width="0.6" height="0.6"/><rect x="414.2" y="405.7" width="1.0" height="1.0"/><rect x="478.0" y="317.1" width="0.6" height="0.6"/><rect x="379.8" y="413.0" width="0.6" height="0.6"/><rect x="408.4" y="316.5" width="0.6" height="0.6"/><rect x="369.8" y="315.8" width="1.0" height="1.0"/><rect x="444.0" y="428.1" width="1.0" height="1.0"/><rect x="371.7" y="460.2" width="0.8" height="0.8"/><rect x="390.5" y="479.9" width="1.0" height="1.0"/><rect x="475.6" y="301.3" width="1.0" height="1.0"/><rect x="482.2" y="309.5" width="0.6" height="0.6"/><rect x="391.0" y="294.8" width="1.0" height="1.0"/><rect x="376.8" y="439.0" width="1.0" height="1.0"/><rect x="401.3" y="308.1" width="0.6" height="0.6"/><rect x="463.4" y="417.9" width="0.8" height="0.8"/><rect x="405.3" y="373.2" width="0.6" height="0.6"/><rect x="409.2" y="474.9" width="0.6" height="0.6"/><rect x="454.0" y="362.0" width="0.8" height="0.8"/><rect x="460.6" y="409.0" width="0.8" height="0.8"/><rect x="470.7" y="412.3" width="0.6" height="0.6"/><rect x="463.1" y="294.3" width="1.0" height="1.0"/><rect x="461.1" y="357.7" width="1.0" height="1.0"/><rect x="371.9" y="401.8" width="1.0" height="1.0"/><rect x="472.1" y="306.3" width="0.8" height="0.8"/><rect x="387.0" y="288.3" width="0.6" height="0.6"/><rect x="401.5" y="438.9" width="0.6" height="0.6"/><rect x="366.5" y="386.7" width="0.8" height="0.8"/><rect x="451.5" y="453.9" width="0.8" height="0.8"/><rect x="438.9" y="480.4" width="1.0" height="1.0"/><rect x="398.1" y="477.7" width="0.8" height="0.8"/><rect x="466.3" y="476.6" width="0.6" height="0.6"/><rect x="427.3" y="310.1" width="1.0" height="1.0"/><rect x="460.3" y="386.5" width="1.0" height="1.0"/><rect x="435.0" y="309.0" width="0.8" height="0.8"/><rect x="409.7" y="368.7" width="0.8" height="0.8"/><rect x="475.7" y="437.8" width="0.8" height="0.8"/><rect x="475.3" y="293.1" width="0.6" height="0.6"/><rect x="403.3" y="374.0" width="1.0" height="1.0"/><rect x="427.6" y="364.2" width="1.0" height="1.0"/><rect x="394.7" y="380.6" width="1.0" height="1.0"/><rect x="439.1" y="426.5" width="1.0" height="1.0"/><rect x="445.5" y="358.0" width="0.8" height="0.8"/><rect x="430.2" y="462.5" width="0.8" height="0.8"/><rect x="447.4" y="437.1" width="0.6" height="0.6"/><rect x="423.0" y="426.5" width="0.8" height="0.8"/><rect x="437.2" y="313.3" width="0.8" height="0.8"/><rect x="445.1" y="428.0" width="1.0" height="1.0"/><rect x="389.6" y="348.6" width="1.0" height="1.0"/><rect x="467.7" y="412.1" width="1.0" height="1.0"/><rect x="385.2" y="337.8" width="0.8" height="0.8"/><rect x="440.2" y="358.1" width="0.6" height="0.6"/><rect x="406.4" y="326.0" width="1.0" height="1.0"/><rect x="488.4" y="321.1" width="1.0" height="1.0"/><rect x="378.5" y="365.2" width="0.6" height="0.6"/><rect x="463.8" y="435.4" width="0.8" height="0.8"/><rect x="399.7" y="310.0" width="0.6" height="0.6"/><rect x="400.5" y="465.9" width="0.8" height="0.8"/><rect x="370.2" y="368.2" width="0.8" height="0.8"/><rect x="451.3" y="388.6" width="1.0" height="1.0"/><rect x="402.4" y="292.4" width="0.8" height="0.8"/><rect x="440.3" y="369.3" width="1.0" height="1.0"/><rect x="395.8" y="459.4" width="1.0" height="1.0"/><rect x="436.6" y="438.6" width="0.8" height="0.8"/><rect x="470.1" y="422.2" width="1.0" height="1.0"/><rect x="474.2" y="443.6" width="1.0" height="1.0"/><rect x="437.8" y="333.9" width="0.6" height="0.6"/><rect x="444.9" y="379.2" width="0.8" height="0.8"/><rect x="398.0" y="428.8" width="0.8" height="0.8"/><rect x="395.8" y="368.4" width="1.0" height="1.0"/><rect x="443.4" y="338.3" width="0.8" height="0.8"/><rect x="425.4" y="292.0" width="0.8" height="0.8"/><rect x="429.7" y="420.9" width="0.6" height="0.6"/><rect x="476.0" y="353.9" width="0.6" height="0.6"/><rect x="413.8" y="386.5" width="0.6" height="0.6"/><rect x="370.7" y="397.2" width="0.6" height="0.6"/><rect x="454.1" y="479.2" width="0.6" height="0.6"/><rect x="429.9" y="308.3" width="1.0" height="1.0"/><rect x="422.2" y="329.2" width="0.8" height="0.8"/><rect x="429.0" y="416.5" width="0.8" height="0.8"/><rect x="430.2" y="370.5" width="0.8" height="0.8"/><rect x="391.8" y="425.6" width="0.8" height="0.8"/><rect x="429.2" y="475.5" width="1.0" height="1.0"/><rect x="487.1" y="359.5" width="0.6" height="0.6"/><rect x="397.1" y="364.7" width="0.6" height="0.6"/><rect x="367.6" y="372.1" width="0.8" height="0.8"/><rect x="443.3" y="423.7" width="1.0" height="1.0"/><rect x="398.6" y="333.1" width="1.0" height="1.0"/><rect x="415.3" y="479.7" width="0.6" height="0.6"/><rect x="488.3" y="481.1" width="0.8" height="0.8"/><rect x="392.1" y="314.0" width="0.6" height="0.6"/><rect x="465.6" y="415.5" width="0.8" height="0.8"/><rect x="445.0" y="432.9" width="0.6" height="0.6"/><rect x="409.4" y="416.4" width="0.8" height="0.8"/><rect x="423.6" y="347.2" width="1.0" height="1.0"/><rect x="445.9" y="444.7" width="0.8" height="0.8"/><rect x="409.6" y="459.0" width="0.8" height="0.8"/><rect x="452.6" y="426.2" width="0.8" height="0.8"/><rect x="449.5" y="384.8" width="1.0" height="1.0"/><rect x="464.3" y="360.0" width="1.0" height="1.0"/><rect x="403.1" y="384.4" width="0.8" height="0.8"/><rect x="442.7" y="305.2" width="0.8" height="0.8"/><rect x="384.8" y="348.9" width="0.8" height="0.8"/><rect x="373.0" y="454.4" width="0.8" height="0.8"/><rect x="462.4" y="316.2" width="0.8" height="0.8"/><rect x="443.9" y="291.0" width="0.6" height="0.6"/><rect x="391.8" y="302.5" width="0.8" height="0.8"/><rect x="396.8" y="308.4" width="0.6" height="0.6"/><rect x="471.1" y="325.3" width="0.8" height="0.8"/><rect x="408.6" y="318.7" width="0.8" height="0.8"/><rect x="463.4" y="321.8" width="1.0" height="1.0"/><rect x="440.8" y="445.0" width="1.0" height="1.0"/><rect x="476.9" y="398.2" width="1.0" height="1.0"/><rect x="469.2" y="327.7" width="1.0" height="1.0"/><rect x="392.2" y="303.8" width="0.8" height="0.8"/><rect x="448.6" y="311.5" width="0.6" height="0.6"/><rect x="398.5" y="335.1" width="0.6" height="0.6"/><rect x="424.2" y="400.0" width="0.8" height="0.8"/><rect x="423.5" y="317.0" width="0.8" height="0.8"/><rect x="396.3" y="321.1" width="1.0" height="1.0"/><rect x="472.1" y="289.3" width="0.8" height="0.8"/><rect x="423.6" y="401.1" width="1.0" height="1.0"/><rect x="402.5" y="381.6" width="0.8" height="0.8"/><rect x="417.5" y="481.1" width="0.6" height="0.6"/><rect x="388.2" y="360.4" width="1.0" height="1.0"/><rect x="369.5" y="410.5" width="1.0" height="1.0"/><rect x="456.6" y="488.8" width="0.6" height="0.6"/><rect x="428.8" y="385.4" width="0.6" height="0.6"/><rect x="370.2" y="432.4" width="1.0" height="1.0"/><rect x="381.6" y="307.0" width="1.0" height="1.0"/><rect x="411.0" y="383.4" width="1.0" height="1.0"/><rect x="434.2" y="471.4" width="0.8" height="0.8"/><rect x="419.5" y="372.9" width="1.0" height="1.0"/><rect x="372.5" y="346.1" width="0.8" height="0.8"/><rect x="467.8" y="369.1" width="1.0" height="1.0"/><rect x="487.1" y="463.5" width="0.8" height="0.8"/><rect x="485.9" y="419.6" width="0.6" height="0.6"/><rect x="406.7" y="351.7" width="0.8" height="0.8"/><rect x="381.7" y="483.5" width="0.6" height="0.6"/><rect x="462.5" y="296.1" width="1.0" height="1.0"/><rect x="434.2" y="369.6" width="1.0" height="1.0"/><rect x="372.1" y="348.4" width="0.6" height="0.6"/><rect x="371.7" y="453.2" width="0.8" height="0.8"/><rect x="440.9" y="420.3" width="1.0" height="1.0"/><rect x="477.9" y="411.0" width="1.0" height="1.0"/><rect x="384.1" y="423.4" width="1.0" height="1.0"/><rect x="439.3" y="424.9" width="0.6" height="0.6"/><rect x="370.9" y="415.4" width="1.0" height="1.0"/><rect x="459.8" y="308.4" width="0.6" height="0.6"/><rect x="472.9" y="372.7" width="0.6" height="0.6"/><rect x="478.4" y="419.8" width="0.8" height="0.8"/><rect x="473.2" y="315.9" width="0.8" height="0.8"/><rect x="435.1" y="339.9" width="0.8" height="0.8"/><rect x="388.7" y="294.9" width="0.6" height="0.6"/><rect x="419.0" y="417.0" width="0.6" height="0.6"/><rect x="427.2" y="393.0" width="0.6" height="0.6"/><rect x="461.2" y="372.6" width="1.0" height="1.0"/><rect x="479.0" y="377.7" width="0.6" height="0.6"/><rect x="449.6" y="407.4" width="1.0" height="1.0"/><rect x="486.6" y="383.6" width="0.8" height="0.8"/><rect x="433.5" y="304.7" width="0.8" height="0.8"/><rect x="392.1" y="318.5" width="0.6" height="0.6"/><rect x="418.5" y="289.9" width="1.0" height="1.0"/><rect x="381.0" y="482.2" width="0.6" height="0.6"/><rect x="392.8" y="312.4" width="0.8" height="0.8"/><rect x="368.2" y="432.6" width="0.6" height="0.6"/><rect x="421.4" y="437.6" width="0.6" height="0.6"/><rect x="411.0" y="438.2" width="1.0" height="1.0"/><rect x="471.2" y="434.7" width="0.6" height="0.6"/><rect x="402.1" y="400.1" width="0.8" height="0.8"/><rect x="422.7" y="475.4" width="0.8" height="0.8"/><rect x="478.4" y="298.6" width="0.6" height="0.6"/><rect x="367.4" y="291.0" width="1.0" height="1.0"/><rect x="450.5" y="412.3" width="0.8" height="0.8"/><rect x="404.3" y="434.6" width="0.6" height="0.6"/><rect x="483.8" y="455.8" width="1.0" height="1.0"/><rect x="373.4" y="361.9" width="1.0" height="1.0"/><rect x="455.5" y="382.4" width="0.6" height="0.6"/><rect x="383.8" y="448.3" width="0.8" height="0.8"/><rect x="483.3" y="321.0" width="0.8" height="0.8"/><rect x="424.7" y="444.4" width="0.8" height="0.8"/><rect x="482.2" y="445.7" width="1.0" height="1.0"/><rect x="407.1" y="344.3" width="1.0" height="1.0"/><rect x="485.8" y="429.4" width="1.0" height="1.0"/><rect x="406.8" y="409.8" width="0.6" height="0.6"/><rect x="468.2" y="408.8" width="0.8" height="0.8"/><rect x="437.9" y="484.3" width="0.6" height="0.6"/><rect x="412.3" y="425.6" width="1.0" height="1.0"/><rect x="460.9" y="335.1" width="0.8" height="0.8"/><rect x="400.8" y="288.3" width="0.8" height="0.8"/><rect x="399.0" y="319.6" width="0.6" height="0.6"/><rect x="401.5" y="316.3" width="1.0" height="1.0"/><rect x="384.1" y="484.0" width="1.0" height="1.0"/><rect x="450.2" y="471.7" width="0.8" height="0.8"/><rect x="431.8" y="396.5" width="0.8" height="0.8"/><rect x="464.1" y="328.3" width="1.0" height="1.0"/><rect x="480.6" y="335.0" width="1.0" height="1.0"/><rect x="373.1" y="367.5" width="1.0" height="1.0"/><rect x="391.4" y="339.2" width="0.6" height="0.6"/><rect x="463.4" y="380.4" width="0.6" height="0.6"/><rect x="431.9" y="359.4" width="0.6" height="0.6"/><rect x="394.6" y="404.5" width="0.8" height="0.8"/><rect x="474.9" y="392.9" width="0.8" height="0.8"/><rect x="428.3" y="328.6" width="0.6" height="0.6"/><rect x="389.7" y="324.3" width="1.0" height="1.0"/><rect x="401.6" y="404.2" width="0.8" height="0.8"/><rect x="415.5" y="392.0" width="0.6" height="0.6"/><rect x="396.3" y="473.4" width="0.8" height="0.8"/><rect x="412.0" y="309.3" width="1.0" height="1.0"/><rect x="423.0" y="304.4" width="0.8" height="0.8"/><rect x="439.5" y="357.3" width="1.0" height="1.0"/><rect x="440.7" y="306.9" width="0.6" height="0.6"/><rect x="487.8" y="462.1" width="0.8" height="0.8"/><rect x="438.2" y="330.9" width="0.8" height="0.8"/><rect x="418.4" y="478.2" width="1.0" height="1.0"/><rect x="466.7" y="481.7" width="0.8" height="0.8"/><rect x="469.8" y="356.1" width="0.6" height="0.6"/><rect x="412.5" y="293.5" width="0.6" height="0.6"/><rect x="434.6" y="463.0" width="0.8" height="0.8"/><rect x="425.9" y="458.0" width="0.6" height="0.6"/><rect x="472.1" y="416.6" width="0.6" height="0.6"/><rect x="452.9" y="306.1" width="0.8" height="0.8"/><rect x="435.4" y="416.8" width="1.0" height="1.0"/><rect x="428.3" y="324.7" width="0.6" height="0.6"/><rect x="411.6" y="335.3" width="1.0" height="1.0"/><rect x="393.3" y="295.8" width="0.8" height="0.8"/><rect x="481.8" y="299.9" width="1.0" height="1.0"/><rect x="477.3" y="456.3" width="0.6" height="0.6"/><rect x="397.7" y="391.2" width="1.0" height="1.0"/><rect x="445.5" y="486.1" width="0.6" height="0.6"/><rect x="378.4" y="351.9" width="0.6" height="0.6"/><rect x="481.5" y="424.1" width="0.8" height="0.8"/><rect x="438.5" y="376.7" width="1.0" height="1.0"/><rect x="379.0" y="353.1" width="0.8" height="0.8"/><rect x="414.0" y="363.4" width="0.8" height="0.8"/><rect x="386.7" y="335.9" width="0.6" height="0.6"/><rect x="478.5" y="467.3" width="0.8" height="0.8"/><rect x="454.2" y="327.2" width="0.6" height="0.6"/><rect x="385.3" y="455.4" width="0.6" height="0.6"/><rect x="480.9" y="462.2" width="1.0" height="1.0"/><rect x="383.2" y="377.9" width="0.6" height="0.6"/><rect x="479.9" y="365.4" width="0.6" height="0.6"/><rect x="443.3" y="378.9" width="0.8" height="0.8"/><rect x="405.7" y="335.0" width="0.6" height="0.6"/><rect x="443.3" y="316.7" width="0.6" height="0.6"/><rect x="456.5" y="324.2" width="0.8" height="0.8"/><rect x="434.1" y="317.1" width="0.6" height="0.6"/><rect x="398.8" y="370.8" width="0.6" height="0.6"/><rect x="369.1" y="402.8" width="0.8" height="0.8"/><rect x="407.1" y="321.7" width="0.8" height="0.8"/><rect x="379.4" y="379.7" width="0.8" height="0.8"/><rect x="380.0" y="484.7" width="0.6" height="0.6"/><rect x="443.6" y="446.3" width="0.6" height="0.6"/><rect x="434.9" y="455.9" width="0.6" height="0.6"/><rect x="397.7" y="328.5" width="0.8" height="0.8"/><rect x="419.1" y="340.6" width="0.6" height="0.6"/><rect x="479.8" y="307.6" width="0.8" height="0.8"/><rect x="417.1" y="320.6" width="1.0" height="1.0"/><rect x="486.4" y="317.0" width="1.0" height="1.0"/><rect x="368.0" y="450.2" width="0.8" height="0.8"/><rect x="428.8" y="377.0" width="1.0" height="1.0"/><rect x="401.2" y="360.4" width="0.6" height="0.6"/><rect x="478.2" y="331.9" width="1.0" height="1.0"/><rect x="388.2" y="457.5" width="1.0" height="1.0"/><rect x="460.8" y="431.0" width="0.6" height="0.6"/><rect x="439.9" y="454.6" width="1.0" height="1.0"/><rect x="455.9" y="441.0" width="0.6" height="0.6"/><rect x="391.3" y="411.1" width="1.0" height="1.0"/><rect x="443.3" y="326.6" width="0.8" height="0.8"/><rect x="390.9" y="301.2" width="1.0" height="1.0"/><rect x="429.9" y="457.1" width="0.6" height="0.6"/><rect x="429.8" y="357.9" width="0.8" height="0.8"/><rect x="469.6" y="461.8" width="0.8" height="0.8"/><rect x="377.1" y="370.3" width="0.8" height="0.8"/><rect x="382.4" y="421.8" width="0.6" height="0.6"/><rect x="388.9" y="455.2" width="0.8" height="0.8"/><rect x="370.5" y="429.2" width="1.0" height="1.0"/><rect x="439.2" y="288.9" width="1.0" height="1.0"/><rect x="480.7" y="482.7" width="0.6" height="0.6"/><rect x="380.9" y="431.6" width="0.8" height="0.8"/><rect x="461.8" y="462.5" width="1.0" height="1.0"/><rect x="458.4" y="300.3" width="0.6" height="0.6"/><rect x="483.3" y="387.5" width="1.0" height="1.0"/><rect x="369.2" y="449.7" width="0.6" height="0.6"/><rect x="368.5" y="482.5" width="0.6" height="0.6"/><rect x="442.1" y="321.7" width="0.8" height="0.8"/><rect x="396.8" y="452.2" width="0.6" height="0.6"/><rect x="368.4" y="474.2" width="1.0" height="1.0"/><rect x="390.0" y="291.6" width="1.0" height="1.0"/><rect x="444.3" y="381.3" width="0.6" height="0.6"/><rect x="452.4" y="308.7" width="0.6" height="0.6"/><rect x="454.2" y="297.1" width="0.6" height="0.6"/><rect x="423.2" y="405.8" width="0.8" height="0.8"/><rect x="379.5" y="312.4" width="0.6" height="0.6"/><rect x="432.6" y="333.7" width="0.6" height="0.6"/><rect x="384.1" y="403.1" width="1.0" height="1.0"/><rect x="414.8" y="478.6" width="0.6" height="0.6"/><rect x="481.3" y="366.1" width="0.8" height="0.8"/><rect x="439.4" y="409.2" width="0.6" height="0.6"/><rect x="414.7" y="477.2" width="0.8" height="0.8"/><rect x="407.6" y="336.3" width="0.8" height="0.8"/><rect x="454.0" y="457.4" width="1.0" height="1.0"/><rect x="464.9" y="471.5" width="0.8" height="0.8"/><rect x="470.3" y="298.8" width="1.0" height="1.0"/><rect x="384.0" y="424.7" width="0.8" height="0.8"/><rect x="396.7" y="372.8" width="1.0" height="1.0"/><rect x="367.4" y="309.9" width="0.6" height="0.6"/><rect x="374.5" y="375.0" width="1.0" height="1.0"/><rect x="448.3" y="333.3" width="0.8" height="0.8"/><rect x="485.3" y="444.1" width="0.8" height="0.8"/><rect x="443.9" y="450.7" width="0.6" height="0.6"/><rect x="370.2" y="417.0" width="0.8" height="0.8"/><rect x="478.9" y="413.3" width="1.0" height="1.0"/><rect x="432.7" y="473.8" width="1.0" height="1.0"/><rect x="378.4" y="312.5" width="0.6" height="0.6"/><rect x="419.3" y="479.1" width="0.8" height="0.8"/><rect x="379.9" y="357.9" width="0.6" height="0.6"/><rect x="380.8" y="407.5" width="1.0" height="1.0"/><rect x="476.9" y="305.0" width="1.0" height="1.0"/><rect x="431.7" y="317.8" width="0.6" height="0.6"/><rect x="428.9" y="465.9" width="0.8" height="0.8"/><rect x="437.0" y="343.1" width="1.0" height="1.0"/><rect x="376.8" y="397.8" width="0.8" height="0.8"/><rect x="441.0" y="402.6" width="1.0" height="1.0"/><rect x="413.6" y="398.3" width="0.8" height="0.8"/><rect x="422.7" y="398.2" width="1.0" height="1.0"/><rect x="424.8" y="452.6" width="0.6" height="0.6"/><rect x="395.8" y="332.5" width="1.0" height="1.0"/><rect x="433.1" y="482.9" width="0.8" height="0.8"/><rect x="367.5" y="358.9" width="0.6" height="0.6"/><rect x="405.8" y="353.4" width="0.8" height="0.8"/><rect x="401.0" y="486.5" width="0.8" height="0.8"/><rect x="373.0" y="292.4" width="1.0" height="1.0"/><rect x="374.2" y="463.1" width="0.8" height="0.8"/><rect x="446.9" y="391.9" width="0.8" height="0.8"/><rect x="409.6" y="441.3" width="1.0" height="1.0"/><rect x="393.7" y="480.8" width="1.0" height="1.0"/><rect x="480.9" y="371.8" width="1.0" height="1.0"/><rect x="409.4" y="423.7" width="1.0" height="1.0"/><rect x="441.1" y="343.6" width="1.0" height="1.0"/><rect x="377.7" y="460.1" width="0.8" height="0.8"/><rect x="399.0" y="414.8" width="1.0" height="1.0"/><rect x="478.5" y="313.6" width="0.6" height="0.6"/><rect x="366.5" y="441.9" width="1.0" height="1.0"/><rect x="380.4" y="367.9" width="1.0" height="1.0"/><rect x="384.4" y="458.8" width="0.8" height="0.8"/><rect x="473.3" y="410.1" width="0.8" height="0.8"/><rect x="470.8" y="427.2" width="0.8" height="0.8"/><rect x="454.9" y="346.9" width="0.8" height="0.8"/><rect x="430.7" y="407.7" width="1.0" height="1.0"/><rect x="405.6" y="446.2" width="0.8" height="0.8"/><rect x="412.8" y="348.3" width="1.0" height="1.0"/><rect x="403.4" y="317.1" width="1.0" height="1.0"/><rect x="412.4" y="334.6" width="0.8" height="0.8"/><rect x="405.8" y="457.5" width="0.6" height="0.6"/><rect x="483.9" y="329.1" width="0.8" height="0.8"/><rect x="475.6" y="480.1" width="0.6" height="0.6"/><rect x="371.8" y="401.6" width="0.8" height="0.8"/><rect x="402.9" y="395.8" width="0.8" height="0.8"/><rect x="432.2" y="488.7" width="1.0" height="1.0"/><rect x="467.6" y="434.2" width="0.8" height="0.8"/><rect x="413.9" y="359.9" width="1.0" height="1.0"/><rect x="449.2" y="379.1" width="0.6" height="0.6"/><rect x="449.2" y="393.6" width="0.6" height="0.6"/><rect x="416.4" y="388.7" width="1.0" height="1.0"/><rect x="435.0" y="403.4" width="0.6" height="0.6"/><rect x="484.6" y="385.8" width="0.8" height="0.8"/><rect x="460.4" y="468.7" width="1.0" height="1.0"/><rect x="408.2" y="394.6" width="0.6" height="0.6"/><rect x="387.0" y="351.9" width="0.6" height="0.6"/><rect x="467.6" y="391.0" width="0.6" height="0.6"/><rect x="446.7" y="347.3" width="0.8" height="0.8"/><rect x="466.9" y="487.0" width="0.8" height="0.8"/><rect x="443.6" y="393.3" width="1.0" height="1.0"/><rect x="391.6" y="467.5" width="0.8" height="0.8"/><rect x="388.4" y="414.6" width="1.0" height="1.0"/><rect x="379.1" y="402.5" width="1.0" height="1.0"/><rect x="444.3" y="296.5" width="0.8" height="0.8"/><rect x="367.3" y="288.6" width="1.0" height="1.0"/><rect x="451.0" y="288.8" width="0.8" height="0.8"/><rect x="414.9" y="307.8" width="0.6" height="0.6"/><rect x="448.2" y="327.5" width="0.8" height="0.8"/><rect x="460.6" y="402.0" width="1.0" height="1.0"/><rect x="476.2" y="391.4" width="0.6" height="0.6"/><rect x="436.7" y="370.6" width="0.6" height="0.6"/><rect x="383.9" y="392.2" width="1.0" height="1.0"/><rect x="379.1" y="308.1" width="0.6" height="0.6"/><rect x="482.6" y="386.6" width="0.8" height="0.8"/><rect x="441.4" y="450.1" width="0.6" height="0.6"/><rect x="446.0" y="425.6" width="1.0" height="1.0"/><rect x="405.7" y="431.8" width="0.8" height="0.8"/><rect x="399.9" y="294.6" width="1.0" height="1.0"/><rect x="378.2" y="469.7" width="1.0" height="1.0"/><rect x="373.8" y="326.5" width="1.0" height="1.0"/><rect x="413.4" y="299.0" width="0.8" height="0.8"/><rect x="437.7" y="480.9" width="0.8" height="0.8"/><rect x="372.7" y="335.9" width="0.6" height="0.6"/><rect x="371.4" y="475.1" width="0.6" height="0.6"/><rect x="404.7" y="468.7" width="0.8" height="0.8"/><rect x="403.4" y="409.1" width="0.8" height="0.8"/><rect x="486.5" y="301.6" width="1.0" height="1.0"/><rect x="413.9" y="432.4" width="0.6" height="0.6"/><rect x="416.9" y="368.1" width="1.0" height="1.0"/><rect x="425.6" y="447.3" width="0.6" height="0.6"/><rect x="376.8" y="322.2" width="0.8" height="0.8"/><rect x="388.9" y="483.3" width="0.8" height="0.8"/><rect x="414.7" y="361.0" width="0.8" height="0.8"/><rect x="431.7" y="365.5" width="0.8" height="0.8"/><rect x="446.1" y="481.2" width="0.8" height="0.8"/><rect x="467.6" y="358.6" width="0.6" height="0.6"/><rect x="413.6" y="381.9" width="0.8" height="0.8"/><rect x="395.2" y="295.0" width="1.0" height="1.0"/><rect x="369.1" y="449.8" width="0.6" height="0.6"/><rect x="452.8" y="306.6" width="0.8" height="0.8"/><rect x="433.0" y="446.3" width="1.0" height="1.0"/><rect x="420.5" y="456.1" width="0.6" height="0.6"/><rect x="385.6" y="358.9" width="1.0" height="1.0"/><rect x="415.8" y="414.5" width="1.0" height="1.0"/><rect x="391.6" y="479.1" width="1.0" height="1.0"/><rect x="391.1" y="460.5" width="1.0" height="1.0"/><rect x="382.1" y="430.0" width="0.8" height="0.8"/><rect x="439.3" y="376.5" width="0.8" height="0.8"/><rect x="431.8" y="369.2" width="1.0" height="1.0"/><rect x="392.1" y="463.4" width="0.6" height="0.6"/><rect x="449.4" y="306.4" width="0.8" height="0.8"/><rect x="456.5" y="441.7" width="0.6" height="0.6"/><rect x="446.9" y="402.1" width="0.8" height="0.8"/><rect x="367.8" y="430.9" width="1.0" height="1.0"/><rect x="387.8" y="459.1" width="0.8" height="0.8"/><rect x="389.2" y="467.2" width="0.6" height="0.6"/><rect x="435.1" y="360.7" width="1.0" height="1.0"/><rect x="459.3" y="326.8" width="1.0" height="1.0"/><rect x="404.3" y="333.5" width="0.6" height="0.6"/><rect x="466.5" y="368.2" width="0.8" height="0.8"/><rect x="415.6" y="470.7" width="1.0" height="1.0"/><rect x="474.6" y="461.1" width="0.6" height="0.6"/><rect x="481.2" y="323.5" width="0.8" height="0.8"/><rect x="449.6" y="421.4" width="0.8" height="0.8"/><rect x="476.3" y="293.1" width="1.0" height="1.0"/><rect x="452.0" y="337.9" width="0.8" height="0.8"/><rect x="409.3" y="414.4" width="0.6" height="0.6"/><rect x="401.9" y="342.4" width="1.0" height="1.0"/><rect x="456.3" y="431.2" width="0.6" height="0.6"/><rect x="415.8" y="410.3" width="0.8" height="0.8"/><rect x="390.4" y="348.9" width="0.8" height="0.8"/><rect x="456.8" y="399.0" width="1.0" height="1.0"/><rect x="444.5" y="324.1" width="0.6" height="0.6"/><rect x="436.1" y="432.0" width="0.8" height="0.8"/><rect x="479.9" y="422.7" width="1.0" height="1.0"/><rect x="408.9" y="288.2" width="1.0" height="1.0"/><rect x="401.2" y="296.6" width="1.0" height="1.0"/><rect x="440.7" y="297.5" width="0.6" height="0.6"/><rect x="449.8" y="295.5" width="0.8" height="0.8"/><rect x="391.8" y="471.8" width="1.0" height="1.0"/><rect x="478.4" y="371.9" width="1.0" height="1.0"/><rect x="414.4" y="438.3" width="0.6" height="0.6"/><rect x="400.6" y="306.1" width="0.8" height="0.8"/><rect x="420.4" y="356.4" width="1.0" height="1.0"/><rect x="456.8" y="454.8" width="1.0" height="1.0"/><rect x="443.0" y="390.2" width="1.0" height="1.0"/><rect x="451.9" y="374.1" width="1.0" height="1.0"/><rect x="470.1" y="444.4" width="0.8" height="0.8"/><rect x="459.7" y="296.8" width="1.0" height="1.0"/><rect x="467.5" y="400.4" width="0.6" height="0.6"/><rect x="433.2" y="482.9" width="1.0" height="1.0"/><rect x="395.0" y="340.3" width="0.6" height="0.6"/><rect x="386.7" y="357.8" width="0.6" height="0.6"/><rect x="390.8" y="350.4" width="0.6" height="0.6"/><rect x="450.4" y="385.8" width="0.8" height="0.8"/><rect x="395.3" y="336.6" width="1.0" height="1.0"/><rect x="451.1" y="314.8" width="1.0" height="1.0"/><rect x="409.2" y="348.2" width="1.0" height="1.0"/><rect x="383.5" y="401.2" width="0.8" height="0.8"/><rect x="443.4" y="311.7" width="0.8" height="0.8"/><rect x="459.5" y="322.0" width="1.0" height="1.0"/><rect x="385.0" y="484.8" width="0.8" height="0.8"/><rect x="468.2" y="311.0" width="0.8" height="0.8"/><rect x="367.5" y="385.8" width="0.6" height="0.6"/><rect x="373.4" y="344.5" width="0.6" height="0.6"/><rect x="379.6" y="350.1" width="0.6" height="0.6"/><rect x="385.8" y="377.5" width="1.0" height="1.0"/><rect x="410.6" y="321.8" width="0.6" height="0.6"/><rect x="371.6" y="382.2" width="0.8" height="0.8"/><rect x="376.3" y="432.1" width="1.0" height="1.0"/><rect x="435.3" y="309.9" width="0.8" height="0.8"/><rect x="483.7" y="386.2" width="1.0" height="1.0"/><rect x="405.6" y="360.2" width="0.6" height="0.6"/><rect x="445.3" y="414.2" width="1.0" height="1.0"/><rect x="446.3" y="338.5" width="0.6" height="0.6"/><rect x="375.6" y="438.2" width="0.6" height="0.6"/><rect x="461.3" y="456.8" width="0.8" height="0.8"/><rect x="411.3" y="481.4" width="1.0" height="1.0"/><rect x="470.0" y="474.3" width="0.6" height="0.6"/><rect x="378.6" y="432.5" width="0.8" height="0.8"/><rect x="457.3" y="353.7" width="0.6" height="0.6"/><rect x="445.6" y="359.6" width="0.6" height="0.6"/><rect x="411.3" y="398.8" width="0.8" height="0.8"/><rect x="469.1" y="339.0" width="0.6" height="0.6"/><rect x="371.1" y="401.9" width="1.0" height="1.0"/><rect x="479.3" y="489.0" width="0.8" height="0.8"/><rect x="477.3" y="477.9" width="0.8" height="0.8"/><rect x="418.0" y="434.9" width="0.8" height="0.8"/><rect x="440.1" y="413.9" width="0.6" height="0.6"/><rect x="450.6" y="320.9" width="0.8" height="0.8"/><rect x="444.3" y="368.7" width="0.6" height="0.6"/><rect x="470.6" y="384.4" width="0.6" height="0.6"/><rect x="454.9" y="288.6" width="1.0" height="1.0"/><rect x="471.2" y="446.2" width="0.8" height="0.8"/><rect x="383.6" y="302.5" width="0.6" height="0.6"/><rect x="429.3" y="372.7" width="0.8" height="0.8"/><rect x="373.7" y="289.8" width="0.6" height="0.6"/><rect x="477.2" y="321.1" width="0.8" height="0.8"/><rect x="366.5" y="449.6" width="1.0" height="1.0"/><rect x="408.8" y="327.3" width="0.6" height="0.6"/><rect x="432.8" y="391.9" width="0.8" height="0.8"/><rect x="485.5" y="470.7" width="0.6" height="0.6"/><rect x="485.8" y="481.3" width="1.0" height="1.0"/><rect x="376.0" y="450.7" width="1.0" height="1.0"/><rect x="449.2" y="410.4" width="0.8" height="0.8"/><rect x="435.5" y="372.6" width="0.8" height="0.8"/><rect x="425.1" y="418.1" width="0.8" height="0.8"/><rect x="472.4" y="394.6" width="1.0" height="1.0"/><rect x="369.4" y="326.0" width="1.0" height="1.0"/><rect x="457.0" y="427.0" width="0.6" height="0.6"/><rect x="447.2" y="362.8" width="1.0" height="1.0"/><rect x="482.0" y="360.4" width="0.6" height="0.6"/><rect x="435.5" y="367.7" width="0.6" height="0.6"/><rect x="394.0" y="482.7" width="0.6" height="0.6"/><rect x="433.4" y="310.6" width="0.8" height="0.8"/><rect x="445.9" y="325.7" width="1.0" height="1.0"/><rect x="396.9" y="386.3" width="1.0" height="1.0"/><rect x="422.4" y="396.8" width="1.0" height="1.0"/><rect x="379.9" y="391.2" width="1.0" height="1.0"/><rect x="435.7" y="459.2" width="1.0" height="1.0"/><rect x="375.0" y="376.3" width="1.0" height="1.0"/><rect x="433.7" y="431.6" width="0.6" height="0.6"/><rect x="443.1" y="481.0" width="1.0" height="1.0"/><rect x="378.6" y="454.9" width="0.8" height="0.8"/><rect x="432.9" y="482.6" width="0.6" height="0.6"/><rect x="435.3" y="443.8" width="0.6" height="0.6"/><rect x="411.9" y="412.4" width="0.8" height="0.8"/><rect x="395.1" y="362.8" width="0.6" height="0.6"/><rect x="452.3" y="480.1" width="0.8" height="0.8"/><rect x="402.9" y="430.2" width="0.8" height="0.8"/><rect x="477.7" y="305.6" width="0.6" height="0.6"/><rect x="435.2" y="472.4" width="0.8" height="0.8"/><rect x="386.7" y="437.8" width="0.8" height="0.8"/><rect x="464.9" y="436.0" width="0.6" height="0.6"/><rect x="467.6" y="312.7" width="0.8" height="0.8"/><rect x="429.1" y="393.5" width="0.8" height="0.8"/><rect x="454.8" y="296.7" width="1.0" height="1.0"/><rect x="409.5" y="359.5" width="0.8" height="0.8"/><rect x="464.8" y="310.7" width="1.0" height="1.0"/><rect x="395.8" y="359.2" width="1.0" height="1.0"/><rect x="421.0" y="456.5" width="1.0" height="1.0"/><rect x="420.1" y="447.0" width="0.8" height="0.8"/><rect x="379.6" y="448.9" width="0.6" height="0.6"/><rect x="384.5" y="475.2" width="1.0" height="1.0"/><rect x="448.4" y="456.1" width="1.0" height="1.0"/><rect x="473.7" y="396.2" width="1.0" height="1.0"/><rect x="459.7" y="342.0" width="0.8" height="0.8"/><rect x="367.7" y="356.8" width="0.6" height="0.6"/><rect x="425.9" y="385.3" width="0.6" height="0.6"/><rect x="464.5" y="295.1" width="0.6" height="0.6"/><rect x="442.3" y="417.6" width="1.0" height="1.0"/><rect x="414.3" y="383.6" width="0.6" height="0.6"/><rect x="451.2" y="378.2" width="0.6" height="0.6"/><rect x="473.4" y="410.8" width="0.6" height="0.6"/><rect x="410.4" y="394.2" width="0.8" height="0.8"/><rect x="476.0" y="406.4" width="0.6" height="0.6"/><rect x="392.0" y="452.7" width="1.0" height="1.0"/><rect x="423.5" y="404.0" width="0.8" height="0.8"/><rect x="481.3" y="351.2" width="0.8" height="0.8"/><rect x="437.2" y="355.1" width="0.6" height="0.6"/><rect x="396.6" y="464.1" width="1.0" height="1.0"/><rect x="371.6" y="317.3" width="1.0" height="1.0"/><rect x="383.7" y="365.3" width="0.6" height="0.6"/><rect x="427.5" y="340.7" width="1.0" height="1.0"/><rect x="436.5" y="405.5" width="0.6" height="0.6"/><rect x="488.0" y="294.9" width="1.0" height="1.0"/><rect x="477.0" y="307.1" width="0.6" height="0.6"/><rect x="461.2" y="415.3" width="1.0" height="1.0"/><rect x="378.2" y="447.2" width="0.6" height="0.6"/><rect x="473.4" y="476.7" width="1.0" height="1.0"/><rect x="374.9" y="481.6" width="0.8" height="0.8"/><rect x="457.0" y="390.3" width="1.0" height="1.0"/><rect x="396.2" y="463.4" width="1.0" height="1.0"/><rect x="415.9" y="300.2" width="0.8" height="0.8"/><rect x="448.6" y="465.6" width="0.8" height="0.8"/><rect x="428.0" y="467.7" width="0.6" height="0.6"/><rect x="488.6" y="318.3" width="0.6" height="0.6"/><rect x="366.9" y="463.1" width="0.8" height="0.8"/><rect x="415.8" y="367.6" width="0.8" height="0.8"/><rect x="480.3" y="405.9" width="0.6" height="0.6"/><rect x="403.1" y="350.0" width="1.0" height="1.0"/><rect x="436.3" y="420.4" width="0.8" height="0.8"/><rect x="375.0" y="326.2" width="0.6" height="0.6"/><rect x="437.9" y="349.2" width="0.8" height="0.8"/><rect x="487.5" y="359.8" width="1.0" height="1.0"/><rect x="418.7" y="462.5" width="0.6" height="0.6"/><rect x="469.1" y="352.2" width="0.6" height="0.6"/><rect x="399.9" y="339.8" width="0.6" height="0.6"/><rect x="459.3" y="413.9" width="0.6" height="0.6"/><rect x="452.6" y="331.9" width="0.8" height="0.8"/><rect x="421.1" y="467.5" width="0.8" height="0.8"/><rect x="472.3" y="418.3" width="0.6" height="0.6"/><rect x="395.7" y="299.4" width="0.6" height="0.6"/><rect x="439.9" y="303.9" width="1.0" height="1.0"/><rect x="408.0" y="315.5" width="0.6" height="0.6"/><rect x="399.3" y="417.1" width="0.6" height="0.6"/><rect x="444.7" y="473.5" width="0.6" height="0.6"/><rect x="405.6" y="462.4" width="0.6" height="0.6"/><rect x="445.8" y="369.5" width="1.0" height="1.0"/><rect x="464.4" y="323.1" width="0.8" height="0.8"/><rect x="463.9" y="305.5" width="1.0" height="1.0"/><rect x="407.1" y="387.4" width="1.0" height="1.0"/><rect x="415.1" y="477.0" width="0.6" height="0.6"/><rect x="369.2" y="351.7" width="1.0" height="1.0"/><rect x="487.5" y="299.3" width="1.0" height="1.0"/><rect x="453.3" y="455.8" width="0.6" height="0.6"/><rect x="377.5" y="319.4" width="0.6" height="0.6"/><rect x="431.1" y="457.0" width="0.8" height="0.8"/><rect x="466.1" y="373.1" width="1.0" height="1.0"/><rect x="449.7" y="462.0" width="0.6" height="0.6"/><rect x="446.9" y="408.9" width="0.8" height="0.8"/><rect x="394.3" y="412.4" width="1.0" height="1.0"/><rect x="424.7" y="294.4" width="1.0" height="1.0"/><rect x="404.0" y="443.3" width="1.0" height="1.0"/><rect x="421.7" y="343.9" width="1.0" height="1.0"/><rect x="431.1" y="343.1" width="0.8" height="0.8"/><rect x="367.1" y="383.6" width="1.0" height="1.0"/><rect x="465.5" y="484.3" width="0.6" height="0.6"/><rect x="487.7" y="333.9" width="0.6" height="0.6"/><rect x="481.2" y="413.6" width="0.6" height="0.6"/><rect x="373.4" y="388.9" width="1.0" height="1.0"/><rect x="461.6" y="340.1" width="1.0" height="1.0"/><rect x="411.0" y="318.0" width="0.6" height="0.6"/><rect x="473.1" y="460.0" width="0.6" height="0.6"/><rect x="431.0" y="358.5" width="1.0" height="1.0"/><rect x="395.8" y="485.4" width="0.8" height="0.8"/><rect x="392.2" y="471.4" width="0.8" height="0.8"/><rect x="422.6" y="353.1" width="0.6" height="0.6"/><rect x="379.3" y="435.4" width="0.6" height="0.6"/><rect x="465.2" y="471.6" width="1.0" height="1.0"/><rect x="472.3" y="300.1" width="1.0" height="1.0"/><rect x="412.2" y="470.3" width="0.8" height="0.8"/><rect x="482.2" y="414.1" width="0.6" height="0.6"/><rect x="369.8" y="292.2" width="1.0" height="1.0"/><rect x="419.4" y="334.5" width="0.6" height="0.6"/><rect x="406.1" y="373.5" width="0.8" height="0.8"/><rect x="402.7" y="487.9" width="0.6" height="0.6"/><rect x="486.7" y="447.0" width="0.8" height="0.8"/><rect x="472.2" y="462.7" width="0.8" height="0.8"/><rect x="483.4" y="315.4" width="0.8" height="0.8"/><rect x="400.8" y="354.6" width="0.8" height="0.8"/><rect x="473.3" y="338.2" width="0.8" height="0.8"/><rect x="450.0" y="408.1" width="0.8" height="0.8"/><rect x="392.1" y="298.5" width="0.6" height="0.6"/><rect x="470.7" y="435.8" width="0.6" height="0.6"/><rect x="461.9" y="461.5" width="0.6" height="0.6"/><rect x="419.5" y="316.1" width="0.8" height="0.8"/><rect x="450.3" y="449.8" width="0.6" height="0.6"/><rect x="485.8" y="289.9" width="0.8" height="0.8"/><rect x="384.5" y="435.9" width="0.6" height="0.6"/><rect x="458.4" y="381.4" width="0.8" height="0.8"/><rect x="377.1" y="356.2" width="1.0" height="1.0"/><rect x="454.1" y="465.3" width="0.6" height="0.6"/><rect x="438.0" y="328.5" width="1.0" height="1.0"/><rect x="450.8" y="295.6" width="1.0" height="1.0"/><rect x="439.2" y="403.5" width="1.0" height="1.0"/><rect x="378.9" y="292.0" width="0.8" height="0.8"/><rect x="373.9" y="310.2" width="0.8" height="0.8"/><rect x="485.4" y="393.6" width="0.6" height="0.6"/><rect x="388.0" y="425.8" width="0.6" height="0.6"/><rect x="443.9" y="397.6" width="0.6" height="0.6"/><rect x="431.2" y="456.8" width="0.6" height="0.6"/><rect x="409.0" y="331.2" width="0.6" height="0.6"/><rect x="456.0" y="342.9" width="0.6" height="0.6"/><rect x="367.9" y="342.1" width="0.6" height="0.6"/><rect x="390.2" y="297.6" width="1.0" height="1.0"/><rect x="483.1" y="341.7" width="0.8" height="0.8"/><rect x="450.6" y="419.3" width="1.0" height="1.0"/><rect x="400.7" y="354.5" width="0.8" height="0.8"/><rect x="486.8" y="463.7" width="1.0" height="1.0"/><rect x="399.0" y="372.8" width="1.0" height="1.0"/><rect x="417.6" y="483.6" width="0.8" height="0.8"/><rect x="459.6" y="465.2" width="0.6" height="0.6"/><rect x="476.5" y="415.6" width="0.6" height="0.6"/><rect x="440.8" y="474.2" width="0.8" height="0.8"/><rect x="451.3" y="434.7" width="0.6" height="0.6"/><rect x="467.5" y="421.3" width="0.6" height="0.6"/><rect x="469.7" y="445.6" width="1.0" height="1.0"/><rect x="372.1" y="427.5" width="0.8" height="0.8"/><rect x="450.2" y="376.9" width="1.0" height="1.0"/><rect x="404.8" y="483.3" width="0.6" height="0.6"/><rect x="424.2" y="418.1" width="0.8" height="0.8"/><rect x="428.7" y="407.1" width="0.8" height="0.8"/><rect x="394.8" y="414.5" width="1.0" height="1.0"/><rect x="472.9" y="359.4" width="0.6" height="0.6"/><rect x="414.4" y="393.8" width="1.0" height="1.0"/><rect x="447.1" y="454.1" width="0.6" height="0.6"/><rect x="443.4" y="397.2" width="0.6" height="0.6"/><rect x="479.6" y="441.8" width="0.8" height="0.8"/><rect x="477.8" y="383.1" width="1.0" height="1.0"/><rect x="408.8" y="406.5" width="1.0" height="1.0"/><rect x="393.2" y="316.6" width="1.0" height="1.0"/><rect x="410.8" y="329.2" width="0.6" height="0.6"/><rect x="466.0" y="336.0" width="0.6" height="0.6"/><rect x="384.8" y="421.0" width="0.6" height="0.6"/><rect x="444.8" y="454.3" width="1.0" height="1.0"/><rect x="472.7" y="296.7" width="0.8" height="0.8"/><rect x="410.5" y="461.6" width="0.8" height="0.8"/><rect x="381.1" y="318.9" width="0.8" height="0.8"/><rect x="412.1" y="361.3" width="1.0" height="1.0"/><rect x="464.8" y="392.8" width="0.8" height="0.8"/><rect x="447.5" y="343.3" width="0.8" height="0.8"/><rect x="488.6" y="427.7" width="0.8" height="0.8"/><rect x="444.1" y="434.9" width="0.6" height="0.6"/><rect x="459.3" y="318.1" width="1.0" height="1.0"/><rect x="382.1" y="386.2" width="1.0" height="1.0"/><rect x="395.2" y="362.5" width="0.8" height="0.8"/><rect x="464.6" y="338.8" width="1.0" height="1.0"/><rect x="390.7" y="402.7" width="0.6" height="0.6"/><rect x="438.6" y="349.6" width="1.0" height="1.0"/><rect x="399.8" y="353.1" width="0.6" height="0.6"/><rect x="398.6" y="376.1" width="1.0" height="1.0"/><rect x="444.2" y="460.6" width="0.6" height="0.6"/><rect x="381.8" y="480.6" width="0.8" height="0.8"/><rect x="442.0" y="362.7" width="0.6" height="0.6"/><rect x="454.2" y="363.5" width="0.6" height="0.6"/><rect x="453.6" y="347.3" width="0.8" height="0.8"/><rect x="419.0" y="410.1" width="0.8" height="0.8"/><rect x="409.3" y="365.5" width="1.0" height="1.0"/><rect x="381.9" y="412.3" width="1.0" height="1.0"/><rect x="437.4" y="300.7" width="0.6" height="0.6"/><rect x="406.5" y="302.2" width="0.8" height="0.8"/><rect x="412.7" y="393.7" width="0.8" height="0.8"/><rect x="481.1" y="417.2" width="0.6" height="0.6"/><rect x="379.3" y="401.3" width="0.8" height="0.8"/><rect x="452.2" y="375.7" width="0.8" height="0.8"/><rect x="387.7" y="301.1" width="0.8" height="0.8"/><rect x="426.4" y="390.9" width="0.6" height="0.6"/><rect x="448.5" y="436.8" width="0.8" height="0.8"/><rect x="432.6" y="474.1" width="0.8" height="0.8"/><rect x="434.1" y="442.6" width="0.8" height="0.8"/><rect x="380.5" y="332.4" width="0.6" height="0.6"/><rect x="436.2" y="291.1" width="0.8" height="0.8"/><rect x="376.9" y="439.4" width="1.0" height="1.0"/><rect x="421.9" y="453.6" width="0.6" height="0.6"/><rect x="453.5" y="385.0" width="0.6" height="0.6"/><rect x="433.7" y="438.3" width="1.0" height="1.0"/><rect x="383.2" y="369.8" width="0.6" height="0.6"/><rect x="473.2" y="317.3" width="0.8" height="0.8"/><rect x="389.4" y="485.4" width="0.6" height="0.6"/><rect x="487.6" y="343.2" width="0.8" height="0.8"/><rect x="376.7" y="365.1" width="1.0" height="1.0"/><rect x="471.6" y="399.7" width="1.0" height="1.0"/><rect x="475.0" y="424.9" width="0.8" height="0.8"/><rect x="403.5" y="462.2" width="0.8" height="0.8"/><rect x="471.4" y="339.7" width="0.6" height="0.6"/><rect x="382.2" y="329.7" width="1.0" height="1.0"/><rect x="412.0" y="381.3" width="0.8" height="0.8"/><rect x="453.3" y="316.4" width="0.8" height="0.8"/><rect x="390.6" y="472.8" width="1.0" height="1.0"/><rect x="447.7" y="434.6" width="0.6" height="0.6"/><rect x="431.6" y="370.2" width="1.0" height="1.0"/><rect x="467.3" y="295.1" width="0.6" height="0.6"/><rect x="463.9" y="346.6" width="1.0" height="1.0"/><rect x="391.8" y="483.6" width="1.0" height="1.0"/><rect x="421.9" y="475.9" width="0.8" height="0.8"/><rect x="391.1" y="328.8" width="0.6" height="0.6"/><rect x="419.3" y="416.5" width="0.6" height="0.6"/><rect x="382.9" y="464.9" width="1.0" height="1.0"/><rect x="427.1" y="290.9" width="1.0" height="1.0"/><rect x="435.0" y="448.9" width="0.8" height="0.8"/><rect x="393.2" y="432.8" width="1.0" height="1.0"/><rect x="402.3" y="330.4" width="0.6" height="0.6"/><rect x="383.9" y="472.5" width="0.6" height="0.6"/><rect x="429.5" y="381.6" width="0.6" height="0.6"/><rect x="462.5" y="479.1" width="0.8" height="0.8"/><rect x="393.5" y="455.5" width="1.0" height="1.0"/><rect x="477.4" y="425.9" width="0.6" height="0.6"/><rect x="472.8" y="473.7" width="0.6" height="0.6"/><rect x="371.1" y="456.1" width="0.8" height="0.8"/><rect x="459.3" y="463.8" width="0.8" height="0.8"/><rect x="453.0" y="432.6" width="0.8" height="0.8"/><rect x="478.2" y="353.2" width="0.6" height="0.6"/><rect x="384.7" y="448.7" width="0.6" height="0.6"/><rect x="414.2" y="294.6" width="0.8" height="0.8"/><rect x="385.2" y="346.5" width="1.0" height="1.0"/><rect x="433.1" y="306.8" width="0.8" height="0.8"/><rect x="384.3" y="325.0" width="0.8" height="0.8"/><rect x="449.5" y="311.0" width="0.8" height="0.8"/><rect x="381.0" y="473.6" width="1.0" height="1.0"/><rect x="481.5" y="393.8" width="0.8" height="0.8"/><rect x="426.3" y="291.6" width="0.8" height="0.8"/><rect x="475.4" y="471.5" width="0.6" height="0.6"/><rect x="425.6" y="461.7" width="1.0" height="1.0"/><rect x="437.8" y="440.0" width="0.6" height="0.6"/><rect x="383.2" y="342.5" width="0.6" height="0.6"/><rect x="437.2" y="348.3" width="1.0" height="1.0"/><rect x="439.7" y="482.4" width="0.8" height="0.8"/><rect x="389.9" y="318.6" width="0.8" height="0.8"/><rect x="372.2" y="355.0" width="0.8" height="0.8"/><rect x="425.2" y="354.2" width="0.8" height="0.8"/><rect x="388.0" y="446.3" width="0.8" height="0.8"/><rect x="465.5" y="433.5" width="0.8" height="0.8"/><rect x="377.8" y="398.9" width="0.6" height="0.6"/><rect x="439.3" y="380.7" width="0.6" height="0.6"/><rect x="370.9" y="404.4" width="0.8" height="0.8"/><rect x="445.6" y="314.5" width="1.0" height="1.0"/><rect x="469.0" y="303.3" width="1.0" height="1.0"/><rect x="447.6" y="320.9" width="0.6" height="0.6"/><rect x="447.5" y="306.1" width="0.6" height="0.6"/><rect x="469.6" y="463.6" width="0.8" height="0.8"/><rect x="403.3" y="340.5" width="0.6" height="0.6"/><rect x="474.1" y="311.5" width="0.8" height="0.8"/><rect x="399.3" y="396.8" width="0.8" height="0.8"/><rect x="423.5" y="321.0" width="1.0" height="1.0"/><rect x="371.2" y="339.5" width="0.6" height="0.6"/><rect x="400.9" y="399.6" width="0.6" height="0.6"/><rect x="477.7" y="434.0" width="1.0" height="1.0"/><rect x="427.7" y="467.0" width="0.6" height="0.6"/><rect x="379.0" y="298.8" width="1.0" height="1.0"/><rect x="436.2" y="426.5" width="0.6" height="0.6"/><rect x="376.7" y="322.4" width="0.8" height="0.8"/><rect x="488.8" y="373.2" width="1.0" height="1.0"/><rect x="429.7" y="346.7" width="0.6" height="0.6"/><rect x="376.4" y="404.3" width="0.6" height="0.6"/><rect x="396.0" y="443.8" width="1.0" height="1.0"/><rect x="453.4" y="300.5" width="0.6" height="0.6"/><rect x="375.0" y="355.8" width="0.6" height="0.6"/><rect x="371.1" y="412.3" width="1.0" height="1.0"/><rect x="387.5" y="349.0" width="0.6" height="0.6"/><rect x="465.7" y="380.8" width="0.6" height="0.6"/><rect x="367.3" y="477.0" width="0.8" height="0.8"/><rect x="462.8" y="294.5" width="0.6" height="0.6"/><rect x="384.2" y="390.8" width="0.6" height="0.6"/><rect x="384.6" y="357.2" width="0.6" height="0.6"/><rect x="391.1" y="473.9" width="1.0" height="1.0"/><rect x="406.7" y="484.2" width="0.6" height="0.6"/><rect x="463.4" y="384.4" width="0.8" height="0.8"/><rect x="430.6" y="354.3" width="0.6" height="0.6"/><rect x="458.4" y="415.9" width="0.6" height="0.6"/><rect x="472.6" y="298.1" width="0.8" height="0.8"/><rect x="462.8" y="306.6" width="1.0" height="1.0"/><rect x="485.5" y="405.1" width="0.8" height="0.8"/><rect x="448.7" y="437.9" width="0.6" height="0.6"/><rect x="397.9" y="427.4" width="0.8" height="0.8"/><rect x="477.3" y="437.7" width="1.0" height="1.0"/><rect x="438.6" y="375.5" width="1.0" height="1.0"/><rect x="462.5" y="463.0" width="0.8" height="0.8"/><rect x="458.0" y="407.3" width="1.0" height="1.0"/><rect x="482.4" y="311.3" width="0.8" height="0.8"/><rect x="458.3" y="458.3" width="0.6" height="0.6"/><rect x="390.4" y="380.0" width="0.6" height="0.6"/><rect x="473.9" y="403.6" width="1.0" height="1.0"/><rect x="475.4" y="298.1" width="1.0" height="1.0"/><rect x="462.4" y="447.5" width="1.0" height="1.0"/><rect x="461.2" y="356.9" width="0.8" height="0.8"/><rect x="416.0" y="305.5" width="1.0" height="1.0"/><rect x="448.6" y="447.2" width="1.0" height="1.0"/><rect x="439.2" y="456.1" width="0.8" height="0.8"/><rect x="366.6" y="386.3" width="0.6" height="0.6"/><rect x="483.0" y="464.5" width="0.8" height="0.8"/><rect x="417.5" y="409.6" width="0.8" height="0.8"/><rect x="383.9" y="397.6" width="0.6" height="0.6"/><rect x="409.5" y="457.8" width="1.0" height="1.0"/><rect x="370.0" y="355.5" width="0.8" height="0.8"/><rect x="389.0" y="466.8" width="0.8" height="0.8"/><rect x="447.3" y="450.2" width="0.6" height="0.6"/><rect x="392.6" y="414.1" width="0.8" height="0.8"/><rect x="467.2" y="325.0" width="0.8" height="0.8"/><rect x="406.9" y="318.3" width="0.6" height="0.6"/><rect x="393.6" y="466.9" width="1.0" height="1.0"/><rect x="474.5" y="481.1" width="0.8" height="0.8"/><rect x="427.5" y="480.1" width="1.0" height="1.0"/><rect x="463.3" y="409.9" width="0.6" height="0.6"/><rect x="414.1" y="289.8" width="0.6" height="0.6"/><rect x="378.8" y="337.4" width="1.0" height="1.0"/><rect x="465.6" y="338.4" width="0.8" height="0.8"/><rect x="449.2" y="485.9" width="1.0" height="1.0"/><rect x="472.1" y="391.3" width="0.8" height="0.8"/><rect x="382.6" y="439.4" width="0.8" height="0.8"/><rect x="448.0" y="303.3" width="1.0" height="1.0"/><rect x="406.7" y="341.5" width="0.8" height="0.8"/><rect x="410.5" y="420.9" width="1.0" height="1.0"/><rect x="450.4" y="476.5" width="1.0" height="1.0"/><rect x="373.3" y="419.6" width="0.8" height="0.8"/><rect x="410.7" y="484.2" width="0.6" height="0.6"/><rect x="473.7" y="466.5" width="0.6" height="0.6"/><rect x="434.6" y="378.0" width="1.0" height="1.0"/><rect x="475.6" y="434.5" width="1.0" height="1.0"/><rect x="422.4" y="478.6" width="0.8" height="0.8"/><rect x="382.9" y="479.5" width="0.8" height="0.8"/><rect x="383.8" y="406.1" width="1.0" height="1.0"/><rect x="428.5" y="488.5" width="0.6" height="0.6"/><rect x="457.9" y="416.9" width="0.8" height="0.8"/><rect x="443.2" y="336.6" width="1.0" height="1.0"/><rect x="369.2" y="398.2" width="0.8" height="0.8"/><rect x="445.8" y="449.8" width="1.0" height="1.0"/><rect x="444.7" y="387.1" width="1.0" height="1.0"/><rect x="410.3" y="469.5" width="0.8" height="0.8"/><rect x="385.9" y="403.6" width="0.6" height="0.6"/><rect x="463.6" y="357.8" width="0.6" height="0.6"/><rect x="390.7" y="450.3" width="0.6" height="0.6"/><rect x="385.9" y="436.4" width="0.6" height="0.6"/><rect x="449.8" y="470.4" width="1.0" height="1.0"/><rect x="402.6" y="365.0" width="0.8" height="0.8"/><rect x="484.3" y="325.6" width="0.8" height="0.8"/><rect x="475.6" y="383.4" width="1.0" height="1.0"/><rect x="405.5" y="376.1" width="0.6" height="0.6"/><rect x="449.8" y="360.7" width="0.8" height="0.8"/><rect x="413.4" y="481.7" width="0.8" height="0.8"/><rect x="379.8" y="474.1" width="1.0" height="1.0"/><rect x="421.4" y="456.3" width="1.0" height="1.0"/><rect x="385.7" y="467.4" width="0.6" height="0.6"/><rect x="384.7" y="440.2" width="0.8" height="0.8"/><rect x="447.3" y="458.5" width="0.8" height="0.8"/><rect x="458.6" y="343.4" width="0.8" height="0.8"/><rect x="454.2" y="367.5" width="0.8" height="0.8"/><rect x="470.7" y="312.3" width="0.8" height="0.8"/><rect x="460.9" y="296.3" width="1.0" height="1.0"/><rect x="435.7" y="359.1" width="0.8" height="0.8"/><rect x="398.7" y="336.9" width="0.6" height="0.6"/><rect x="473.7" y="307.4" width="1.0" height="1.0"/><rect x="449.4" y="371.0" width="1.0" height="1.0"/><rect x="379.7" y="349.7" width="1.0" height="1.0"/><rect x="387.7" y="433.3" width="1.0" height="1.0"/><rect x="451.1" y="443.7" width="0.8" height="0.8"/><rect x="469.5" y="446.7" width="0.8" height="0.8"/><rect x="415.2" y="388.5" width="0.8" height="0.8"/><rect x="409.0" y="325.3" width="0.6" height="0.6"/><rect x="431.4" y="392.8" width="1.0" height="1.0"/><rect x="480.1" y="346.0" width="0.6" height="0.6"/><rect x="407.7" y="301.3" width="0.8" height="0.8"/><rect x="374.2" y="288.6" width="1.0" height="1.0"/><rect x="448.1" y="404.1" width="0.8" height="0.8"/><rect x="392.3" y="434.5" width="1.0" height="1.0"/><rect x="463.0" y="456.5" width="0.6" height="0.6"/><rect x="393.3" y="458.8" width="0.6" height="0.6"/><rect x="427.6" y="468.6" width="0.6" height="0.6"/><rect x="457.4" y="453.0" width="1.0" height="1.0"/><rect x="412.9" y="345.8" width="1.0" height="1.0"/><rect x="452.6" y="429.5" width="1.0" height="1.0"/><rect x="476.2" y="431.1" width="1.0" height="1.0"/><rect x="440.4" y="390.3" width="1.0" height="1.0"/><rect x="392.2" y="333.0" width="0.6" height="0.6"/><rect x="410.2" y="402.4" width="0.6" height="0.6"/><rect x="410.2" y="428.6" width="0.6" height="0.6"/><rect x="381.0" y="479.7" width="0.6" height="0.6"/><rect x="366.4" y="414.5" width="0.6" height="0.6"/><rect x="421.0" y="389.2" width="0.8" height="0.8"/><rect x="438.6" y="407.7" width="0.6" height="0.6"/><rect x="370.9" y="454.3" width="0.6" height="0.6"/><rect x="425.5" y="347.1" width="0.8" height="0.8"/><rect x="484.7" y="394.7" width="0.6" height="0.6"/><rect x="392.8" y="447.5" width="0.6" height="0.6"/><rect x="400.7" y="483.8" width="1.0" height="1.0"/><rect x="432.1" y="294.1" width="0.6" height="0.6"/><rect x="369.5" y="389.4" width="0.8" height="0.8"/><rect x="412.1" y="479.9" width="0.8" height="0.8"/><rect x="455.1" y="405.6" width="0.8" height="0.8"/><rect x="414.0" y="479.9" width="0.8" height="0.8"/><rect x="393.8" y="462.4" width="0.6" height="0.6"/><rect x="464.9" y="481.2" width="0.8" height="0.8"/><rect x="446.9" y="338.6" width="1.0" height="1.0"/><rect x="424.8" y="314.9" width="0.8" height="0.8"/><rect x="485.2" y="465.0" width="1.0" height="1.0"/><rect x="421.9" y="356.7" width="0.6" height="0.6"/><rect x="379.8" y="321.3" width="0.6" height="0.6"/><rect x="375.4" y="468.4" width="0.6" height="0.6"/><rect x="419.9" y="327.7" width="1.0" height="1.0"/><rect x="457.4" y="443.4" width="0.6" height="0.6"/><rect x="434.9" y="428.9" width="0.8" height="0.8"/><rect x="458.0" y="478.6" width="1.0" height="1.0"/><rect x="454.9" y="432.6" width="0.6" height="0.6"/><rect x="409.5" y="372.0" width="1.0" height="1.0"/><rect x="454.8" y="414.7" width="0.8" height="0.8"/><rect x="434.6" y="414.1" width="1.0" height="1.0"/><rect x="443.8" y="487.3" width="0.8" height="0.8"/><rect x="378.9" y="436.6" width="1.0" height="1.0"/><rect x="409.7" y="468.7" width="1.0" height="1.0"/><rect x="422.0" y="308.5" width="0.6" height="0.6"/><rect x="471.5" y="361.1" width="0.8" height="0.8"/><rect x="425.8" y="304.6" width="0.8" height="0.8"/><rect x="463.8" y="383.7" width="0.6" height="0.6"/><rect x="470.5" y="394.2" width="0.8" height="0.8"/><rect x="428.5" y="330.1" width="0.8" height="0.8"/><rect x="446.7" y="476.4" width="0.6" height="0.6"/><rect x="453.4" y="478.0" width="1.0" height="1.0"/><rect x="419.7" y="435.2" width="0.8" height="0.8"/><rect x="385.8" y="468.2" width="0.8" height="0.8"/><rect x="382.5" y="290.6" width="0.6" height="0.6"/><rect x="455.5" y="394.8" width="0.6" height="0.6"/><rect x="367.1" y="454.9" width="0.6" height="0.6"/><rect x="423.0" y="296.7" width="1.0" height="1.0"/><rect x="431.7" y="302.3" width="0.8" height="0.8"/><rect x="407.6" y="400.5" width="0.8" height="0.8"/><rect x="425.6" y="416.5" width="0.6" height="0.6"/><rect x="366.9" y="329.1" width="0.8" height="0.8"/><rect x="413.1" y="308.9" width="1.0" height="1.0"/><rect x="473.9" y="477.9" width="0.8" height="0.8"/><rect x="422.1" y="405.7" width="1.0" height="1.0"/><rect x="450.3" y="471.7" width="0.6" height="0.6"/><rect x="436.1" y="432.6" width="0.8" height="0.8"/><rect x="386.8" y="419.0" width="1.0" height="1.0"/><rect x="487.8" y="432.1" width="0.8" height="0.8"/><rect x="451.1" y="382.8" width="0.6" height="0.6"/><rect x="380.6" y="388.1" width="0.8" height="0.8"/><rect x="373.7" y="336.0" width="0.6" height="0.6"/><rect x="366.6" y="401.8" width="1.0" height="1.0"/><rect x="467.3" y="415.4" width="1.0" height="1.0"/><rect x="445.7" y="336.8" width="0.6" height="0.6"/><rect x="464.7" y="295.7" width="0.6" height="0.6"/><rect x="415.4" y="477.2" width="0.6" height="0.6"/><rect x="461.4" y="296.9" width="1.0" height="1.0"/><rect x="444.6" y="472.8" width="0.8" height="0.8"/><rect x="371.1" y="382.1" width="0.8" height="0.8"/><rect x="459.1" y="308.9" width="1.0" height="1.0"/><rect x="377.9" y="316.8" width="1.0" height="1.0"/><rect x="386.0" y="390.9" width="0.6" height="0.6"/><rect x="428.7" y="480.3" width="0.8" height="0.8"/><rect x="478.7" y="288.5" width="0.6" height="0.6"/><rect x="434.4" y="453.1" width="1.0" height="1.0"/><rect x="435.1" y="411.2" width="1.0" height="1.0"/><rect x="375.5" y="298.9" width="1.0" height="1.0"/><rect x="441.7" y="379.9" width="1.0" height="1.0"/><rect x="366.9" y="437.7" width="0.6" height="0.6"/><rect x="389.0" y="389.9" width="0.8" height="0.8"/><rect x="391.7" y="430.3" width="1.0" height="1.0"/><rect x="391.5" y="374.2" width="0.6" height="0.6"/><rect x="441.4" y="305.4" width="1.0" height="1.0"/><rect x="409.4" y="306.9" width="1.0" height="1.0"/><rect x="395.4" y="465.2" width="0.6" height="0.6"/><rect x="377.0" y="343.1" width="0.8" height="0.8"/><rect x="459.8" y="317.7" width="1.0" height="1.0"/><rect x="436.9" y="355.3" width="0.6" height="0.6"/><rect x="366.9" y="303.1" width="0.6" height="0.6"/><rect x="450.0" y="442.2" width="0.6" height="0.6"/><rect x="430.0" y="379.6" width="0.8" height="0.8"/><rect x="479.6" y="403.5" width="0.6" height="0.6"/><rect x="478.7" y="435.3" width="0.6" height="0.6"/><rect x="478.3" y="456.3" width="1.0" height="1.0"/><rect x="455.7" y="422.7" width="0.6" height="0.6"/><rect x="470.5" y="374.6" width="0.6" height="0.6"/><rect x="388.1" y="477.5" width="0.8" height="0.8"/><rect x="397.4" y="315.0" width="0.8" height="0.8"/><rect x="470.1" y="293.7" width="0.8" height="0.8"/><rect x="377.7" y="377.0" width="1.0" height="1.0"/><rect x="446.7" y="383.1" width="1.0" height="1.0"/><rect x="468.9" y="487.8" width="0.8" height="0.8"/><rect x="399.7" y="338.2" width="0.8" height="0.8"/><rect x="432.2" y="356.5" width="1.0" height="1.0"/><rect x="475.0" y="473.1" width="0.8" height="0.8"/><rect x="366.2" y="443.0" width="0.6" height="0.6"/><rect x="475.4" y="447.7" width="1.0" height="1.0"/><rect x="385.8" y="295.1" width="0.8" height="0.8"/><rect x="418.3" y="355.7" width="0.6" height="0.6"/><rect x="432.1" y="482.1" width="0.6" height="0.6"/><rect x="392.0" y="298.7" width="1.0" height="1.0"/><rect x="432.2" y="476.5" width="0.8" height="0.8"/><rect x="480.6" y="392.3" width="1.0" height="1.0"/><rect x="377.0" y="330.7" width="0.8" height="0.8"/><rect x="458.9" y="466.0" width="1.0" height="1.0"/><rect x="398.0" y="431.9" width="0.6" height="0.6"/><rect x="441.1" y="411.5" width="0.6" height="0.6"/><rect x="450.9" y="438.0" width="0.8" height="0.8"/><rect x="396.6" y="339.7" width="0.6" height="0.6"/><rect x="377.3" y="462.1" width="1.0" height="1.0"/><rect x="397.9" y="481.8" width="1.0" height="1.0"/><rect x="457.1" y="316.5" width="0.6" height="0.6"/><rect x="439.5" y="427.7" width="0.8" height="0.8"/><rect x="375.6" y="434.6" width="1.0" height="1.0"/><rect x="367.8" y="360.7" width="0.6" height="0.6"/><rect x="434.5" y="433.2" width="1.0" height="1.0"/><rect x="485.3" y="426.2" width="0.8" height="0.8"/><rect x="479.2" y="378.5" width="0.6" height="0.6"/><rect x="397.4" y="367.4" width="1.0" height="1.0"/><rect x="450.8" y="377.4" width="1.0" height="1.0"/><rect x="474.0" y="461.1" width="0.8" height="0.8"/><rect x="408.1" y="455.3" width="0.6" height="0.6"/><rect x="413.7" y="445.7" width="0.6" height="0.6"/><rect x="471.2" y="449.4" width="1.0" height="1.0"/><rect x="407.3" y="413.6" width="0.6" height="0.6"/><rect x="374.9" y="306.0" width="1.0" height="1.0"/><rect x="447.4" y="350.7" width="0.8" height="0.8"/><rect x="388.2" y="316.9" width="0.6" height="0.6"/><rect x="468.9" y="299.5" width="0.8" height="0.8"/><rect x="446.2" y="402.5" width="0.6" height="0.6"/><rect x="373.6" y="347.5" width="0.8" height="0.8"/><rect x="470.9" y="314.1" width="0.8" height="0.8"/><rect x="410.7" y="433.3" width="0.6" height="0.6"/><rect x="411.4" y="436.2" width="0.8" height="0.8"/><rect x="411.0" y="393.1" width="0.6" height="0.6"/><rect x="473.3" y="470.8" width="0.6" height="0.6"/><rect x="401.1" y="364.5" width="0.6" height="0.6"/><rect x="393.5" y="327.0" width="0.6" height="0.6"/><rect x="459.8" y="459.5" width="0.6" height="0.6"/><rect x="444.9" y="382.8" width="0.6" height="0.6"/><rect x="372.2" y="421.4" width="0.8" height="0.8"/><rect x="394.9" y="293.9" width="0.8" height="0.8"/><rect x="426.0" y="310.1" width="1.0" height="1.0"/><rect x="453.5" y="306.8" width="0.6" height="0.6"/><rect x="425.7" y="473.5" width="0.6" height="0.6"/><rect x="418.4" y="300.2" width="0.6" height="0.6"/><rect x="374.4" y="360.6" width="0.8" height="0.8"/><rect x="395.4" y="356.0" width="0.6" height="0.6"/><rect x="374.8" y="332.7" width="1.0" height="1.0"/><rect x="392.6" y="410.8" width="0.8" height="0.8"/><rect x="379.5" y="477.7" width="1.0" height="1.0"/><rect x="372.9" y="392.8" width="1.0" height="1.0"/><rect x="472.4" y="330.7" width="0.6" height="0.6"/><rect x="424.7" y="382.2" width="0.8" height="0.8"/><rect x="462.6" y="314.5" width="0.8" height="0.8"/><rect x="443.6" y="307.7" width="0.8" height="0.8"/><rect x="447.5" y="360.6" width="0.6" height="0.6"/><rect x="452.5" y="383.5" width="0.8" height="0.8"/><rect x="388.1" y="290.2" width="1.0" height="1.0"/><rect x="465.8" y="469.4" width="1.0" height="1.0"/><rect x="423.8" y="436.8" width="1.0" height="1.0"/><rect x="445.8" y="443.3" width="1.0" height="1.0"/><rect x="440.4" y="418.9" width="0.6" height="0.6"/><rect x="413.6" y="466.3" width="0.8" height="0.8"/><rect x="457.1" y="460.3" width="0.8" height="0.8"/><rect x="446.7" y="418.8" width="1.0" height="1.0"/><rect x="393.9" y="408.2" width="1.0" height="1.0"/><rect x="376.1" y="331.6" width="0.6" height="0.6"/><rect x="401.1" y="484.1" width="0.6" height="0.6"/><rect x="403.4" y="351.1" width="0.6" height="0.6"/><rect x="481.6" y="368.8" width="1.0" height="1.0"/><rect x="386.3" y="360.3" width="0.8" height="0.8"/><rect x="394.7" y="383.9" width="1.0" height="1.0"/><rect x="471.0" y="437.2" width="1.0" height="1.0"/><rect x="488.0" y="412.9" width="0.6" height="0.6"/><rect x="389.7" y="382.6" width="0.8" height="0.8"/><rect x="488.9" y="379.8" width="0.6" height="0.6"/><rect x="485.9" y="439.9" width="0.6" height="0.6"/><rect x="416.1" y="357.0" width="1.0" height="1.0"/><rect x="453.2" y="402.3" width="0.6" height="0.6"/><rect x="395.3" y="456.2" width="0.6" height="0.6"/><rect x="440.7" y="339.8" width="0.8" height="0.8"/><rect x="424.4" y="398.1" width="0.8" height="0.8"/><rect x="382.9" y="336.3" width="0.6" height="0.6"/><rect x="399.7" y="371.6" width="0.6" height="0.6"/><rect x="488.8" y="315.2" width="0.8" height="0.8"/><rect x="475.0" y="299.4" width="0.6" height="0.6"/><rect x="418.0" y="304.1" width="0.8" height="0.8"/><rect x="463.2" y="338.9" width="1.0" height="1.0"/><rect x="447.4" y="460.9" width="1.0" height="1.0"/><rect x="399.1" y="477.3" width="0.8" height="0.8"/><rect x="377.7" y="375.6" width="0.6" height="0.6"/><rect x="485.0" y="469.7" width="0.6" height="0.6"/><rect x="401.5" y="482.3" width="0.6" height="0.6"/><rect x="417.7" y="394.4" width="0.8" height="0.8"/><rect x="465.3" y="419.3" width="1.0" height="1.0"/><rect x="437.7" y="377.7" width="0.8" height="0.8"/><rect x="446.9" y="405.8" width="0.8" height="0.8"/><rect x="476.5" y="481.4" width="0.6" height="0.6"/><rect x="419.6" y="407.0" width="0.8" height="0.8"/><rect x="436.1" y="324.5" width="1.0" height="1.0"/><rect x="483.7" y="417.3" width="0.8" height="0.8"/><rect x="411.1" y="393.3" width="1.0" height="1.0"/><rect x="467.1" y="428.9" width="0.6" height="0.6"/><rect x="442.8" y="382.8" width="1.0" height="1.0"/><rect x="406.4" y="472.9" width="0.8" height="0.8"/><rect x="424.5" y="424.3" width="1.0" height="1.0"/><rect x="483.6" y="466.8" width="0.8" height="0.8"/><rect x="483.9" y="445.9" width="0.6" height="0.6"/><rect x="486.3" y="305.9" width="0.6" height="0.6"/><rect x="432.7" y="368.6" width="0.6" height="0.6"/><rect x="476.7" y="334.7" width="1.0" height="1.0"/><rect x="453.1" y="364.4" width="0.8" height="0.8"/><rect x="460.3" y="313.6" width="0.6" height="0.6"/><rect x="444.7" y="464.7" width="0.6" height="0.6"/><rect x="370.4" y="315.3" width="0.8" height="0.8"/><rect x="441.8" y="417.9" width="0.8" height="0.8"/><rect x="437.6" y="477.4" width="1.0" height="1.0"/><rect x="432.8" y="357.4" width="0.8" height="0.8"/><rect x="404.7" y="451.1" width="1.0" height="1.0"/><rect x="368.2" y="423.9" width="0.6" height="0.6"/><rect x="414.5" y="311.5" width="1.0" height="1.0"/><rect x="460.3" y="455.9" width="1.0" height="1.0"/><rect x="391.1" y="338.0" width="1.0" height="1.0"/><rect x="484.9" y="327.5" width="0.8" height="0.8"/><rect x="445.8" y="320.8" width="0.6" height="0.6"/><rect x="439.9" y="458.8" width="1.0" height="1.0"/><rect x="371.6" y="468.3" width="1.0" height="1.0"/><rect x="431.8" y="433.8" width="0.8" height="0.8"/><rect x="369.6" y="448.5" width="0.6" height="0.6"/><rect x="376.6" y="338.0" width="0.6" height="0.6"/><rect x="394.3" y="341.3" width="1.0" height="1.0"/><rect x="462.6" y="335.5" width="0.6" height="0.6"/><rect x="380.1" y="475.9" width="0.6" height="0.6"/><rect x="384.3" y="355.4" width="1.0" height="1.0"/><rect x="408.9" y="346.6" width="1.0" height="1.0"/><rect x="424.9" y="340.0" width="0.6" height="0.6"/><rect x="480.0" y="341.1" width="0.8" height="0.8"/><rect x="377.2" y="413.4" width="1.0" height="1.0"/><rect x="485.7" y="314.5" width="1.0" height="1.0"/><rect x="406.4" y="388.9" width="0.6" height="0.6"/><rect x="389.2" y="474.7" width="1.0" height="1.0"/><rect x="465.0" y="439.0" width="1.0" height="1.0"/><rect x="418.0" y="347.3" width="0.6" height="0.6"/><rect x="394.2" y="448.2" width="0.8" height="0.8"/><rect x="377.6" y="405.8" width="0.6" height="0.6"/><rect x="463.6" y="378.9" width="0.8" height="0.8"/><rect x="463.3" y="334.5" width="0.6" height="0.6"/><rect x="467.5" y="382.9" width="0.8" height="0.8"/><rect x="383.0" y="326.7" width="1.0" height="1.0"/><rect x="392.5" y="456.8" width="0.8" height="0.8"/><rect x="395.6" y="340.0" width="0.8" height="0.8"/><rect x="430.2" y="354.7" width="0.6" height="0.6"/><rect x="369.8" y="433.6" width="0.6" height="0.6"/><rect x="429.1" y="330.5" width="1.0" height="1.0"/><rect x="451.0" y="411.6" width="0.6" height="0.6"/><rect x="391.2" y="350.5" width="1.0" height="1.0"/><rect x="476.5" y="314.4" width="0.6" height="0.6"/><rect x="393.8" y="443.0" width="1.0" height="1.0"/><rect x="454.1" y="480.7" width="0.8" height="0.8"/><rect x="414.8" y="393.1" width="0.8" height="0.8"/><rect x="372.8" y="410.5" width="0.6" height="0.6"/><rect x="402.1" y="353.3" width="0.6" height="0.6"/><rect x="384.6" y="475.3" width="0.6" height="0.6"/><rect x="422.8" y="327.7" width="0.6" height="0.6"/><rect x="462.6" y="432.4" width="0.8" height="0.8"/><rect x="450.3" y="383.8" width="0.8" height="0.8"/><rect x="461.4" y="309.3" width="0.6" height="0.6"/><rect x="442.7" y="375.9" width="0.6" height="0.6"/><rect x="397.1" y="422.4" width="0.6" height="0.6"/><rect x="421.3" y="459.3" width="1.0" height="1.0"/><rect x="417.5" y="429.7" width="1.0" height="1.0"/><rect x="421.0" y="474.4" width="0.8" height="0.8"/><rect x="442.1" y="309.1" width="0.8" height="0.8"/><rect x="376.8" y="473.4" width="0.6" height="0.6"/><rect x="370.6" y="485.2" width="1.0" height="1.0"/><rect x="381.9" y="381.6" width="1.0" height="1.0"/><rect x="370.3" y="420.2" width="1.0" height="1.0"/><rect x="460.8" y="375.9" width="0.6" height="0.6"/><rect x="383.8" y="428.2" width="1.0" height="1.0"/><rect x="484.5" y="298.3" width="0.8" height="0.8"/><rect x="477.9" y="422.7" width="1.0" height="1.0"/><rect x="379.1" y="302.2" width="0.6" height="0.6"/><rect x="466.7" y="409.3" width="0.8" height="0.8"/><rect x="386.8" y="322.9" width="0.8" height="0.8"/><rect x="453.1" y="360.8" width="0.6" height="0.6"/><rect x="422.3" y="398.9" width="0.6" height="0.6"/><rect x="397.9" y="436.9" width="1.0" height="1.0"/><rect x="477.2" y="383.0" width="0.6" height="0.6"/><rect x="440.3" y="346.0" width="0.8" height="0.8"/><rect x="414.4" y="328.6" width="0.6" height="0.6"/><rect x="458.1" y="472.0" width="0.8" height="0.8"/><rect x="379.2" y="451.5" width="0.8" height="0.8"/><rect x="464.7" y="293.6" width="1.0" height="1.0"/><rect x="423.7" y="487.1" width="0.6" height="0.6"/><rect x="486.1" y="411.7" width="0.8" height="0.8"/><rect x="387.3" y="437.7" width="0.8" height="0.8"/><rect x="450.0" y="420.6" width="0.6" height="0.6"/><rect x="467.1" y="461.5" width="1.0" height="1.0"/></g>
<path d="M433.0,291.3 C440.8,291.3 448.8,292.6 455.0,296.5 C461.2,300.4 465.6,307.4 470.0,315.0 C474.4,322.6 479.0,331.5 481.5,342.0 C484.0,352.5 484.6,367.5 485.0,378.0 C485.4,388.5 484.9,397.2 484.2,405.0 C483.5,412.8 482.6,418.2 481.0,425.0 C479.4,431.8 477.3,438.8 474.3,445.6 C471.3,452.4 467.6,459.9 463.0,466.0 C458.4,472.1 452.8,478.3 446.5,482.0 C440.2,485.7 432.4,488.2 425.5,488.0 C418.6,487.8 412.0,486.5 405.0,481.0 C398.0,475.5 388.8,465.2 383.5,455.0 C378.2,444.8 375.4,432.3 373.0,420.0 C370.6,407.7 369.0,394.3 369.2,381.0 C369.4,367.7 371.0,350.9 374.0,340.0 C377.0,329.1 381.3,322.9 387.0,315.7 C392.7,308.4 400.3,300.6 408.0,296.5 C415.7,292.4 425.2,291.3 433.0,291.3Z" fill="none" stroke="#111" stroke-width="1.4"/>
<path d="M428.0,309.5 C434.7,309.2 441.6,310.9 447.0,313.0 C452.4,315.1 457.1,316.7 460.6,321.9 C464.1,327.1 466.3,336.8 467.8,344.0 C469.3,351.2 469.3,359.3 469.5,365.0 C469.7,370.7 469.7,373.5 469.0,378.0 C468.3,382.5 467.0,387.4 465.5,392.0 C464.0,396.6 461.4,401.7 460.0,405.7 C458.6,409.7 458.0,412.3 457.4,416.0 C456.8,419.7 457.3,423.1 456.6,428.0 C455.9,432.9 454.6,441.0 453.3,445.6 C452.0,450.2 450.9,453.2 448.7,455.8 C446.5,458.4 443.4,460.3 440.0,461.5 C436.6,462.7 432.9,464.3 428.5,463.2 C424.1,462.1 418.2,458.9 413.5,455.0 C408.8,451.1 403.8,445.0 400.0,440.0 C396.2,435.0 393.4,430.8 391.0,425.0 C388.6,419.2 386.9,411.7 385.5,405.0 C384.1,398.3 382.9,392.5 382.6,385.0 C382.4,377.5 382.3,369.2 384.0,360.0 C385.7,350.8 388.9,337.5 392.7,330.0 C396.5,322.5 401.1,318.4 407.0,315.0 C412.9,311.6 421.3,309.8 428.0,309.5Z" fill="#808000" stroke="#151505" stroke-width="1"/>
<path d="M430.0,315.0 C435.8,314.9 442.3,316.7 447.0,318.5 C451.7,320.3 455.2,322.1 458.0,326.0 C460.8,329.9 462.5,336.0 463.8,342.0 C465.1,348.0 465.8,356.2 465.8,362.0 C465.8,367.8 465.0,372.0 464.0,377.0 C463.0,382.0 461.4,387.2 460.0,392.0 C458.6,396.8 456.4,401.7 455.3,405.7 C454.2,409.7 453.8,412.3 453.3,416.0 C452.8,419.7 453.1,424.0 452.5,428.0 C451.9,432.0 451.1,436.5 449.5,440.0 C447.9,443.5 446.2,446.6 443.0,449.0 C439.8,451.4 434.3,454.1 430.0,454.3 C425.7,454.5 420.8,452.4 417.0,450.0 C413.2,447.6 410.6,444.2 407.5,440.0 C404.4,435.8 401.3,430.3 398.5,425.0 C395.7,419.7 392.4,414.2 390.6,408.0 C388.8,401.8 387.9,395.2 387.6,388.0 C387.3,380.8 387.9,372.2 388.6,365.0 C389.3,357.8 390.3,351.2 392.0,345.0 C393.7,338.8 395.7,332.3 399.0,328.0 C402.3,323.7 406.8,321.2 412.0,319.0 C417.2,316.8 424.2,315.1 430.0,315.0Z" fill="#ffff00" stroke="#111" stroke-width="1.9"/>
<rect x="432.8" y="262" width="4.6" height="64" fill="#7a3838" stroke="#2a1010" stroke-width="0.6"/>
<path d="M435.1,256 L441.8,263.8 L428.4,263.8Z" fill="#7a3838" stroke="#2a1010" stroke-width="0.6"/>
<path d="M424.6,330 A11,11 0 0 1 443.6,330" fill="none" stroke="#111" stroke-width="2.2"/>
<path d="M441,331.3 H562.8 V359 H556.6 V337.2 H441Z" fill="#f7cbb7" stroke="#3a2020" stroke-width="0.8"/>
<circle cx="559.7" cy="366" r="8" fill="#f7cbb7" stroke="#222" stroke-width="1"/>
<g fill="#40207a"><circle cx="446.0" cy="334.2" r="0.95"/><circle cx="451.4" cy="334.2" r="0.95"/><circle cx="456.8" cy="334.2" r="0.95"/><circle cx="462.2" cy="334.2" r="0.95"/><circle cx="467.6" cy="334.2" r="0.95"/><circle cx="473.0" cy="334.2" r="0.95"/><circle cx="478.4" cy="334.2" r="0.95"/><circle cx="483.8" cy="334.2" r="0.95"/><circle cx="489.2" cy="334.2" r="0.95"/><circle cx="494.6" cy="334.2" r="0.95"/><circle cx="500.0" cy="334.2" r="0.95"/><circle cx="505.4" cy="334.2" r="0.95"/><circle cx="510.8" cy="334.2" r="0.95"/><circle cx="516.2" cy="334.2" r="0.95"/><circle cx="521.6" cy="334.2" r="0.95"/><circle cx="527.0" cy="334.2" r="0.95"/><circle cx="532.4" cy="334.2" r="0.95"/><circle cx="537.8" cy="334.2" r="0.95"/><circle cx="543.2" cy="334.2" r="0.95"/><circle cx="548.6" cy="334.2" r="0.95"/><circle cx="554.0" cy="334.2" r="0.95"/><circle cx="559.6" cy="340.0" r="0.95"/><circle cx="559.6" cy="345.0" r="0.95"/><circle cx="559.6" cy="350.0" r="0.95"/><circle cx="559.6" cy="355.0" r="0.95"/><circle cx="556.0" cy="362.0" r="0.95"/><circle cx="562.5" cy="361.5" r="0.95"/><circle cx="555.5" cy="368.0" r="0.95"/><circle cx="560.0" cy="366.5" r="0.95"/><circle cx="564.5" cy="367.5" r="0.95"/><circle cx="558.0" cy="371.5" r="0.95"/><circle cx="563.0" cy="371.0" r="0.95"/></g>
<ellipse cx="434" cy="334" rx="7.8" ry="8.3" fill="#e2813e" stroke="#1a1a1a" stroke-width="1.1"/>
<rect x="456" y="405.8" width="106.2" height="4.4" fill="#ee0a0a"/>
<rect x="556.8" y="380" width="5.4" height="30.2" fill="#ee0a0a"/>
<path d="M559.5,373.8 L565.3,381.8 L553.7,381.8Z" fill="#ee0a0a" stroke="#600" stroke-width="0.6"/>
</svg>
<div class="dg" style="left:443.7px;top:254px">not usable</div>
<div class="dg" style="left:442.7px;top:266px">metabolites</div>
<div class="dg" style="left:490px;top:307.5px">osmosis &nbsp; and</div>
<div class="dg" style="left:486px;top:317.5px">carrierenzymes</div>
<div class="dg" style="left:402.5px;top:346px;transform:scaleX(.955)">anabolism of</div>
<div class="dg" style="left:398px;top:358.5px;transform:scaleX(.94)">cell substance</div>
<div class="dg" style="left:415px;top:374px">and</div>
<div class="dg" style="left:393px;top:387.5px;transform:scaleX(1.0)">energy turnover</div>
<div class="dg" style="left:503.5px;top:362.5px;transform:scaleX(.96)">organic</div>
<div class="dg" style="left:496.5px;top:372.5px;transform:scaleX(.945)">substances</div>
<div class="dg" style="left:494.5px;top:413px">exudation of</div>
<div class="dg" style="left:502px;top:422.5px">enzymes</div>
<!--/DIAGRAM-->

<!-- metabolism text box -->
<div class="a" style="left:578px;top:242px;width:219px;height:250px;background:#fff;border:1px solid #abadb3"></div>
<div class="t" style="left:584px;top:244px;line-height:14.62px">
<div><b>Metabolism of bacteria:</b></div>
<div>Bacteria feed on organic substances found in</div>
<div>sewage.</div>
<div>To do this they excret <u>enzymes</u> that decompose</div>
<div>the complex molecular <u>organic substances</u> in</div>
<div>their surroundings into simply structured</div>
<div>molecules. These are dissolved in the water</div>
<div>surrounding the cell and carried to the interior of</div>
<div>the cell by <u>osmosis</u> and by <u>carrierenzymes</u></div>
<div>through the cell wall.</div>
<div>In cell plasma the dissolved organic material is</div>
<div>used to build new <u>cell substance</u> and to supply</div>
<div>energy for <u>energy turnover</u>.</div>
<div>The <u>metabolites not used</u> are transported outside</div>
<div>the cell.</div>
</div>

</body></html>
